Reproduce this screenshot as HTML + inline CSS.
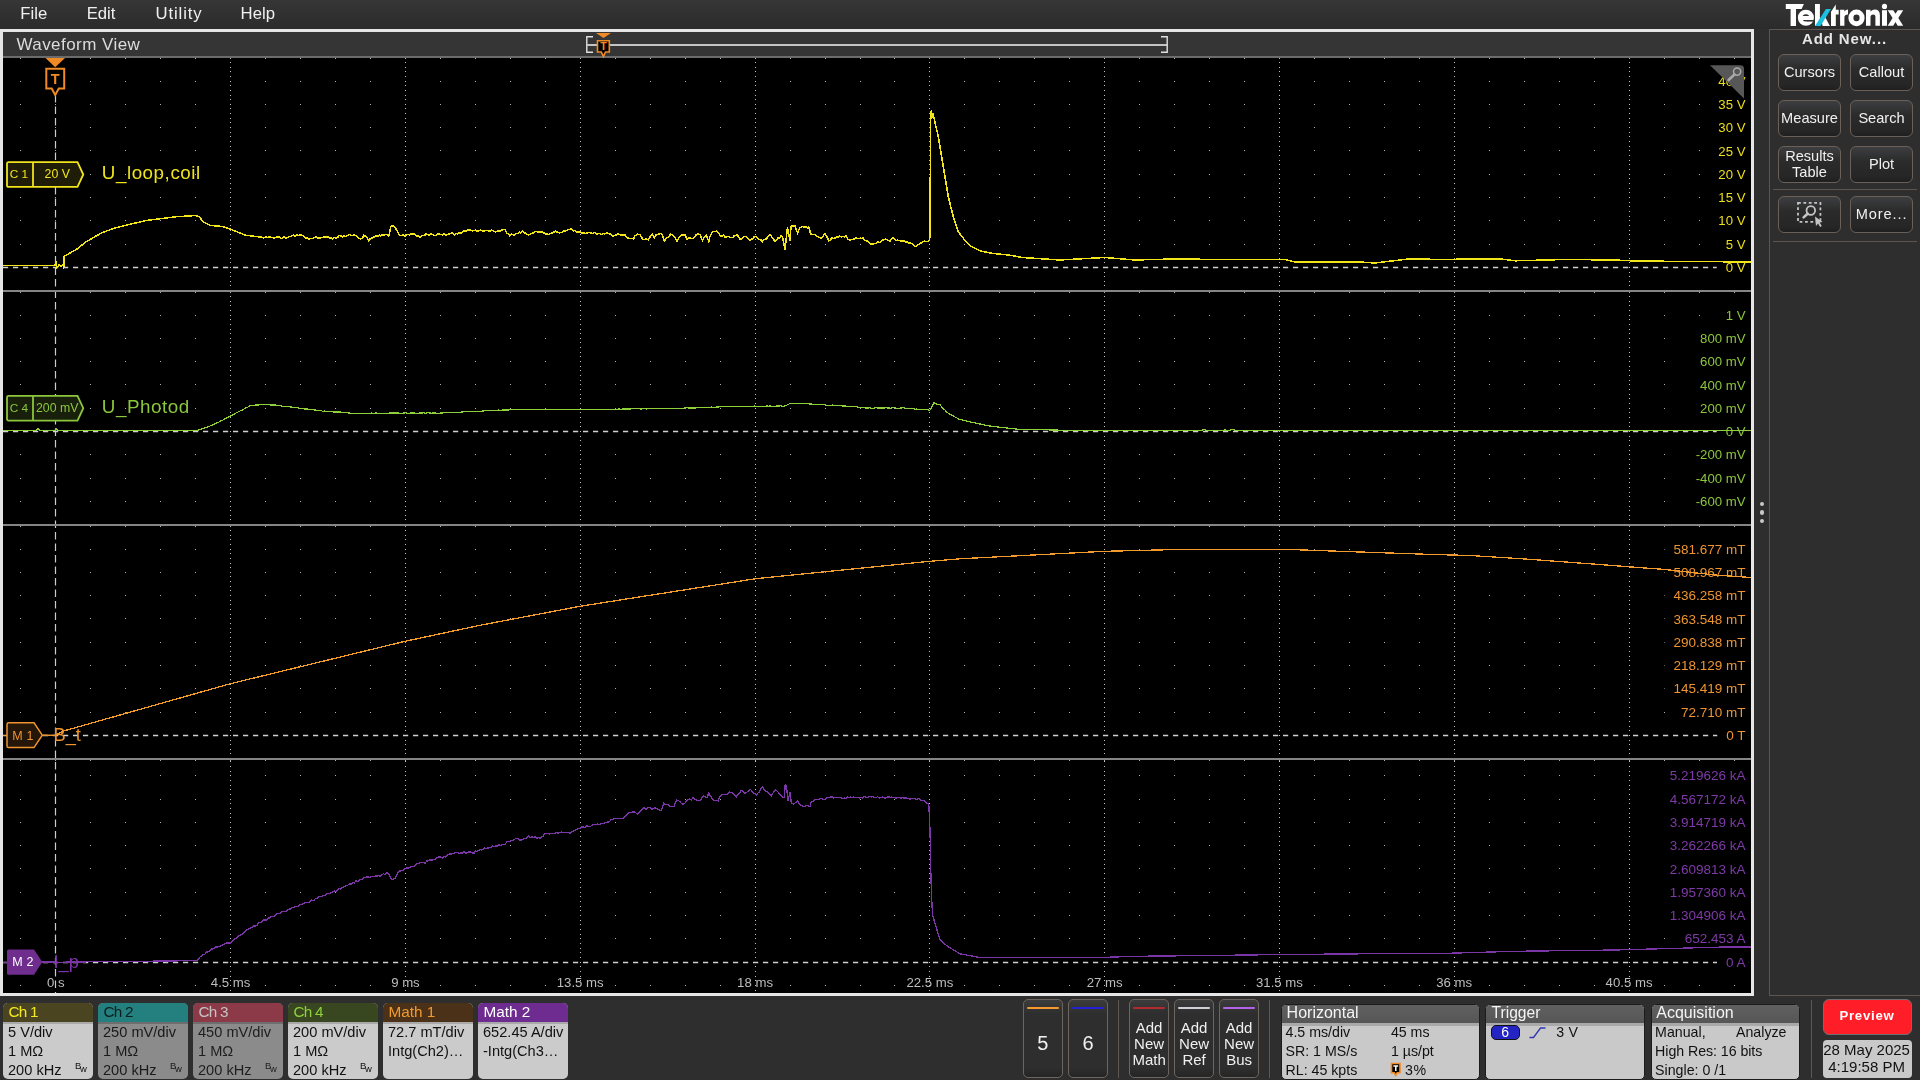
<!DOCTYPE html>
<html><head><meta charset="utf-8"><style>
*{box-sizing:border-box}
html,body{margin:0;padding:0;width:1920px;height:1080px;overflow:hidden;background:#2e2e2e;font-family:"Liberation Sans", sans-serif}
.a{position:absolute}
.btn{position:absolute;width:63px;height:37px;border:1px solid #6b6058;border-radius:6px;background:linear-gradient(#3d3e40,#2b2b2b 40%,#262626 85%,#1f1f1f)}
.tb{position:absolute;top:999.3px;width:39.5px;height:79px;border:1px solid #6e665e;border-radius:5px;background:linear-gradient(#3c3c3c,#2e2e2e 18%,#2e2e2e 88%,#252525)}
.tb .ln{position:absolute;left:3px;right:3px;top:6.5px;height:2.5px;border-radius:1px}
.vs{position:absolute;top:1000px;width:1px;height:77.6px;background:#5f5852}
.pn{position:absolute;top:1003.5px;height:76px;border-radius:5px;overflow:hidden;background:#c9c9c9;border:1px solid #1c1c1c}
.pn .h{height:18.5px;background:linear-gradient(#606060,#565656)}
.pn .s{height:2.5px;background:#a9a9a9}
</style></head><body>
<div class="a" style="left:0;top:0;width:1920px;height:29px;background:linear-gradient(#363636,#2b2b2b)"></div>
<div class="a" style="left:0;top:29px;width:1754px;height:967px;background:#e6e6e6"></div>
<div class="a" style="left:3px;top:32px;width:1748px;height:24px;background:#353535"></div>
<div class="a" style="left:3px;top:56px;width:1748px;height:1.7px;background:#6c6c6c"></div>
<div class="a" style="left:3px;top:57.7px;width:1748px;height:935.3px;background:#000"></div>
<svg class="a" style="left:0;top:0" width="1920" height="60" font-family='"Liberation Sans", sans-serif'><path d="M593,36.8 L586.8,36.8 L586.8,52.3 L593,52.3" fill="none" stroke="#e0e0e0" stroke-width="1.4"/>
<line x1="587" y1="45" x2="1167" y2="45" stroke="#c4c4c4" stroke-width="1.8"/>
<path d="M1161,36.8 L1167.2,36.8 L1167.2,52.3 L1161,52.3" fill="none" stroke="#e0e0e0" stroke-width="1.4"/>
<path d="M596,33 L611,33 L603.5,38 Z" fill="#f08a24"/>
<path d="M597.5,40.8 L609.3,40.8 L609.3,52 L605.5,52 L603.4,56.5 L601.3,52 L597.5,52 Z" fill="#000" stroke="#f08a24" stroke-width="1.6"/>
<text x="603.4" y="50.3" text-anchor="middle" fill="#f08a24" font-size="10.5" font-weight="700">T</text></svg>
<svg class="a" style="left:0;top:0;will-change:transform" width="1920" height="1000" font-family='"Liberation Sans", sans-serif'>
<clipPath id="pc"><rect x="3" y="57.7" width="1748" height="935.3"/></clipPath>
<g clip-path="url(#pc)">
<path d="M20,81h1v1h-1zM55,81h1v1h-1zM90,81h1v1h-1zM125,81h1v1h-1zM160,81h1v1h-1zM195,81h1v1h-1zM230,81h1v1h-1zM265,81h1v1h-1zM300,81h1v1h-1zM335,81h1v1h-1zM370,81h1v1h-1zM405,81h1v1h-1zM440,81h1v1h-1zM475,81h1v1h-1zM510,81h1v1h-1zM545,81h1v1h-1zM580,81h1v1h-1zM615,81h1v1h-1zM650,81h1v1h-1zM685,81h1v1h-1zM720,81h1v1h-1zM755,81h1v1h-1zM790,81h1v1h-1zM825,81h1v1h-1zM860,81h1v1h-1zM894,81h1v1h-1zM929,81h1v1h-1zM964,81h1v1h-1zM999,81h1v1h-1zM1034,81h1v1h-1zM1069,81h1v1h-1zM1104,81h1v1h-1zM1139,81h1v1h-1zM1174,81h1v1h-1zM1209,81h1v1h-1zM1244,81h1v1h-1zM1279,81h1v1h-1zM1314,81h1v1h-1zM1349,81h1v1h-1zM1384,81h1v1h-1zM1419,81h1v1h-1zM1454,81h1v1h-1zM1489,81h1v1h-1zM1524,81h1v1h-1zM1559,81h1v1h-1zM1594,81h1v1h-1zM1629,81h1v1h-1zM1664,81h1v1h-1zM1699,81h1v1h-1zM1734,81h1v1h-1zM20,104h1v1h-1zM55,104h1v1h-1zM90,104h1v1h-1zM125,104h1v1h-1zM160,104h1v1h-1zM195,104h1v1h-1zM230,104h1v1h-1zM265,104h1v1h-1zM300,104h1v1h-1zM335,104h1v1h-1zM370,104h1v1h-1zM405,104h1v1h-1zM440,104h1v1h-1zM475,104h1v1h-1zM510,104h1v1h-1zM545,104h1v1h-1zM580,104h1v1h-1zM615,104h1v1h-1zM650,104h1v1h-1zM685,104h1v1h-1zM720,104h1v1h-1zM755,104h1v1h-1zM790,104h1v1h-1zM825,104h1v1h-1zM860,104h1v1h-1zM894,104h1v1h-1zM929,104h1v1h-1zM964,104h1v1h-1zM999,104h1v1h-1zM1034,104h1v1h-1zM1069,104h1v1h-1zM1104,104h1v1h-1zM1139,104h1v1h-1zM1174,104h1v1h-1zM1209,104h1v1h-1zM1244,104h1v1h-1zM1279,104h1v1h-1zM1314,104h1v1h-1zM1349,104h1v1h-1zM1384,104h1v1h-1zM1419,104h1v1h-1zM1454,104h1v1h-1zM1489,104h1v1h-1zM1524,104h1v1h-1zM1559,104h1v1h-1zM1594,104h1v1h-1zM1629,104h1v1h-1zM1664,104h1v1h-1zM1699,104h1v1h-1zM1734,104h1v1h-1zM20,127h1v1h-1zM55,127h1v1h-1zM90,127h1v1h-1zM125,127h1v1h-1zM160,127h1v1h-1zM195,127h1v1h-1zM230,127h1v1h-1zM265,127h1v1h-1zM300,127h1v1h-1zM335,127h1v1h-1zM370,127h1v1h-1zM405,127h1v1h-1zM440,127h1v1h-1zM475,127h1v1h-1zM510,127h1v1h-1zM545,127h1v1h-1zM580,127h1v1h-1zM615,127h1v1h-1zM650,127h1v1h-1zM685,127h1v1h-1zM720,127h1v1h-1zM755,127h1v1h-1zM790,127h1v1h-1zM825,127h1v1h-1zM860,127h1v1h-1zM894,127h1v1h-1zM929,127h1v1h-1zM964,127h1v1h-1zM999,127h1v1h-1zM1034,127h1v1h-1zM1069,127h1v1h-1zM1104,127h1v1h-1zM1139,127h1v1h-1zM1174,127h1v1h-1zM1209,127h1v1h-1zM1244,127h1v1h-1zM1279,127h1v1h-1zM1314,127h1v1h-1zM1349,127h1v1h-1zM1384,127h1v1h-1zM1419,127h1v1h-1zM1454,127h1v1h-1zM1489,127h1v1h-1zM1524,127h1v1h-1zM1559,127h1v1h-1zM1594,127h1v1h-1zM1629,127h1v1h-1zM1664,127h1v1h-1zM1699,127h1v1h-1zM1734,127h1v1h-1zM20,150h1v1h-1zM55,150h1v1h-1zM90,150h1v1h-1zM125,150h1v1h-1zM160,150h1v1h-1zM195,150h1v1h-1zM230,150h1v1h-1zM265,150h1v1h-1zM300,150h1v1h-1zM335,150h1v1h-1zM370,150h1v1h-1zM405,150h1v1h-1zM440,150h1v1h-1zM475,150h1v1h-1zM510,150h1v1h-1zM545,150h1v1h-1zM580,150h1v1h-1zM615,150h1v1h-1zM650,150h1v1h-1zM685,150h1v1h-1zM720,150h1v1h-1zM755,150h1v1h-1zM790,150h1v1h-1zM825,150h1v1h-1zM860,150h1v1h-1zM894,150h1v1h-1zM929,150h1v1h-1zM964,150h1v1h-1zM999,150h1v1h-1zM1034,150h1v1h-1zM1069,150h1v1h-1zM1104,150h1v1h-1zM1139,150h1v1h-1zM1174,150h1v1h-1zM1209,150h1v1h-1zM1244,150h1v1h-1zM1279,150h1v1h-1zM1314,150h1v1h-1zM1349,150h1v1h-1zM1384,150h1v1h-1zM1419,150h1v1h-1zM1454,150h1v1h-1zM1489,150h1v1h-1zM1524,150h1v1h-1zM1559,150h1v1h-1zM1594,150h1v1h-1zM1629,150h1v1h-1zM1664,150h1v1h-1zM1699,150h1v1h-1zM1734,150h1v1h-1zM20,174h1v1h-1zM55,174h1v1h-1zM90,174h1v1h-1zM125,174h1v1h-1zM160,174h1v1h-1zM195,174h1v1h-1zM230,174h1v1h-1zM265,174h1v1h-1zM300,174h1v1h-1zM335,174h1v1h-1zM370,174h1v1h-1zM405,174h1v1h-1zM440,174h1v1h-1zM475,174h1v1h-1zM510,174h1v1h-1zM545,174h1v1h-1zM580,174h1v1h-1zM615,174h1v1h-1zM650,174h1v1h-1zM685,174h1v1h-1zM720,174h1v1h-1zM755,174h1v1h-1zM790,174h1v1h-1zM825,174h1v1h-1zM860,174h1v1h-1zM894,174h1v1h-1zM929,174h1v1h-1zM964,174h1v1h-1zM999,174h1v1h-1zM1034,174h1v1h-1zM1069,174h1v1h-1zM1104,174h1v1h-1zM1139,174h1v1h-1zM1174,174h1v1h-1zM1209,174h1v1h-1zM1244,174h1v1h-1zM1279,174h1v1h-1zM1314,174h1v1h-1zM1349,174h1v1h-1zM1384,174h1v1h-1zM1419,174h1v1h-1zM1454,174h1v1h-1zM1489,174h1v1h-1zM1524,174h1v1h-1zM1559,174h1v1h-1zM1594,174h1v1h-1zM1629,174h1v1h-1zM1664,174h1v1h-1zM1699,174h1v1h-1zM1734,174h1v1h-1zM20,197h1v1h-1zM55,197h1v1h-1zM90,197h1v1h-1zM125,197h1v1h-1zM160,197h1v1h-1zM195,197h1v1h-1zM230,197h1v1h-1zM265,197h1v1h-1zM300,197h1v1h-1zM335,197h1v1h-1zM370,197h1v1h-1zM405,197h1v1h-1zM440,197h1v1h-1zM475,197h1v1h-1zM510,197h1v1h-1zM545,197h1v1h-1zM580,197h1v1h-1zM615,197h1v1h-1zM650,197h1v1h-1zM685,197h1v1h-1zM720,197h1v1h-1zM755,197h1v1h-1zM790,197h1v1h-1zM825,197h1v1h-1zM860,197h1v1h-1zM894,197h1v1h-1zM929,197h1v1h-1zM964,197h1v1h-1zM999,197h1v1h-1zM1034,197h1v1h-1zM1069,197h1v1h-1zM1104,197h1v1h-1zM1139,197h1v1h-1zM1174,197h1v1h-1zM1209,197h1v1h-1zM1244,197h1v1h-1zM1279,197h1v1h-1zM1314,197h1v1h-1zM1349,197h1v1h-1zM1384,197h1v1h-1zM1419,197h1v1h-1zM1454,197h1v1h-1zM1489,197h1v1h-1zM1524,197h1v1h-1zM1559,197h1v1h-1zM1594,197h1v1h-1zM1629,197h1v1h-1zM1664,197h1v1h-1zM1699,197h1v1h-1zM1734,197h1v1h-1zM20,220h1v1h-1zM55,220h1v1h-1zM90,220h1v1h-1zM125,220h1v1h-1zM160,220h1v1h-1zM195,220h1v1h-1zM230,220h1v1h-1zM265,220h1v1h-1zM300,220h1v1h-1zM335,220h1v1h-1zM370,220h1v1h-1zM405,220h1v1h-1zM440,220h1v1h-1zM475,220h1v1h-1zM510,220h1v1h-1zM545,220h1v1h-1zM580,220h1v1h-1zM615,220h1v1h-1zM650,220h1v1h-1zM685,220h1v1h-1zM720,220h1v1h-1zM755,220h1v1h-1zM790,220h1v1h-1zM825,220h1v1h-1zM860,220h1v1h-1zM894,220h1v1h-1zM929,220h1v1h-1zM964,220h1v1h-1zM999,220h1v1h-1zM1034,220h1v1h-1zM1069,220h1v1h-1zM1104,220h1v1h-1zM1139,220h1v1h-1zM1174,220h1v1h-1zM1209,220h1v1h-1zM1244,220h1v1h-1zM1279,220h1v1h-1zM1314,220h1v1h-1zM1349,220h1v1h-1zM1384,220h1v1h-1zM1419,220h1v1h-1zM1454,220h1v1h-1zM1489,220h1v1h-1zM1524,220h1v1h-1zM1559,220h1v1h-1zM1594,220h1v1h-1zM1629,220h1v1h-1zM1664,220h1v1h-1zM1699,220h1v1h-1zM1734,220h1v1h-1zM20,244h1v1h-1zM55,244h1v1h-1zM90,244h1v1h-1zM125,244h1v1h-1zM160,244h1v1h-1zM195,244h1v1h-1zM230,244h1v1h-1zM265,244h1v1h-1zM300,244h1v1h-1zM335,244h1v1h-1zM370,244h1v1h-1zM405,244h1v1h-1zM440,244h1v1h-1zM475,244h1v1h-1zM510,244h1v1h-1zM545,244h1v1h-1zM580,244h1v1h-1zM615,244h1v1h-1zM650,244h1v1h-1zM685,244h1v1h-1zM720,244h1v1h-1zM755,244h1v1h-1zM790,244h1v1h-1zM825,244h1v1h-1zM860,244h1v1h-1zM894,244h1v1h-1zM929,244h1v1h-1zM964,244h1v1h-1zM999,244h1v1h-1zM1034,244h1v1h-1zM1069,244h1v1h-1zM1104,244h1v1h-1zM1139,244h1v1h-1zM1174,244h1v1h-1zM1209,244h1v1h-1zM1244,244h1v1h-1zM1279,244h1v1h-1zM1314,244h1v1h-1zM1349,244h1v1h-1zM1384,244h1v1h-1zM1419,244h1v1h-1zM1454,244h1v1h-1zM1489,244h1v1h-1zM1524,244h1v1h-1zM1559,244h1v1h-1zM1594,244h1v1h-1zM1629,244h1v1h-1zM1664,244h1v1h-1zM1699,244h1v1h-1zM1734,244h1v1h-1zM20,315h1v1h-1zM55,315h1v1h-1zM90,315h1v1h-1zM125,315h1v1h-1zM160,315h1v1h-1zM195,315h1v1h-1zM230,315h1v1h-1zM265,315h1v1h-1zM300,315h1v1h-1zM335,315h1v1h-1zM370,315h1v1h-1zM405,315h1v1h-1zM440,315h1v1h-1zM475,315h1v1h-1zM510,315h1v1h-1zM545,315h1v1h-1zM580,315h1v1h-1zM615,315h1v1h-1zM650,315h1v1h-1zM685,315h1v1h-1zM720,315h1v1h-1zM755,315h1v1h-1zM790,315h1v1h-1zM825,315h1v1h-1zM860,315h1v1h-1zM894,315h1v1h-1zM929,315h1v1h-1zM964,315h1v1h-1zM999,315h1v1h-1zM1034,315h1v1h-1zM1069,315h1v1h-1zM1104,315h1v1h-1zM1139,315h1v1h-1zM1174,315h1v1h-1zM1209,315h1v1h-1zM1244,315h1v1h-1zM1279,315h1v1h-1zM1314,315h1v1h-1zM1349,315h1v1h-1zM1384,315h1v1h-1zM1419,315h1v1h-1zM1454,315h1v1h-1zM1489,315h1v1h-1zM1524,315h1v1h-1zM1559,315h1v1h-1zM1594,315h1v1h-1zM1629,315h1v1h-1zM1664,315h1v1h-1zM1699,315h1v1h-1zM1734,315h1v1h-1zM20,338h1v1h-1zM55,338h1v1h-1zM90,338h1v1h-1zM125,338h1v1h-1zM160,338h1v1h-1zM195,338h1v1h-1zM230,338h1v1h-1zM265,338h1v1h-1zM300,338h1v1h-1zM335,338h1v1h-1zM370,338h1v1h-1zM405,338h1v1h-1zM440,338h1v1h-1zM475,338h1v1h-1zM510,338h1v1h-1zM545,338h1v1h-1zM580,338h1v1h-1zM615,338h1v1h-1zM650,338h1v1h-1zM685,338h1v1h-1zM720,338h1v1h-1zM755,338h1v1h-1zM790,338h1v1h-1zM825,338h1v1h-1zM860,338h1v1h-1zM894,338h1v1h-1zM929,338h1v1h-1zM964,338h1v1h-1zM999,338h1v1h-1zM1034,338h1v1h-1zM1069,338h1v1h-1zM1104,338h1v1h-1zM1139,338h1v1h-1zM1174,338h1v1h-1zM1209,338h1v1h-1zM1244,338h1v1h-1zM1279,338h1v1h-1zM1314,338h1v1h-1zM1349,338h1v1h-1zM1384,338h1v1h-1zM1419,338h1v1h-1zM1454,338h1v1h-1zM1489,338h1v1h-1zM1524,338h1v1h-1zM1559,338h1v1h-1zM1594,338h1v1h-1zM1629,338h1v1h-1zM1664,338h1v1h-1zM1699,338h1v1h-1zM1734,338h1v1h-1zM20,361h1v1h-1zM55,361h1v1h-1zM90,361h1v1h-1zM125,361h1v1h-1zM160,361h1v1h-1zM195,361h1v1h-1zM230,361h1v1h-1zM265,361h1v1h-1zM300,361h1v1h-1zM335,361h1v1h-1zM370,361h1v1h-1zM405,361h1v1h-1zM440,361h1v1h-1zM475,361h1v1h-1zM510,361h1v1h-1zM545,361h1v1h-1zM580,361h1v1h-1zM615,361h1v1h-1zM650,361h1v1h-1zM685,361h1v1h-1zM720,361h1v1h-1zM755,361h1v1h-1zM790,361h1v1h-1zM825,361h1v1h-1zM860,361h1v1h-1zM894,361h1v1h-1zM929,361h1v1h-1zM964,361h1v1h-1zM999,361h1v1h-1zM1034,361h1v1h-1zM1069,361h1v1h-1zM1104,361h1v1h-1zM1139,361h1v1h-1zM1174,361h1v1h-1zM1209,361h1v1h-1zM1244,361h1v1h-1zM1279,361h1v1h-1zM1314,361h1v1h-1zM1349,361h1v1h-1zM1384,361h1v1h-1zM1419,361h1v1h-1zM1454,361h1v1h-1zM1489,361h1v1h-1zM1524,361h1v1h-1zM1559,361h1v1h-1zM1594,361h1v1h-1zM1629,361h1v1h-1zM1664,361h1v1h-1zM1699,361h1v1h-1zM1734,361h1v1h-1zM20,384h1v1h-1zM55,384h1v1h-1zM90,384h1v1h-1zM125,384h1v1h-1zM160,384h1v1h-1zM195,384h1v1h-1zM230,384h1v1h-1zM265,384h1v1h-1zM300,384h1v1h-1zM335,384h1v1h-1zM370,384h1v1h-1zM405,384h1v1h-1zM440,384h1v1h-1zM475,384h1v1h-1zM510,384h1v1h-1zM545,384h1v1h-1zM580,384h1v1h-1zM615,384h1v1h-1zM650,384h1v1h-1zM685,384h1v1h-1zM720,384h1v1h-1zM755,384h1v1h-1zM790,384h1v1h-1zM825,384h1v1h-1zM860,384h1v1h-1zM894,384h1v1h-1zM929,384h1v1h-1zM964,384h1v1h-1zM999,384h1v1h-1zM1034,384h1v1h-1zM1069,384h1v1h-1zM1104,384h1v1h-1zM1139,384h1v1h-1zM1174,384h1v1h-1zM1209,384h1v1h-1zM1244,384h1v1h-1zM1279,384h1v1h-1zM1314,384h1v1h-1zM1349,384h1v1h-1zM1384,384h1v1h-1zM1419,384h1v1h-1zM1454,384h1v1h-1zM1489,384h1v1h-1zM1524,384h1v1h-1zM1559,384h1v1h-1zM1594,384h1v1h-1zM1629,384h1v1h-1zM1664,384h1v1h-1zM1699,384h1v1h-1zM1734,384h1v1h-1zM20,408h1v1h-1zM55,408h1v1h-1zM90,408h1v1h-1zM125,408h1v1h-1zM160,408h1v1h-1zM195,408h1v1h-1zM230,408h1v1h-1zM265,408h1v1h-1zM300,408h1v1h-1zM335,408h1v1h-1zM370,408h1v1h-1zM405,408h1v1h-1zM440,408h1v1h-1zM475,408h1v1h-1zM510,408h1v1h-1zM545,408h1v1h-1zM580,408h1v1h-1zM615,408h1v1h-1zM650,408h1v1h-1zM685,408h1v1h-1zM720,408h1v1h-1zM755,408h1v1h-1zM790,408h1v1h-1zM825,408h1v1h-1zM860,408h1v1h-1zM894,408h1v1h-1zM929,408h1v1h-1zM964,408h1v1h-1zM999,408h1v1h-1zM1034,408h1v1h-1zM1069,408h1v1h-1zM1104,408h1v1h-1zM1139,408h1v1h-1zM1174,408h1v1h-1zM1209,408h1v1h-1zM1244,408h1v1h-1zM1279,408h1v1h-1zM1314,408h1v1h-1zM1349,408h1v1h-1zM1384,408h1v1h-1zM1419,408h1v1h-1zM1454,408h1v1h-1zM1489,408h1v1h-1zM1524,408h1v1h-1zM1559,408h1v1h-1zM1594,408h1v1h-1zM1629,408h1v1h-1zM1664,408h1v1h-1zM1699,408h1v1h-1zM1734,408h1v1h-1zM20,454h1v1h-1zM55,454h1v1h-1zM90,454h1v1h-1zM125,454h1v1h-1zM160,454h1v1h-1zM195,454h1v1h-1zM230,454h1v1h-1zM265,454h1v1h-1zM300,454h1v1h-1zM335,454h1v1h-1zM370,454h1v1h-1zM405,454h1v1h-1zM440,454h1v1h-1zM475,454h1v1h-1zM510,454h1v1h-1zM545,454h1v1h-1zM580,454h1v1h-1zM615,454h1v1h-1zM650,454h1v1h-1zM685,454h1v1h-1zM720,454h1v1h-1zM755,454h1v1h-1zM790,454h1v1h-1zM825,454h1v1h-1zM860,454h1v1h-1zM894,454h1v1h-1zM929,454h1v1h-1zM964,454h1v1h-1zM999,454h1v1h-1zM1034,454h1v1h-1zM1069,454h1v1h-1zM1104,454h1v1h-1zM1139,454h1v1h-1zM1174,454h1v1h-1zM1209,454h1v1h-1zM1244,454h1v1h-1zM1279,454h1v1h-1zM1314,454h1v1h-1zM1349,454h1v1h-1zM1384,454h1v1h-1zM1419,454h1v1h-1zM1454,454h1v1h-1zM1489,454h1v1h-1zM1524,454h1v1h-1zM1559,454h1v1h-1zM1594,454h1v1h-1zM1629,454h1v1h-1zM1664,454h1v1h-1zM1699,454h1v1h-1zM1734,454h1v1h-1zM20,478h1v1h-1zM55,478h1v1h-1zM90,478h1v1h-1zM125,478h1v1h-1zM160,478h1v1h-1zM195,478h1v1h-1zM230,478h1v1h-1zM265,478h1v1h-1zM300,478h1v1h-1zM335,478h1v1h-1zM370,478h1v1h-1zM405,478h1v1h-1zM440,478h1v1h-1zM475,478h1v1h-1zM510,478h1v1h-1zM545,478h1v1h-1zM580,478h1v1h-1zM615,478h1v1h-1zM650,478h1v1h-1zM685,478h1v1h-1zM720,478h1v1h-1zM755,478h1v1h-1zM790,478h1v1h-1zM825,478h1v1h-1zM860,478h1v1h-1zM894,478h1v1h-1zM929,478h1v1h-1zM964,478h1v1h-1zM999,478h1v1h-1zM1034,478h1v1h-1zM1069,478h1v1h-1zM1104,478h1v1h-1zM1139,478h1v1h-1zM1174,478h1v1h-1zM1209,478h1v1h-1zM1244,478h1v1h-1zM1279,478h1v1h-1zM1314,478h1v1h-1zM1349,478h1v1h-1zM1384,478h1v1h-1zM1419,478h1v1h-1zM1454,478h1v1h-1zM1489,478h1v1h-1zM1524,478h1v1h-1zM1559,478h1v1h-1zM1594,478h1v1h-1zM1629,478h1v1h-1zM1664,478h1v1h-1zM1699,478h1v1h-1zM1734,478h1v1h-1zM20,501h1v1h-1zM55,501h1v1h-1zM90,501h1v1h-1zM125,501h1v1h-1zM160,501h1v1h-1zM195,501h1v1h-1zM230,501h1v1h-1zM265,501h1v1h-1zM300,501h1v1h-1zM335,501h1v1h-1zM370,501h1v1h-1zM405,501h1v1h-1zM440,501h1v1h-1zM475,501h1v1h-1zM510,501h1v1h-1zM545,501h1v1h-1zM580,501h1v1h-1zM615,501h1v1h-1zM650,501h1v1h-1zM685,501h1v1h-1zM720,501h1v1h-1zM755,501h1v1h-1zM790,501h1v1h-1zM825,501h1v1h-1zM860,501h1v1h-1zM894,501h1v1h-1zM929,501h1v1h-1zM964,501h1v1h-1zM999,501h1v1h-1zM1034,501h1v1h-1zM1069,501h1v1h-1zM1104,501h1v1h-1zM1139,501h1v1h-1zM1174,501h1v1h-1zM1209,501h1v1h-1zM1244,501h1v1h-1zM1279,501h1v1h-1zM1314,501h1v1h-1zM1349,501h1v1h-1zM1384,501h1v1h-1zM1419,501h1v1h-1zM1454,501h1v1h-1zM1489,501h1v1h-1zM1524,501h1v1h-1zM1559,501h1v1h-1zM1594,501h1v1h-1zM1629,501h1v1h-1zM1664,501h1v1h-1zM1699,501h1v1h-1zM1734,501h1v1h-1zM20,549h1v1h-1zM55,549h1v1h-1zM90,549h1v1h-1zM125,549h1v1h-1zM160,549h1v1h-1zM195,549h1v1h-1zM230,549h1v1h-1zM265,549h1v1h-1zM300,549h1v1h-1zM335,549h1v1h-1zM370,549h1v1h-1zM405,549h1v1h-1zM440,549h1v1h-1zM475,549h1v1h-1zM510,549h1v1h-1zM545,549h1v1h-1zM580,549h1v1h-1zM615,549h1v1h-1zM650,549h1v1h-1zM685,549h1v1h-1zM720,549h1v1h-1zM755,549h1v1h-1zM790,549h1v1h-1zM825,549h1v1h-1zM860,549h1v1h-1zM894,549h1v1h-1zM929,549h1v1h-1zM964,549h1v1h-1zM999,549h1v1h-1zM1034,549h1v1h-1zM1069,549h1v1h-1zM1104,549h1v1h-1zM1139,549h1v1h-1zM1174,549h1v1h-1zM1209,549h1v1h-1zM1244,549h1v1h-1zM1279,549h1v1h-1zM1314,549h1v1h-1zM1349,549h1v1h-1zM1384,549h1v1h-1zM1419,549h1v1h-1zM1454,549h1v1h-1zM1489,549h1v1h-1zM1524,549h1v1h-1zM1559,549h1v1h-1zM1594,549h1v1h-1zM1629,549h1v1h-1zM1664,549h1v1h-1zM1699,549h1v1h-1zM1734,549h1v1h-1zM20,572h1v1h-1zM55,572h1v1h-1zM90,572h1v1h-1zM125,572h1v1h-1zM160,572h1v1h-1zM195,572h1v1h-1zM230,572h1v1h-1zM265,572h1v1h-1zM300,572h1v1h-1zM335,572h1v1h-1zM370,572h1v1h-1zM405,572h1v1h-1zM440,572h1v1h-1zM475,572h1v1h-1zM510,572h1v1h-1zM545,572h1v1h-1zM580,572h1v1h-1zM615,572h1v1h-1zM650,572h1v1h-1zM685,572h1v1h-1zM720,572h1v1h-1zM755,572h1v1h-1zM790,572h1v1h-1zM825,572h1v1h-1zM860,572h1v1h-1zM894,572h1v1h-1zM929,572h1v1h-1zM964,572h1v1h-1zM999,572h1v1h-1zM1034,572h1v1h-1zM1069,572h1v1h-1zM1104,572h1v1h-1zM1139,572h1v1h-1zM1174,572h1v1h-1zM1209,572h1v1h-1zM1244,572h1v1h-1zM1279,572h1v1h-1zM1314,572h1v1h-1zM1349,572h1v1h-1zM1384,572h1v1h-1zM1419,572h1v1h-1zM1454,572h1v1h-1zM1489,572h1v1h-1zM1524,572h1v1h-1zM1559,572h1v1h-1zM1594,572h1v1h-1zM1629,572h1v1h-1zM1664,572h1v1h-1zM1699,572h1v1h-1zM1734,572h1v1h-1zM20,595h1v1h-1zM55,595h1v1h-1zM90,595h1v1h-1zM125,595h1v1h-1zM160,595h1v1h-1zM195,595h1v1h-1zM230,595h1v1h-1zM265,595h1v1h-1zM300,595h1v1h-1zM335,595h1v1h-1zM370,595h1v1h-1zM405,595h1v1h-1zM440,595h1v1h-1zM475,595h1v1h-1zM510,595h1v1h-1zM545,595h1v1h-1zM580,595h1v1h-1zM615,595h1v1h-1zM650,595h1v1h-1zM685,595h1v1h-1zM720,595h1v1h-1zM755,595h1v1h-1zM790,595h1v1h-1zM825,595h1v1h-1zM860,595h1v1h-1zM894,595h1v1h-1zM929,595h1v1h-1zM964,595h1v1h-1zM999,595h1v1h-1zM1034,595h1v1h-1zM1069,595h1v1h-1zM1104,595h1v1h-1zM1139,595h1v1h-1zM1174,595h1v1h-1zM1209,595h1v1h-1zM1244,595h1v1h-1zM1279,595h1v1h-1zM1314,595h1v1h-1zM1349,595h1v1h-1zM1384,595h1v1h-1zM1419,595h1v1h-1zM1454,595h1v1h-1zM1489,595h1v1h-1zM1524,595h1v1h-1zM1559,595h1v1h-1zM1594,595h1v1h-1zM1629,595h1v1h-1zM1664,595h1v1h-1zM1699,595h1v1h-1zM1734,595h1v1h-1zM20,618h1v1h-1zM55,618h1v1h-1zM90,618h1v1h-1zM125,618h1v1h-1zM160,618h1v1h-1zM195,618h1v1h-1zM230,618h1v1h-1zM265,618h1v1h-1zM300,618h1v1h-1zM335,618h1v1h-1zM370,618h1v1h-1zM405,618h1v1h-1zM440,618h1v1h-1zM475,618h1v1h-1zM510,618h1v1h-1zM545,618h1v1h-1zM580,618h1v1h-1zM615,618h1v1h-1zM650,618h1v1h-1zM685,618h1v1h-1zM720,618h1v1h-1zM755,618h1v1h-1zM790,618h1v1h-1zM825,618h1v1h-1zM860,618h1v1h-1zM894,618h1v1h-1zM929,618h1v1h-1zM964,618h1v1h-1zM999,618h1v1h-1zM1034,618h1v1h-1zM1069,618h1v1h-1zM1104,618h1v1h-1zM1139,618h1v1h-1zM1174,618h1v1h-1zM1209,618h1v1h-1zM1244,618h1v1h-1zM1279,618h1v1h-1zM1314,618h1v1h-1zM1349,618h1v1h-1zM1384,618h1v1h-1zM1419,618h1v1h-1zM1454,618h1v1h-1zM1489,618h1v1h-1zM1524,618h1v1h-1zM1559,618h1v1h-1zM1594,618h1v1h-1zM1629,618h1v1h-1zM1664,618h1v1h-1zM1699,618h1v1h-1zM1734,618h1v1h-1zM20,642h1v1h-1zM55,642h1v1h-1zM90,642h1v1h-1zM125,642h1v1h-1zM160,642h1v1h-1zM195,642h1v1h-1zM230,642h1v1h-1zM265,642h1v1h-1zM300,642h1v1h-1zM335,642h1v1h-1zM370,642h1v1h-1zM405,642h1v1h-1zM440,642h1v1h-1zM475,642h1v1h-1zM510,642h1v1h-1zM545,642h1v1h-1zM580,642h1v1h-1zM615,642h1v1h-1zM650,642h1v1h-1zM685,642h1v1h-1zM720,642h1v1h-1zM755,642h1v1h-1zM790,642h1v1h-1zM825,642h1v1h-1zM860,642h1v1h-1zM894,642h1v1h-1zM929,642h1v1h-1zM964,642h1v1h-1zM999,642h1v1h-1zM1034,642h1v1h-1zM1069,642h1v1h-1zM1104,642h1v1h-1zM1139,642h1v1h-1zM1174,642h1v1h-1zM1209,642h1v1h-1zM1244,642h1v1h-1zM1279,642h1v1h-1zM1314,642h1v1h-1zM1349,642h1v1h-1zM1384,642h1v1h-1zM1419,642h1v1h-1zM1454,642h1v1h-1zM1489,642h1v1h-1zM1524,642h1v1h-1zM1559,642h1v1h-1zM1594,642h1v1h-1zM1629,642h1v1h-1zM1664,642h1v1h-1zM1699,642h1v1h-1zM1734,642h1v1h-1zM20,665h1v1h-1zM55,665h1v1h-1zM90,665h1v1h-1zM125,665h1v1h-1zM160,665h1v1h-1zM195,665h1v1h-1zM230,665h1v1h-1zM265,665h1v1h-1zM300,665h1v1h-1zM335,665h1v1h-1zM370,665h1v1h-1zM405,665h1v1h-1zM440,665h1v1h-1zM475,665h1v1h-1zM510,665h1v1h-1zM545,665h1v1h-1zM580,665h1v1h-1zM615,665h1v1h-1zM650,665h1v1h-1zM685,665h1v1h-1zM720,665h1v1h-1zM755,665h1v1h-1zM790,665h1v1h-1zM825,665h1v1h-1zM860,665h1v1h-1zM894,665h1v1h-1zM929,665h1v1h-1zM964,665h1v1h-1zM999,665h1v1h-1zM1034,665h1v1h-1zM1069,665h1v1h-1zM1104,665h1v1h-1zM1139,665h1v1h-1zM1174,665h1v1h-1zM1209,665h1v1h-1zM1244,665h1v1h-1zM1279,665h1v1h-1zM1314,665h1v1h-1zM1349,665h1v1h-1zM1384,665h1v1h-1zM1419,665h1v1h-1zM1454,665h1v1h-1zM1489,665h1v1h-1zM1524,665h1v1h-1zM1559,665h1v1h-1zM1594,665h1v1h-1zM1629,665h1v1h-1zM1664,665h1v1h-1zM1699,665h1v1h-1zM1734,665h1v1h-1zM20,688h1v1h-1zM55,688h1v1h-1zM90,688h1v1h-1zM125,688h1v1h-1zM160,688h1v1h-1zM195,688h1v1h-1zM230,688h1v1h-1zM265,688h1v1h-1zM300,688h1v1h-1zM335,688h1v1h-1zM370,688h1v1h-1zM405,688h1v1h-1zM440,688h1v1h-1zM475,688h1v1h-1zM510,688h1v1h-1zM545,688h1v1h-1zM580,688h1v1h-1zM615,688h1v1h-1zM650,688h1v1h-1zM685,688h1v1h-1zM720,688h1v1h-1zM755,688h1v1h-1zM790,688h1v1h-1zM825,688h1v1h-1zM860,688h1v1h-1zM894,688h1v1h-1zM929,688h1v1h-1zM964,688h1v1h-1zM999,688h1v1h-1zM1034,688h1v1h-1zM1069,688h1v1h-1zM1104,688h1v1h-1zM1139,688h1v1h-1zM1174,688h1v1h-1zM1209,688h1v1h-1zM1244,688h1v1h-1zM1279,688h1v1h-1zM1314,688h1v1h-1zM1349,688h1v1h-1zM1384,688h1v1h-1zM1419,688h1v1h-1zM1454,688h1v1h-1zM1489,688h1v1h-1zM1524,688h1v1h-1zM1559,688h1v1h-1zM1594,688h1v1h-1zM1629,688h1v1h-1zM1664,688h1v1h-1zM1699,688h1v1h-1zM1734,688h1v1h-1zM20,712h1v1h-1zM55,712h1v1h-1zM90,712h1v1h-1zM125,712h1v1h-1zM160,712h1v1h-1zM195,712h1v1h-1zM230,712h1v1h-1zM265,712h1v1h-1zM300,712h1v1h-1zM335,712h1v1h-1zM370,712h1v1h-1zM405,712h1v1h-1zM440,712h1v1h-1zM475,712h1v1h-1zM510,712h1v1h-1zM545,712h1v1h-1zM580,712h1v1h-1zM615,712h1v1h-1zM650,712h1v1h-1zM685,712h1v1h-1zM720,712h1v1h-1zM755,712h1v1h-1zM790,712h1v1h-1zM825,712h1v1h-1zM860,712h1v1h-1zM894,712h1v1h-1zM929,712h1v1h-1zM964,712h1v1h-1zM999,712h1v1h-1zM1034,712h1v1h-1zM1069,712h1v1h-1zM1104,712h1v1h-1zM1139,712h1v1h-1zM1174,712h1v1h-1zM1209,712h1v1h-1zM1244,712h1v1h-1zM1279,712h1v1h-1zM1314,712h1v1h-1zM1349,712h1v1h-1zM1384,712h1v1h-1zM1419,712h1v1h-1zM1454,712h1v1h-1zM1489,712h1v1h-1zM1524,712h1v1h-1zM1559,712h1v1h-1zM1594,712h1v1h-1zM1629,712h1v1h-1zM1664,712h1v1h-1zM1699,712h1v1h-1zM1734,712h1v1h-1zM20,775h1v1h-1zM55,775h1v1h-1zM90,775h1v1h-1zM125,775h1v1h-1zM160,775h1v1h-1zM195,775h1v1h-1zM230,775h1v1h-1zM265,775h1v1h-1zM300,775h1v1h-1zM335,775h1v1h-1zM370,775h1v1h-1zM405,775h1v1h-1zM440,775h1v1h-1zM475,775h1v1h-1zM510,775h1v1h-1zM545,775h1v1h-1zM580,775h1v1h-1zM615,775h1v1h-1zM650,775h1v1h-1zM685,775h1v1h-1zM720,775h1v1h-1zM755,775h1v1h-1zM790,775h1v1h-1zM825,775h1v1h-1zM860,775h1v1h-1zM894,775h1v1h-1zM929,775h1v1h-1zM964,775h1v1h-1zM999,775h1v1h-1zM1034,775h1v1h-1zM1069,775h1v1h-1zM1104,775h1v1h-1zM1139,775h1v1h-1zM1174,775h1v1h-1zM1209,775h1v1h-1zM1244,775h1v1h-1zM1279,775h1v1h-1zM1314,775h1v1h-1zM1349,775h1v1h-1zM1384,775h1v1h-1zM1419,775h1v1h-1zM1454,775h1v1h-1zM1489,775h1v1h-1zM1524,775h1v1h-1zM1559,775h1v1h-1zM1594,775h1v1h-1zM1629,775h1v1h-1zM1664,775h1v1h-1zM1699,775h1v1h-1zM1734,775h1v1h-1zM20,799h1v1h-1zM55,799h1v1h-1zM90,799h1v1h-1zM125,799h1v1h-1zM160,799h1v1h-1zM195,799h1v1h-1zM230,799h1v1h-1zM265,799h1v1h-1zM300,799h1v1h-1zM335,799h1v1h-1zM370,799h1v1h-1zM405,799h1v1h-1zM440,799h1v1h-1zM475,799h1v1h-1zM510,799h1v1h-1zM545,799h1v1h-1zM580,799h1v1h-1zM615,799h1v1h-1zM650,799h1v1h-1zM685,799h1v1h-1zM720,799h1v1h-1zM755,799h1v1h-1zM790,799h1v1h-1zM825,799h1v1h-1zM860,799h1v1h-1zM894,799h1v1h-1zM929,799h1v1h-1zM964,799h1v1h-1zM999,799h1v1h-1zM1034,799h1v1h-1zM1069,799h1v1h-1zM1104,799h1v1h-1zM1139,799h1v1h-1zM1174,799h1v1h-1zM1209,799h1v1h-1zM1244,799h1v1h-1zM1279,799h1v1h-1zM1314,799h1v1h-1zM1349,799h1v1h-1zM1384,799h1v1h-1zM1419,799h1v1h-1zM1454,799h1v1h-1zM1489,799h1v1h-1zM1524,799h1v1h-1zM1559,799h1v1h-1zM1594,799h1v1h-1zM1629,799h1v1h-1zM1664,799h1v1h-1zM1699,799h1v1h-1zM1734,799h1v1h-1zM20,822h1v1h-1zM55,822h1v1h-1zM90,822h1v1h-1zM125,822h1v1h-1zM160,822h1v1h-1zM195,822h1v1h-1zM230,822h1v1h-1zM265,822h1v1h-1zM300,822h1v1h-1zM335,822h1v1h-1zM370,822h1v1h-1zM405,822h1v1h-1zM440,822h1v1h-1zM475,822h1v1h-1zM510,822h1v1h-1zM545,822h1v1h-1zM580,822h1v1h-1zM615,822h1v1h-1zM650,822h1v1h-1zM685,822h1v1h-1zM720,822h1v1h-1zM755,822h1v1h-1zM790,822h1v1h-1zM825,822h1v1h-1zM860,822h1v1h-1zM894,822h1v1h-1zM929,822h1v1h-1zM964,822h1v1h-1zM999,822h1v1h-1zM1034,822h1v1h-1zM1069,822h1v1h-1zM1104,822h1v1h-1zM1139,822h1v1h-1zM1174,822h1v1h-1zM1209,822h1v1h-1zM1244,822h1v1h-1zM1279,822h1v1h-1zM1314,822h1v1h-1zM1349,822h1v1h-1zM1384,822h1v1h-1zM1419,822h1v1h-1zM1454,822h1v1h-1zM1489,822h1v1h-1zM1524,822h1v1h-1zM1559,822h1v1h-1zM1594,822h1v1h-1zM1629,822h1v1h-1zM1664,822h1v1h-1zM1699,822h1v1h-1zM1734,822h1v1h-1zM20,845h1v1h-1zM55,845h1v1h-1zM90,845h1v1h-1zM125,845h1v1h-1zM160,845h1v1h-1zM195,845h1v1h-1zM230,845h1v1h-1zM265,845h1v1h-1zM300,845h1v1h-1zM335,845h1v1h-1zM370,845h1v1h-1zM405,845h1v1h-1zM440,845h1v1h-1zM475,845h1v1h-1zM510,845h1v1h-1zM545,845h1v1h-1zM580,845h1v1h-1zM615,845h1v1h-1zM650,845h1v1h-1zM685,845h1v1h-1zM720,845h1v1h-1zM755,845h1v1h-1zM790,845h1v1h-1zM825,845h1v1h-1zM860,845h1v1h-1zM894,845h1v1h-1zM929,845h1v1h-1zM964,845h1v1h-1zM999,845h1v1h-1zM1034,845h1v1h-1zM1069,845h1v1h-1zM1104,845h1v1h-1zM1139,845h1v1h-1zM1174,845h1v1h-1zM1209,845h1v1h-1zM1244,845h1v1h-1zM1279,845h1v1h-1zM1314,845h1v1h-1zM1349,845h1v1h-1zM1384,845h1v1h-1zM1419,845h1v1h-1zM1454,845h1v1h-1zM1489,845h1v1h-1zM1524,845h1v1h-1zM1559,845h1v1h-1zM1594,845h1v1h-1zM1629,845h1v1h-1zM1664,845h1v1h-1zM1699,845h1v1h-1zM1734,845h1v1h-1zM20,868h1v1h-1zM55,868h1v1h-1zM90,868h1v1h-1zM125,868h1v1h-1zM160,868h1v1h-1zM195,868h1v1h-1zM230,868h1v1h-1zM265,868h1v1h-1zM300,868h1v1h-1zM335,868h1v1h-1zM370,868h1v1h-1zM405,868h1v1h-1zM440,868h1v1h-1zM475,868h1v1h-1zM510,868h1v1h-1zM545,868h1v1h-1zM580,868h1v1h-1zM615,868h1v1h-1zM650,868h1v1h-1zM685,868h1v1h-1zM720,868h1v1h-1zM755,868h1v1h-1zM790,868h1v1h-1zM825,868h1v1h-1zM860,868h1v1h-1zM894,868h1v1h-1zM929,868h1v1h-1zM964,868h1v1h-1zM999,868h1v1h-1zM1034,868h1v1h-1zM1069,868h1v1h-1zM1104,868h1v1h-1zM1139,868h1v1h-1zM1174,868h1v1h-1zM1209,868h1v1h-1zM1244,868h1v1h-1zM1279,868h1v1h-1zM1314,868h1v1h-1zM1349,868h1v1h-1zM1384,868h1v1h-1zM1419,868h1v1h-1zM1454,868h1v1h-1zM1489,868h1v1h-1zM1524,868h1v1h-1zM1559,868h1v1h-1zM1594,868h1v1h-1zM1629,868h1v1h-1zM1664,868h1v1h-1zM1699,868h1v1h-1zM1734,868h1v1h-1zM20,892h1v1h-1zM55,892h1v1h-1zM90,892h1v1h-1zM125,892h1v1h-1zM160,892h1v1h-1zM195,892h1v1h-1zM230,892h1v1h-1zM265,892h1v1h-1zM300,892h1v1h-1zM335,892h1v1h-1zM370,892h1v1h-1zM405,892h1v1h-1zM440,892h1v1h-1zM475,892h1v1h-1zM510,892h1v1h-1zM545,892h1v1h-1zM580,892h1v1h-1zM615,892h1v1h-1zM650,892h1v1h-1zM685,892h1v1h-1zM720,892h1v1h-1zM755,892h1v1h-1zM790,892h1v1h-1zM825,892h1v1h-1zM860,892h1v1h-1zM894,892h1v1h-1zM929,892h1v1h-1zM964,892h1v1h-1zM999,892h1v1h-1zM1034,892h1v1h-1zM1069,892h1v1h-1zM1104,892h1v1h-1zM1139,892h1v1h-1zM1174,892h1v1h-1zM1209,892h1v1h-1zM1244,892h1v1h-1zM1279,892h1v1h-1zM1314,892h1v1h-1zM1349,892h1v1h-1zM1384,892h1v1h-1zM1419,892h1v1h-1zM1454,892h1v1h-1zM1489,892h1v1h-1zM1524,892h1v1h-1zM1559,892h1v1h-1zM1594,892h1v1h-1zM1629,892h1v1h-1zM1664,892h1v1h-1zM1699,892h1v1h-1zM1734,892h1v1h-1zM20,915h1v1h-1zM55,915h1v1h-1zM90,915h1v1h-1zM125,915h1v1h-1zM160,915h1v1h-1zM195,915h1v1h-1zM230,915h1v1h-1zM265,915h1v1h-1zM300,915h1v1h-1zM335,915h1v1h-1zM370,915h1v1h-1zM405,915h1v1h-1zM440,915h1v1h-1zM475,915h1v1h-1zM510,915h1v1h-1zM545,915h1v1h-1zM580,915h1v1h-1zM615,915h1v1h-1zM650,915h1v1h-1zM685,915h1v1h-1zM720,915h1v1h-1zM755,915h1v1h-1zM790,915h1v1h-1zM825,915h1v1h-1zM860,915h1v1h-1zM894,915h1v1h-1zM929,915h1v1h-1zM964,915h1v1h-1zM999,915h1v1h-1zM1034,915h1v1h-1zM1069,915h1v1h-1zM1104,915h1v1h-1zM1139,915h1v1h-1zM1174,915h1v1h-1zM1209,915h1v1h-1zM1244,915h1v1h-1zM1279,915h1v1h-1zM1314,915h1v1h-1zM1349,915h1v1h-1zM1384,915h1v1h-1zM1419,915h1v1h-1zM1454,915h1v1h-1zM1489,915h1v1h-1zM1524,915h1v1h-1zM1559,915h1v1h-1zM1594,915h1v1h-1zM1629,915h1v1h-1zM1664,915h1v1h-1zM1699,915h1v1h-1zM1734,915h1v1h-1zM20,938h1v1h-1zM55,938h1v1h-1zM90,938h1v1h-1zM125,938h1v1h-1zM160,938h1v1h-1zM195,938h1v1h-1zM230,938h1v1h-1zM265,938h1v1h-1zM300,938h1v1h-1zM335,938h1v1h-1zM370,938h1v1h-1zM405,938h1v1h-1zM440,938h1v1h-1zM475,938h1v1h-1zM510,938h1v1h-1zM545,938h1v1h-1zM580,938h1v1h-1zM615,938h1v1h-1zM650,938h1v1h-1zM685,938h1v1h-1zM720,938h1v1h-1zM755,938h1v1h-1zM790,938h1v1h-1zM825,938h1v1h-1zM860,938h1v1h-1zM894,938h1v1h-1zM929,938h1v1h-1zM964,938h1v1h-1zM999,938h1v1h-1zM1034,938h1v1h-1zM1069,938h1v1h-1zM1104,938h1v1h-1zM1139,938h1v1h-1zM1174,938h1v1h-1zM1209,938h1v1h-1zM1244,938h1v1h-1zM1279,938h1v1h-1zM1314,938h1v1h-1zM1349,938h1v1h-1zM1384,938h1v1h-1zM1419,938h1v1h-1zM1454,938h1v1h-1zM1489,938h1v1h-1zM1524,938h1v1h-1zM1559,938h1v1h-1zM1594,938h1v1h-1zM1629,938h1v1h-1zM1664,938h1v1h-1zM1699,938h1v1h-1zM1734,938h1v1h-1zM20,985h1v1h-1zM55,985h1v1h-1zM90,985h1v1h-1zM125,985h1v1h-1zM160,985h1v1h-1zM195,985h1v1h-1zM230,985h1v1h-1zM265,985h1v1h-1zM300,985h1v1h-1zM335,985h1v1h-1zM370,985h1v1h-1zM405,985h1v1h-1zM440,985h1v1h-1zM475,985h1v1h-1zM510,985h1v1h-1zM545,985h1v1h-1zM580,985h1v1h-1zM615,985h1v1h-1zM650,985h1v1h-1zM685,985h1v1h-1zM720,985h1v1h-1zM755,985h1v1h-1zM790,985h1v1h-1zM825,985h1v1h-1zM860,985h1v1h-1zM894,985h1v1h-1zM929,985h1v1h-1zM964,985h1v1h-1zM999,985h1v1h-1zM1034,985h1v1h-1zM1069,985h1v1h-1zM1104,985h1v1h-1zM1139,985h1v1h-1zM1174,985h1v1h-1zM1209,985h1v1h-1zM1244,985h1v1h-1zM1279,985h1v1h-1zM1314,985h1v1h-1zM1349,985h1v1h-1zM1384,985h1v1h-1zM1419,985h1v1h-1zM1454,985h1v1h-1zM1489,985h1v1h-1zM1524,985h1v1h-1zM1559,985h1v1h-1zM1594,985h1v1h-1zM1629,985h1v1h-1zM1664,985h1v1h-1zM1699,985h1v1h-1zM1734,985h1v1h-1zM20,58h1v1h-1zM55,58h1v1h-1zM90,58h1v1h-1zM125,58h1v1h-1zM160,58h1v1h-1zM195,58h1v1h-1zM230,58h1v1h-1zM265,58h1v1h-1zM300,58h1v1h-1zM335,58h1v1h-1zM370,58h1v1h-1zM405,58h1v1h-1zM440,58h1v1h-1zM475,58h1v1h-1zM510,58h1v1h-1zM545,58h1v1h-1zM580,58h1v1h-1zM615,58h1v1h-1zM650,58h1v1h-1zM685,58h1v1h-1zM720,58h1v1h-1zM755,58h1v1h-1zM790,58h1v1h-1zM825,58h1v1h-1zM860,58h1v1h-1zM894,58h1v1h-1zM929,58h1v1h-1zM964,58h1v1h-1zM999,58h1v1h-1zM1034,58h1v1h-1zM1069,58h1v1h-1zM1104,58h1v1h-1zM1139,58h1v1h-1zM1174,58h1v1h-1zM1209,58h1v1h-1zM1244,58h1v1h-1zM1279,58h1v1h-1zM1314,58h1v1h-1zM1349,58h1v1h-1zM1384,58h1v1h-1zM1419,58h1v1h-1zM1454,58h1v1h-1zM1489,58h1v1h-1zM1524,58h1v1h-1zM1559,58h1v1h-1zM1594,58h1v1h-1zM1629,58h1v1h-1zM1664,58h1v1h-1zM1699,58h1v1h-1zM1734,58h1v1h-1zM20,292h1v1h-1zM55,292h1v1h-1zM90,292h1v1h-1zM125,292h1v1h-1zM160,292h1v1h-1zM195,292h1v1h-1zM230,292h1v1h-1zM265,292h1v1h-1zM300,292h1v1h-1zM335,292h1v1h-1zM370,292h1v1h-1zM405,292h1v1h-1zM440,292h1v1h-1zM475,292h1v1h-1zM510,292h1v1h-1zM545,292h1v1h-1zM580,292h1v1h-1zM615,292h1v1h-1zM650,292h1v1h-1zM685,292h1v1h-1zM720,292h1v1h-1zM755,292h1v1h-1zM790,292h1v1h-1zM825,292h1v1h-1zM860,292h1v1h-1zM894,292h1v1h-1zM929,292h1v1h-1zM964,292h1v1h-1zM999,292h1v1h-1zM1034,292h1v1h-1zM1069,292h1v1h-1zM1104,292h1v1h-1zM1139,292h1v1h-1zM1174,292h1v1h-1zM1209,292h1v1h-1zM1244,292h1v1h-1zM1279,292h1v1h-1zM1314,292h1v1h-1zM1349,292h1v1h-1zM1384,292h1v1h-1zM1419,292h1v1h-1zM1454,292h1v1h-1zM1489,292h1v1h-1zM1524,292h1v1h-1zM1559,292h1v1h-1zM1594,292h1v1h-1zM1629,292h1v1h-1zM1664,292h1v1h-1zM1699,292h1v1h-1zM1734,292h1v1h-1zM20,526h1v1h-1zM55,526h1v1h-1zM90,526h1v1h-1zM125,526h1v1h-1zM160,526h1v1h-1zM195,526h1v1h-1zM230,526h1v1h-1zM265,526h1v1h-1zM300,526h1v1h-1zM335,526h1v1h-1zM370,526h1v1h-1zM405,526h1v1h-1zM440,526h1v1h-1zM475,526h1v1h-1zM510,526h1v1h-1zM545,526h1v1h-1zM580,526h1v1h-1zM615,526h1v1h-1zM650,526h1v1h-1zM685,526h1v1h-1zM720,526h1v1h-1zM755,526h1v1h-1zM790,526h1v1h-1zM825,526h1v1h-1zM860,526h1v1h-1zM894,526h1v1h-1zM929,526h1v1h-1zM964,526h1v1h-1zM999,526h1v1h-1zM1034,526h1v1h-1zM1069,526h1v1h-1zM1104,526h1v1h-1zM1139,526h1v1h-1zM1174,526h1v1h-1zM1209,526h1v1h-1zM1244,526h1v1h-1zM1279,526h1v1h-1zM1314,526h1v1h-1zM1349,526h1v1h-1zM1384,526h1v1h-1zM1419,526h1v1h-1zM1454,526h1v1h-1zM1489,526h1v1h-1zM1524,526h1v1h-1zM1559,526h1v1h-1zM1594,526h1v1h-1zM1629,526h1v1h-1zM1664,526h1v1h-1zM1699,526h1v1h-1zM1734,526h1v1h-1zM20,760h1v1h-1zM55,760h1v1h-1zM90,760h1v1h-1zM125,760h1v1h-1zM160,760h1v1h-1zM195,760h1v1h-1zM230,760h1v1h-1zM265,760h1v1h-1zM300,760h1v1h-1zM335,760h1v1h-1zM370,760h1v1h-1zM405,760h1v1h-1zM440,760h1v1h-1zM475,760h1v1h-1zM510,760h1v1h-1zM545,760h1v1h-1zM580,760h1v1h-1zM615,760h1v1h-1zM650,760h1v1h-1zM685,760h1v1h-1zM720,760h1v1h-1zM755,760h1v1h-1zM790,760h1v1h-1zM825,760h1v1h-1zM860,760h1v1h-1zM894,760h1v1h-1zM929,760h1v1h-1zM964,760h1v1h-1zM999,760h1v1h-1zM1034,760h1v1h-1zM1069,760h1v1h-1zM1104,760h1v1h-1zM1139,760h1v1h-1zM1174,760h1v1h-1zM1209,760h1v1h-1zM1244,760h1v1h-1zM1279,760h1v1h-1zM1314,760h1v1h-1zM1349,760h1v1h-1zM1384,760h1v1h-1zM1419,760h1v1h-1zM1454,760h1v1h-1zM1489,760h1v1h-1zM1524,760h1v1h-1zM1559,760h1v1h-1zM1594,760h1v1h-1zM1629,760h1v1h-1zM1664,760h1v1h-1zM1699,760h1v1h-1zM1734,760h1v1h-1z" fill="#b4b4b4"/>
<path d="M230,62h1v1h-1zM230,67h1v1h-1zM230,71h1v1h-1zM230,76h1v1h-1zM230,81h1v1h-1zM230,85h1v1h-1zM230,90h1v1h-1zM230,95h1v1h-1zM230,99h1v1h-1zM230,104h1v1h-1zM230,108h1v1h-1zM230,113h1v1h-1zM230,118h1v1h-1zM230,122h1v1h-1zM230,127h1v1h-1zM230,132h1v1h-1zM230,136h1v1h-1zM230,141h1v1h-1zM230,146h1v1h-1zM230,150h1v1h-1zM230,155h1v1h-1zM230,160h1v1h-1zM230,164h1v1h-1zM230,169h1v1h-1zM230,174h1v1h-1zM230,178h1v1h-1zM230,183h1v1h-1zM230,188h1v1h-1zM230,192h1v1h-1zM230,197h1v1h-1zM230,202h1v1h-1zM230,206h1v1h-1zM230,211h1v1h-1zM230,216h1v1h-1zM230,220h1v1h-1zM230,225h1v1h-1zM230,230h1v1h-1zM230,234h1v1h-1zM230,239h1v1h-1zM230,244h1v1h-1zM230,248h1v1h-1zM230,253h1v1h-1zM230,258h1v1h-1zM230,262h1v1h-1zM230,267h1v1h-1zM230,272h1v1h-1zM230,276h1v1h-1zM230,281h1v1h-1zM230,285h1v1h-1zM230,296h1v1h-1zM230,301h1v1h-1zM230,305h1v1h-1zM230,310h1v1h-1zM230,315h1v1h-1zM230,319h1v1h-1zM230,324h1v1h-1zM230,329h1v1h-1zM230,333h1v1h-1zM230,338h1v1h-1zM230,342h1v1h-1zM230,347h1v1h-1zM230,352h1v1h-1zM230,356h1v1h-1zM230,361h1v1h-1zM230,366h1v1h-1zM230,370h1v1h-1zM230,375h1v1h-1zM230,380h1v1h-1zM230,384h1v1h-1zM230,389h1v1h-1zM230,394h1v1h-1zM230,398h1v1h-1zM230,403h1v1h-1zM230,408h1v1h-1zM230,412h1v1h-1zM230,417h1v1h-1zM230,422h1v1h-1zM230,426h1v1h-1zM230,431h1v1h-1zM230,436h1v1h-1zM230,440h1v1h-1zM230,445h1v1h-1zM230,450h1v1h-1zM230,454h1v1h-1zM230,459h1v1h-1zM230,464h1v1h-1zM230,468h1v1h-1zM230,473h1v1h-1zM230,478h1v1h-1zM230,482h1v1h-1zM230,487h1v1h-1zM230,492h1v1h-1zM230,496h1v1h-1zM230,501h1v1h-1zM230,506h1v1h-1zM230,510h1v1h-1zM230,515h1v1h-1zM230,519h1v1h-1zM230,530h1v1h-1zM230,535h1v1h-1zM230,539h1v1h-1zM230,544h1v1h-1zM230,549h1v1h-1zM230,553h1v1h-1zM230,558h1v1h-1zM230,563h1v1h-1zM230,567h1v1h-1zM230,572h1v1h-1zM230,576h1v1h-1zM230,581h1v1h-1zM230,586h1v1h-1zM230,590h1v1h-1zM230,595h1v1h-1zM230,600h1v1h-1zM230,604h1v1h-1zM230,609h1v1h-1zM230,614h1v1h-1zM230,618h1v1h-1zM230,623h1v1h-1zM230,628h1v1h-1zM230,632h1v1h-1zM230,637h1v1h-1zM230,642h1v1h-1zM230,646h1v1h-1zM230,651h1v1h-1zM230,656h1v1h-1zM230,660h1v1h-1zM230,665h1v1h-1zM230,670h1v1h-1zM230,674h1v1h-1zM230,679h1v1h-1zM230,684h1v1h-1zM230,688h1v1h-1zM230,693h1v1h-1zM230,698h1v1h-1zM230,702h1v1h-1zM230,707h1v1h-1zM230,712h1v1h-1zM230,716h1v1h-1zM230,721h1v1h-1zM230,726h1v1h-1zM230,730h1v1h-1zM230,735h1v1h-1zM230,740h1v1h-1zM230,744h1v1h-1zM230,749h1v1h-1zM230,753h1v1h-1zM230,761h1v1h-1zM230,766h1v1h-1zM230,771h1v1h-1zM230,775h1v1h-1zM230,780h1v1h-1zM230,785h1v1h-1zM230,789h1v1h-1zM230,794h1v1h-1zM230,799h1v1h-1zM230,803h1v1h-1zM230,808h1v1h-1zM230,813h1v1h-1zM230,817h1v1h-1zM230,822h1v1h-1zM230,827h1v1h-1zM230,831h1v1h-1zM230,836h1v1h-1zM230,841h1v1h-1zM230,845h1v1h-1zM230,850h1v1h-1zM230,854h1v1h-1zM230,859h1v1h-1zM230,864h1v1h-1zM230,868h1v1h-1zM230,873h1v1h-1zM230,878h1v1h-1zM230,882h1v1h-1zM230,887h1v1h-1zM230,892h1v1h-1zM230,896h1v1h-1zM230,901h1v1h-1zM230,906h1v1h-1zM230,910h1v1h-1zM230,915h1v1h-1zM230,920h1v1h-1zM230,924h1v1h-1zM230,929h1v1h-1zM230,934h1v1h-1zM230,938h1v1h-1zM230,943h1v1h-1zM230,948h1v1h-1zM230,952h1v1h-1zM230,957h1v1h-1zM230,962h1v1h-1zM230,966h1v1h-1zM230,971h1v1h-1zM230,976h1v1h-1zM230,980h1v1h-1zM230,985h1v1h-1zM230,990h1v1h-1zM405,62h1v1h-1zM405,67h1v1h-1zM405,71h1v1h-1zM405,76h1v1h-1zM405,81h1v1h-1zM405,85h1v1h-1zM405,90h1v1h-1zM405,95h1v1h-1zM405,99h1v1h-1zM405,104h1v1h-1zM405,108h1v1h-1zM405,113h1v1h-1zM405,118h1v1h-1zM405,122h1v1h-1zM405,127h1v1h-1zM405,132h1v1h-1zM405,136h1v1h-1zM405,141h1v1h-1zM405,146h1v1h-1zM405,150h1v1h-1zM405,155h1v1h-1zM405,160h1v1h-1zM405,164h1v1h-1zM405,169h1v1h-1zM405,174h1v1h-1zM405,178h1v1h-1zM405,183h1v1h-1zM405,188h1v1h-1zM405,192h1v1h-1zM405,197h1v1h-1zM405,202h1v1h-1zM405,206h1v1h-1zM405,211h1v1h-1zM405,216h1v1h-1zM405,220h1v1h-1zM405,225h1v1h-1zM405,230h1v1h-1zM405,234h1v1h-1zM405,239h1v1h-1zM405,244h1v1h-1zM405,248h1v1h-1zM405,253h1v1h-1zM405,258h1v1h-1zM405,262h1v1h-1zM405,267h1v1h-1zM405,272h1v1h-1zM405,276h1v1h-1zM405,281h1v1h-1zM405,285h1v1h-1zM405,296h1v1h-1zM405,301h1v1h-1zM405,305h1v1h-1zM405,310h1v1h-1zM405,315h1v1h-1zM405,319h1v1h-1zM405,324h1v1h-1zM405,329h1v1h-1zM405,333h1v1h-1zM405,338h1v1h-1zM405,342h1v1h-1zM405,347h1v1h-1zM405,352h1v1h-1zM405,356h1v1h-1zM405,361h1v1h-1zM405,366h1v1h-1zM405,370h1v1h-1zM405,375h1v1h-1zM405,380h1v1h-1zM405,384h1v1h-1zM405,389h1v1h-1zM405,394h1v1h-1zM405,398h1v1h-1zM405,403h1v1h-1zM405,408h1v1h-1zM405,412h1v1h-1zM405,417h1v1h-1zM405,422h1v1h-1zM405,426h1v1h-1zM405,431h1v1h-1zM405,436h1v1h-1zM405,440h1v1h-1zM405,445h1v1h-1zM405,450h1v1h-1zM405,454h1v1h-1zM405,459h1v1h-1zM405,464h1v1h-1zM405,468h1v1h-1zM405,473h1v1h-1zM405,478h1v1h-1zM405,482h1v1h-1zM405,487h1v1h-1zM405,492h1v1h-1zM405,496h1v1h-1zM405,501h1v1h-1zM405,506h1v1h-1zM405,510h1v1h-1zM405,515h1v1h-1zM405,519h1v1h-1zM405,530h1v1h-1zM405,535h1v1h-1zM405,539h1v1h-1zM405,544h1v1h-1zM405,549h1v1h-1zM405,553h1v1h-1zM405,558h1v1h-1zM405,563h1v1h-1zM405,567h1v1h-1zM405,572h1v1h-1zM405,576h1v1h-1zM405,581h1v1h-1zM405,586h1v1h-1zM405,590h1v1h-1zM405,595h1v1h-1zM405,600h1v1h-1zM405,604h1v1h-1zM405,609h1v1h-1zM405,614h1v1h-1zM405,618h1v1h-1zM405,623h1v1h-1zM405,628h1v1h-1zM405,632h1v1h-1zM405,637h1v1h-1zM405,642h1v1h-1zM405,646h1v1h-1zM405,651h1v1h-1zM405,656h1v1h-1zM405,660h1v1h-1zM405,665h1v1h-1zM405,670h1v1h-1zM405,674h1v1h-1zM405,679h1v1h-1zM405,684h1v1h-1zM405,688h1v1h-1zM405,693h1v1h-1zM405,698h1v1h-1zM405,702h1v1h-1zM405,707h1v1h-1zM405,712h1v1h-1zM405,716h1v1h-1zM405,721h1v1h-1zM405,726h1v1h-1zM405,730h1v1h-1zM405,735h1v1h-1zM405,740h1v1h-1zM405,744h1v1h-1zM405,749h1v1h-1zM405,753h1v1h-1zM405,761h1v1h-1zM405,766h1v1h-1zM405,771h1v1h-1zM405,775h1v1h-1zM405,780h1v1h-1zM405,785h1v1h-1zM405,789h1v1h-1zM405,794h1v1h-1zM405,799h1v1h-1zM405,803h1v1h-1zM405,808h1v1h-1zM405,813h1v1h-1zM405,817h1v1h-1zM405,822h1v1h-1zM405,827h1v1h-1zM405,831h1v1h-1zM405,836h1v1h-1zM405,841h1v1h-1zM405,845h1v1h-1zM405,850h1v1h-1zM405,854h1v1h-1zM405,859h1v1h-1zM405,864h1v1h-1zM405,868h1v1h-1zM405,873h1v1h-1zM405,878h1v1h-1zM405,882h1v1h-1zM405,887h1v1h-1zM405,892h1v1h-1zM405,896h1v1h-1zM405,901h1v1h-1zM405,906h1v1h-1zM405,910h1v1h-1zM405,915h1v1h-1zM405,920h1v1h-1zM405,924h1v1h-1zM405,929h1v1h-1zM405,934h1v1h-1zM405,938h1v1h-1zM405,943h1v1h-1zM405,948h1v1h-1zM405,952h1v1h-1zM405,957h1v1h-1zM405,962h1v1h-1zM405,966h1v1h-1zM405,971h1v1h-1zM405,976h1v1h-1zM405,980h1v1h-1zM405,985h1v1h-1zM405,990h1v1h-1zM580,62h1v1h-1zM580,67h1v1h-1zM580,71h1v1h-1zM580,76h1v1h-1zM580,81h1v1h-1zM580,85h1v1h-1zM580,90h1v1h-1zM580,95h1v1h-1zM580,99h1v1h-1zM580,104h1v1h-1zM580,108h1v1h-1zM580,113h1v1h-1zM580,118h1v1h-1zM580,122h1v1h-1zM580,127h1v1h-1zM580,132h1v1h-1zM580,136h1v1h-1zM580,141h1v1h-1zM580,146h1v1h-1zM580,150h1v1h-1zM580,155h1v1h-1zM580,160h1v1h-1zM580,164h1v1h-1zM580,169h1v1h-1zM580,174h1v1h-1zM580,178h1v1h-1zM580,183h1v1h-1zM580,188h1v1h-1zM580,192h1v1h-1zM580,197h1v1h-1zM580,202h1v1h-1zM580,206h1v1h-1zM580,211h1v1h-1zM580,216h1v1h-1zM580,220h1v1h-1zM580,225h1v1h-1zM580,230h1v1h-1zM580,234h1v1h-1zM580,239h1v1h-1zM580,244h1v1h-1zM580,248h1v1h-1zM580,253h1v1h-1zM580,258h1v1h-1zM580,262h1v1h-1zM580,267h1v1h-1zM580,272h1v1h-1zM580,276h1v1h-1zM580,281h1v1h-1zM580,285h1v1h-1zM580,296h1v1h-1zM580,301h1v1h-1zM580,305h1v1h-1zM580,310h1v1h-1zM580,315h1v1h-1zM580,319h1v1h-1zM580,324h1v1h-1zM580,329h1v1h-1zM580,333h1v1h-1zM580,338h1v1h-1zM580,342h1v1h-1zM580,347h1v1h-1zM580,352h1v1h-1zM580,356h1v1h-1zM580,361h1v1h-1zM580,366h1v1h-1zM580,370h1v1h-1zM580,375h1v1h-1zM580,380h1v1h-1zM580,384h1v1h-1zM580,389h1v1h-1zM580,394h1v1h-1zM580,398h1v1h-1zM580,403h1v1h-1zM580,408h1v1h-1zM580,412h1v1h-1zM580,417h1v1h-1zM580,422h1v1h-1zM580,426h1v1h-1zM580,431h1v1h-1zM580,436h1v1h-1zM580,440h1v1h-1zM580,445h1v1h-1zM580,450h1v1h-1zM580,454h1v1h-1zM580,459h1v1h-1zM580,464h1v1h-1zM580,468h1v1h-1zM580,473h1v1h-1zM580,478h1v1h-1zM580,482h1v1h-1zM580,487h1v1h-1zM580,492h1v1h-1zM580,496h1v1h-1zM580,501h1v1h-1zM580,506h1v1h-1zM580,510h1v1h-1zM580,515h1v1h-1zM580,519h1v1h-1zM580,530h1v1h-1zM580,535h1v1h-1zM580,539h1v1h-1zM580,544h1v1h-1zM580,549h1v1h-1zM580,553h1v1h-1zM580,558h1v1h-1zM580,563h1v1h-1zM580,567h1v1h-1zM580,572h1v1h-1zM580,576h1v1h-1zM580,581h1v1h-1zM580,586h1v1h-1zM580,590h1v1h-1zM580,595h1v1h-1zM580,600h1v1h-1zM580,604h1v1h-1zM580,609h1v1h-1zM580,614h1v1h-1zM580,618h1v1h-1zM580,623h1v1h-1zM580,628h1v1h-1zM580,632h1v1h-1zM580,637h1v1h-1zM580,642h1v1h-1zM580,646h1v1h-1zM580,651h1v1h-1zM580,656h1v1h-1zM580,660h1v1h-1zM580,665h1v1h-1zM580,670h1v1h-1zM580,674h1v1h-1zM580,679h1v1h-1zM580,684h1v1h-1zM580,688h1v1h-1zM580,693h1v1h-1zM580,698h1v1h-1zM580,702h1v1h-1zM580,707h1v1h-1zM580,712h1v1h-1zM580,716h1v1h-1zM580,721h1v1h-1zM580,726h1v1h-1zM580,730h1v1h-1zM580,735h1v1h-1zM580,740h1v1h-1zM580,744h1v1h-1zM580,749h1v1h-1zM580,753h1v1h-1zM580,761h1v1h-1zM580,766h1v1h-1zM580,771h1v1h-1zM580,775h1v1h-1zM580,780h1v1h-1zM580,785h1v1h-1zM580,789h1v1h-1zM580,794h1v1h-1zM580,799h1v1h-1zM580,803h1v1h-1zM580,808h1v1h-1zM580,813h1v1h-1zM580,817h1v1h-1zM580,822h1v1h-1zM580,827h1v1h-1zM580,831h1v1h-1zM580,836h1v1h-1zM580,841h1v1h-1zM580,845h1v1h-1zM580,850h1v1h-1zM580,854h1v1h-1zM580,859h1v1h-1zM580,864h1v1h-1zM580,868h1v1h-1zM580,873h1v1h-1zM580,878h1v1h-1zM580,882h1v1h-1zM580,887h1v1h-1zM580,892h1v1h-1zM580,896h1v1h-1zM580,901h1v1h-1zM580,906h1v1h-1zM580,910h1v1h-1zM580,915h1v1h-1zM580,920h1v1h-1zM580,924h1v1h-1zM580,929h1v1h-1zM580,934h1v1h-1zM580,938h1v1h-1zM580,943h1v1h-1zM580,948h1v1h-1zM580,952h1v1h-1zM580,957h1v1h-1zM580,962h1v1h-1zM580,966h1v1h-1zM580,971h1v1h-1zM580,976h1v1h-1zM580,980h1v1h-1zM580,985h1v1h-1zM580,990h1v1h-1zM755,62h1v1h-1zM755,67h1v1h-1zM755,71h1v1h-1zM755,76h1v1h-1zM755,81h1v1h-1zM755,85h1v1h-1zM755,90h1v1h-1zM755,95h1v1h-1zM755,99h1v1h-1zM755,104h1v1h-1zM755,108h1v1h-1zM755,113h1v1h-1zM755,118h1v1h-1zM755,122h1v1h-1zM755,127h1v1h-1zM755,132h1v1h-1zM755,136h1v1h-1zM755,141h1v1h-1zM755,146h1v1h-1zM755,150h1v1h-1zM755,155h1v1h-1zM755,160h1v1h-1zM755,164h1v1h-1zM755,169h1v1h-1zM755,174h1v1h-1zM755,178h1v1h-1zM755,183h1v1h-1zM755,188h1v1h-1zM755,192h1v1h-1zM755,197h1v1h-1zM755,202h1v1h-1zM755,206h1v1h-1zM755,211h1v1h-1zM755,216h1v1h-1zM755,220h1v1h-1zM755,225h1v1h-1zM755,230h1v1h-1zM755,234h1v1h-1zM755,239h1v1h-1zM755,244h1v1h-1zM755,248h1v1h-1zM755,253h1v1h-1zM755,258h1v1h-1zM755,262h1v1h-1zM755,267h1v1h-1zM755,272h1v1h-1zM755,276h1v1h-1zM755,281h1v1h-1zM755,285h1v1h-1zM755,296h1v1h-1zM755,301h1v1h-1zM755,305h1v1h-1zM755,310h1v1h-1zM755,315h1v1h-1zM755,319h1v1h-1zM755,324h1v1h-1zM755,329h1v1h-1zM755,333h1v1h-1zM755,338h1v1h-1zM755,342h1v1h-1zM755,347h1v1h-1zM755,352h1v1h-1zM755,356h1v1h-1zM755,361h1v1h-1zM755,366h1v1h-1zM755,370h1v1h-1zM755,375h1v1h-1zM755,380h1v1h-1zM755,384h1v1h-1zM755,389h1v1h-1zM755,394h1v1h-1zM755,398h1v1h-1zM755,403h1v1h-1zM755,408h1v1h-1zM755,412h1v1h-1zM755,417h1v1h-1zM755,422h1v1h-1zM755,426h1v1h-1zM755,431h1v1h-1zM755,436h1v1h-1zM755,440h1v1h-1zM755,445h1v1h-1zM755,450h1v1h-1zM755,454h1v1h-1zM755,459h1v1h-1zM755,464h1v1h-1zM755,468h1v1h-1zM755,473h1v1h-1zM755,478h1v1h-1zM755,482h1v1h-1zM755,487h1v1h-1zM755,492h1v1h-1zM755,496h1v1h-1zM755,501h1v1h-1zM755,506h1v1h-1zM755,510h1v1h-1zM755,515h1v1h-1zM755,519h1v1h-1zM755,530h1v1h-1zM755,535h1v1h-1zM755,539h1v1h-1zM755,544h1v1h-1zM755,549h1v1h-1zM755,553h1v1h-1zM755,558h1v1h-1zM755,563h1v1h-1zM755,567h1v1h-1zM755,572h1v1h-1zM755,576h1v1h-1zM755,581h1v1h-1zM755,586h1v1h-1zM755,590h1v1h-1zM755,595h1v1h-1zM755,600h1v1h-1zM755,604h1v1h-1zM755,609h1v1h-1zM755,614h1v1h-1zM755,618h1v1h-1zM755,623h1v1h-1zM755,628h1v1h-1zM755,632h1v1h-1zM755,637h1v1h-1zM755,642h1v1h-1zM755,646h1v1h-1zM755,651h1v1h-1zM755,656h1v1h-1zM755,660h1v1h-1zM755,665h1v1h-1zM755,670h1v1h-1zM755,674h1v1h-1zM755,679h1v1h-1zM755,684h1v1h-1zM755,688h1v1h-1zM755,693h1v1h-1zM755,698h1v1h-1zM755,702h1v1h-1zM755,707h1v1h-1zM755,712h1v1h-1zM755,716h1v1h-1zM755,721h1v1h-1zM755,726h1v1h-1zM755,730h1v1h-1zM755,735h1v1h-1zM755,740h1v1h-1zM755,744h1v1h-1zM755,749h1v1h-1zM755,753h1v1h-1zM755,761h1v1h-1zM755,766h1v1h-1zM755,771h1v1h-1zM755,775h1v1h-1zM755,780h1v1h-1zM755,785h1v1h-1zM755,789h1v1h-1zM755,794h1v1h-1zM755,799h1v1h-1zM755,803h1v1h-1zM755,808h1v1h-1zM755,813h1v1h-1zM755,817h1v1h-1zM755,822h1v1h-1zM755,827h1v1h-1zM755,831h1v1h-1zM755,836h1v1h-1zM755,841h1v1h-1zM755,845h1v1h-1zM755,850h1v1h-1zM755,854h1v1h-1zM755,859h1v1h-1zM755,864h1v1h-1zM755,868h1v1h-1zM755,873h1v1h-1zM755,878h1v1h-1zM755,882h1v1h-1zM755,887h1v1h-1zM755,892h1v1h-1zM755,896h1v1h-1zM755,901h1v1h-1zM755,906h1v1h-1zM755,910h1v1h-1zM755,915h1v1h-1zM755,920h1v1h-1zM755,924h1v1h-1zM755,929h1v1h-1zM755,934h1v1h-1zM755,938h1v1h-1zM755,943h1v1h-1zM755,948h1v1h-1zM755,952h1v1h-1zM755,957h1v1h-1zM755,962h1v1h-1zM755,966h1v1h-1zM755,971h1v1h-1zM755,976h1v1h-1zM755,980h1v1h-1zM755,985h1v1h-1zM755,990h1v1h-1zM929,62h1v1h-1zM929,67h1v1h-1zM929,71h1v1h-1zM929,76h1v1h-1zM929,81h1v1h-1zM929,85h1v1h-1zM929,90h1v1h-1zM929,95h1v1h-1zM929,99h1v1h-1zM929,104h1v1h-1zM929,108h1v1h-1zM929,113h1v1h-1zM929,118h1v1h-1zM929,122h1v1h-1zM929,127h1v1h-1zM929,132h1v1h-1zM929,136h1v1h-1zM929,141h1v1h-1zM929,146h1v1h-1zM929,150h1v1h-1zM929,155h1v1h-1zM929,160h1v1h-1zM929,164h1v1h-1zM929,169h1v1h-1zM929,174h1v1h-1zM929,178h1v1h-1zM929,183h1v1h-1zM929,188h1v1h-1zM929,192h1v1h-1zM929,197h1v1h-1zM929,202h1v1h-1zM929,206h1v1h-1zM929,211h1v1h-1zM929,216h1v1h-1zM929,220h1v1h-1zM929,225h1v1h-1zM929,230h1v1h-1zM929,234h1v1h-1zM929,239h1v1h-1zM929,244h1v1h-1zM929,248h1v1h-1zM929,253h1v1h-1zM929,258h1v1h-1zM929,262h1v1h-1zM929,267h1v1h-1zM929,272h1v1h-1zM929,276h1v1h-1zM929,281h1v1h-1zM929,285h1v1h-1zM929,296h1v1h-1zM929,301h1v1h-1zM929,305h1v1h-1zM929,310h1v1h-1zM929,315h1v1h-1zM929,319h1v1h-1zM929,324h1v1h-1zM929,329h1v1h-1zM929,333h1v1h-1zM929,338h1v1h-1zM929,342h1v1h-1zM929,347h1v1h-1zM929,352h1v1h-1zM929,356h1v1h-1zM929,361h1v1h-1zM929,366h1v1h-1zM929,370h1v1h-1zM929,375h1v1h-1zM929,380h1v1h-1zM929,384h1v1h-1zM929,389h1v1h-1zM929,394h1v1h-1zM929,398h1v1h-1zM929,403h1v1h-1zM929,408h1v1h-1zM929,412h1v1h-1zM929,417h1v1h-1zM929,422h1v1h-1zM929,426h1v1h-1zM929,431h1v1h-1zM929,436h1v1h-1zM929,440h1v1h-1zM929,445h1v1h-1zM929,450h1v1h-1zM929,454h1v1h-1zM929,459h1v1h-1zM929,464h1v1h-1zM929,468h1v1h-1zM929,473h1v1h-1zM929,478h1v1h-1zM929,482h1v1h-1zM929,487h1v1h-1zM929,492h1v1h-1zM929,496h1v1h-1zM929,501h1v1h-1zM929,506h1v1h-1zM929,510h1v1h-1zM929,515h1v1h-1zM929,519h1v1h-1zM929,530h1v1h-1zM929,535h1v1h-1zM929,539h1v1h-1zM929,544h1v1h-1zM929,549h1v1h-1zM929,553h1v1h-1zM929,558h1v1h-1zM929,563h1v1h-1zM929,567h1v1h-1zM929,572h1v1h-1zM929,576h1v1h-1zM929,581h1v1h-1zM929,586h1v1h-1zM929,590h1v1h-1zM929,595h1v1h-1zM929,600h1v1h-1zM929,604h1v1h-1zM929,609h1v1h-1zM929,614h1v1h-1zM929,618h1v1h-1zM929,623h1v1h-1zM929,628h1v1h-1zM929,632h1v1h-1zM929,637h1v1h-1zM929,642h1v1h-1zM929,646h1v1h-1zM929,651h1v1h-1zM929,656h1v1h-1zM929,660h1v1h-1zM929,665h1v1h-1zM929,670h1v1h-1zM929,674h1v1h-1zM929,679h1v1h-1zM929,684h1v1h-1zM929,688h1v1h-1zM929,693h1v1h-1zM929,698h1v1h-1zM929,702h1v1h-1zM929,707h1v1h-1zM929,712h1v1h-1zM929,716h1v1h-1zM929,721h1v1h-1zM929,726h1v1h-1zM929,730h1v1h-1zM929,735h1v1h-1zM929,740h1v1h-1zM929,744h1v1h-1zM929,749h1v1h-1zM929,753h1v1h-1zM929,761h1v1h-1zM929,766h1v1h-1zM929,771h1v1h-1zM929,775h1v1h-1zM929,780h1v1h-1zM929,785h1v1h-1zM929,789h1v1h-1zM929,794h1v1h-1zM929,799h1v1h-1zM929,803h1v1h-1zM929,808h1v1h-1zM929,813h1v1h-1zM929,817h1v1h-1zM929,822h1v1h-1zM929,827h1v1h-1zM929,831h1v1h-1zM929,836h1v1h-1zM929,841h1v1h-1zM929,845h1v1h-1zM929,850h1v1h-1zM929,854h1v1h-1zM929,859h1v1h-1zM929,864h1v1h-1zM929,868h1v1h-1zM929,873h1v1h-1zM929,878h1v1h-1zM929,882h1v1h-1zM929,887h1v1h-1zM929,892h1v1h-1zM929,896h1v1h-1zM929,901h1v1h-1zM929,906h1v1h-1zM929,910h1v1h-1zM929,915h1v1h-1zM929,920h1v1h-1zM929,924h1v1h-1zM929,929h1v1h-1zM929,934h1v1h-1zM929,938h1v1h-1zM929,943h1v1h-1zM929,948h1v1h-1zM929,952h1v1h-1zM929,957h1v1h-1zM929,962h1v1h-1zM929,966h1v1h-1zM929,971h1v1h-1zM929,976h1v1h-1zM929,980h1v1h-1zM929,985h1v1h-1zM929,990h1v1h-1zM1104,62h1v1h-1zM1104,67h1v1h-1zM1104,71h1v1h-1zM1104,76h1v1h-1zM1104,81h1v1h-1zM1104,85h1v1h-1zM1104,90h1v1h-1zM1104,95h1v1h-1zM1104,99h1v1h-1zM1104,104h1v1h-1zM1104,108h1v1h-1zM1104,113h1v1h-1zM1104,118h1v1h-1zM1104,122h1v1h-1zM1104,127h1v1h-1zM1104,132h1v1h-1zM1104,136h1v1h-1zM1104,141h1v1h-1zM1104,146h1v1h-1zM1104,150h1v1h-1zM1104,155h1v1h-1zM1104,160h1v1h-1zM1104,164h1v1h-1zM1104,169h1v1h-1zM1104,174h1v1h-1zM1104,178h1v1h-1zM1104,183h1v1h-1zM1104,188h1v1h-1zM1104,192h1v1h-1zM1104,197h1v1h-1zM1104,202h1v1h-1zM1104,206h1v1h-1zM1104,211h1v1h-1zM1104,216h1v1h-1zM1104,220h1v1h-1zM1104,225h1v1h-1zM1104,230h1v1h-1zM1104,234h1v1h-1zM1104,239h1v1h-1zM1104,244h1v1h-1zM1104,248h1v1h-1zM1104,253h1v1h-1zM1104,258h1v1h-1zM1104,262h1v1h-1zM1104,267h1v1h-1zM1104,272h1v1h-1zM1104,276h1v1h-1zM1104,281h1v1h-1zM1104,285h1v1h-1zM1104,296h1v1h-1zM1104,301h1v1h-1zM1104,305h1v1h-1zM1104,310h1v1h-1zM1104,315h1v1h-1zM1104,319h1v1h-1zM1104,324h1v1h-1zM1104,329h1v1h-1zM1104,333h1v1h-1zM1104,338h1v1h-1zM1104,342h1v1h-1zM1104,347h1v1h-1zM1104,352h1v1h-1zM1104,356h1v1h-1zM1104,361h1v1h-1zM1104,366h1v1h-1zM1104,370h1v1h-1zM1104,375h1v1h-1zM1104,380h1v1h-1zM1104,384h1v1h-1zM1104,389h1v1h-1zM1104,394h1v1h-1zM1104,398h1v1h-1zM1104,403h1v1h-1zM1104,408h1v1h-1zM1104,412h1v1h-1zM1104,417h1v1h-1zM1104,422h1v1h-1zM1104,426h1v1h-1zM1104,431h1v1h-1zM1104,436h1v1h-1zM1104,440h1v1h-1zM1104,445h1v1h-1zM1104,450h1v1h-1zM1104,454h1v1h-1zM1104,459h1v1h-1zM1104,464h1v1h-1zM1104,468h1v1h-1zM1104,473h1v1h-1zM1104,478h1v1h-1zM1104,482h1v1h-1zM1104,487h1v1h-1zM1104,492h1v1h-1zM1104,496h1v1h-1zM1104,501h1v1h-1zM1104,506h1v1h-1zM1104,510h1v1h-1zM1104,515h1v1h-1zM1104,519h1v1h-1zM1104,530h1v1h-1zM1104,535h1v1h-1zM1104,539h1v1h-1zM1104,544h1v1h-1zM1104,549h1v1h-1zM1104,553h1v1h-1zM1104,558h1v1h-1zM1104,563h1v1h-1zM1104,567h1v1h-1zM1104,572h1v1h-1zM1104,576h1v1h-1zM1104,581h1v1h-1zM1104,586h1v1h-1zM1104,590h1v1h-1zM1104,595h1v1h-1zM1104,600h1v1h-1zM1104,604h1v1h-1zM1104,609h1v1h-1zM1104,614h1v1h-1zM1104,618h1v1h-1zM1104,623h1v1h-1zM1104,628h1v1h-1zM1104,632h1v1h-1zM1104,637h1v1h-1zM1104,642h1v1h-1zM1104,646h1v1h-1zM1104,651h1v1h-1zM1104,656h1v1h-1zM1104,660h1v1h-1zM1104,665h1v1h-1zM1104,670h1v1h-1zM1104,674h1v1h-1zM1104,679h1v1h-1zM1104,684h1v1h-1zM1104,688h1v1h-1zM1104,693h1v1h-1zM1104,698h1v1h-1zM1104,702h1v1h-1zM1104,707h1v1h-1zM1104,712h1v1h-1zM1104,716h1v1h-1zM1104,721h1v1h-1zM1104,726h1v1h-1zM1104,730h1v1h-1zM1104,735h1v1h-1zM1104,740h1v1h-1zM1104,744h1v1h-1zM1104,749h1v1h-1zM1104,753h1v1h-1zM1104,761h1v1h-1zM1104,766h1v1h-1zM1104,771h1v1h-1zM1104,775h1v1h-1zM1104,780h1v1h-1zM1104,785h1v1h-1zM1104,789h1v1h-1zM1104,794h1v1h-1zM1104,799h1v1h-1zM1104,803h1v1h-1zM1104,808h1v1h-1zM1104,813h1v1h-1zM1104,817h1v1h-1zM1104,822h1v1h-1zM1104,827h1v1h-1zM1104,831h1v1h-1zM1104,836h1v1h-1zM1104,841h1v1h-1zM1104,845h1v1h-1zM1104,850h1v1h-1zM1104,854h1v1h-1zM1104,859h1v1h-1zM1104,864h1v1h-1zM1104,868h1v1h-1zM1104,873h1v1h-1zM1104,878h1v1h-1zM1104,882h1v1h-1zM1104,887h1v1h-1zM1104,892h1v1h-1zM1104,896h1v1h-1zM1104,901h1v1h-1zM1104,906h1v1h-1zM1104,910h1v1h-1zM1104,915h1v1h-1zM1104,920h1v1h-1zM1104,924h1v1h-1zM1104,929h1v1h-1zM1104,934h1v1h-1zM1104,938h1v1h-1zM1104,943h1v1h-1zM1104,948h1v1h-1zM1104,952h1v1h-1zM1104,957h1v1h-1zM1104,962h1v1h-1zM1104,966h1v1h-1zM1104,971h1v1h-1zM1104,976h1v1h-1zM1104,980h1v1h-1zM1104,985h1v1h-1zM1104,990h1v1h-1zM1279,62h1v1h-1zM1279,67h1v1h-1zM1279,71h1v1h-1zM1279,76h1v1h-1zM1279,81h1v1h-1zM1279,85h1v1h-1zM1279,90h1v1h-1zM1279,95h1v1h-1zM1279,99h1v1h-1zM1279,104h1v1h-1zM1279,108h1v1h-1zM1279,113h1v1h-1zM1279,118h1v1h-1zM1279,122h1v1h-1zM1279,127h1v1h-1zM1279,132h1v1h-1zM1279,136h1v1h-1zM1279,141h1v1h-1zM1279,146h1v1h-1zM1279,150h1v1h-1zM1279,155h1v1h-1zM1279,160h1v1h-1zM1279,164h1v1h-1zM1279,169h1v1h-1zM1279,174h1v1h-1zM1279,178h1v1h-1zM1279,183h1v1h-1zM1279,188h1v1h-1zM1279,192h1v1h-1zM1279,197h1v1h-1zM1279,202h1v1h-1zM1279,206h1v1h-1zM1279,211h1v1h-1zM1279,216h1v1h-1zM1279,220h1v1h-1zM1279,225h1v1h-1zM1279,230h1v1h-1zM1279,234h1v1h-1zM1279,239h1v1h-1zM1279,244h1v1h-1zM1279,248h1v1h-1zM1279,253h1v1h-1zM1279,258h1v1h-1zM1279,262h1v1h-1zM1279,267h1v1h-1zM1279,272h1v1h-1zM1279,276h1v1h-1zM1279,281h1v1h-1zM1279,285h1v1h-1zM1279,296h1v1h-1zM1279,301h1v1h-1zM1279,305h1v1h-1zM1279,310h1v1h-1zM1279,315h1v1h-1zM1279,319h1v1h-1zM1279,324h1v1h-1zM1279,329h1v1h-1zM1279,333h1v1h-1zM1279,338h1v1h-1zM1279,342h1v1h-1zM1279,347h1v1h-1zM1279,352h1v1h-1zM1279,356h1v1h-1zM1279,361h1v1h-1zM1279,366h1v1h-1zM1279,370h1v1h-1zM1279,375h1v1h-1zM1279,380h1v1h-1zM1279,384h1v1h-1zM1279,389h1v1h-1zM1279,394h1v1h-1zM1279,398h1v1h-1zM1279,403h1v1h-1zM1279,408h1v1h-1zM1279,412h1v1h-1zM1279,417h1v1h-1zM1279,422h1v1h-1zM1279,426h1v1h-1zM1279,431h1v1h-1zM1279,436h1v1h-1zM1279,440h1v1h-1zM1279,445h1v1h-1zM1279,450h1v1h-1zM1279,454h1v1h-1zM1279,459h1v1h-1zM1279,464h1v1h-1zM1279,468h1v1h-1zM1279,473h1v1h-1zM1279,478h1v1h-1zM1279,482h1v1h-1zM1279,487h1v1h-1zM1279,492h1v1h-1zM1279,496h1v1h-1zM1279,501h1v1h-1zM1279,506h1v1h-1zM1279,510h1v1h-1zM1279,515h1v1h-1zM1279,519h1v1h-1zM1279,530h1v1h-1zM1279,535h1v1h-1zM1279,539h1v1h-1zM1279,544h1v1h-1zM1279,549h1v1h-1zM1279,553h1v1h-1zM1279,558h1v1h-1zM1279,563h1v1h-1zM1279,567h1v1h-1zM1279,572h1v1h-1zM1279,576h1v1h-1zM1279,581h1v1h-1zM1279,586h1v1h-1zM1279,590h1v1h-1zM1279,595h1v1h-1zM1279,600h1v1h-1zM1279,604h1v1h-1zM1279,609h1v1h-1zM1279,614h1v1h-1zM1279,618h1v1h-1zM1279,623h1v1h-1zM1279,628h1v1h-1zM1279,632h1v1h-1zM1279,637h1v1h-1zM1279,642h1v1h-1zM1279,646h1v1h-1zM1279,651h1v1h-1zM1279,656h1v1h-1zM1279,660h1v1h-1zM1279,665h1v1h-1zM1279,670h1v1h-1zM1279,674h1v1h-1zM1279,679h1v1h-1zM1279,684h1v1h-1zM1279,688h1v1h-1zM1279,693h1v1h-1zM1279,698h1v1h-1zM1279,702h1v1h-1zM1279,707h1v1h-1zM1279,712h1v1h-1zM1279,716h1v1h-1zM1279,721h1v1h-1zM1279,726h1v1h-1zM1279,730h1v1h-1zM1279,735h1v1h-1zM1279,740h1v1h-1zM1279,744h1v1h-1zM1279,749h1v1h-1zM1279,753h1v1h-1zM1279,761h1v1h-1zM1279,766h1v1h-1zM1279,771h1v1h-1zM1279,775h1v1h-1zM1279,780h1v1h-1zM1279,785h1v1h-1zM1279,789h1v1h-1zM1279,794h1v1h-1zM1279,799h1v1h-1zM1279,803h1v1h-1zM1279,808h1v1h-1zM1279,813h1v1h-1zM1279,817h1v1h-1zM1279,822h1v1h-1zM1279,827h1v1h-1zM1279,831h1v1h-1zM1279,836h1v1h-1zM1279,841h1v1h-1zM1279,845h1v1h-1zM1279,850h1v1h-1zM1279,854h1v1h-1zM1279,859h1v1h-1zM1279,864h1v1h-1zM1279,868h1v1h-1zM1279,873h1v1h-1zM1279,878h1v1h-1zM1279,882h1v1h-1zM1279,887h1v1h-1zM1279,892h1v1h-1zM1279,896h1v1h-1zM1279,901h1v1h-1zM1279,906h1v1h-1zM1279,910h1v1h-1zM1279,915h1v1h-1zM1279,920h1v1h-1zM1279,924h1v1h-1zM1279,929h1v1h-1zM1279,934h1v1h-1zM1279,938h1v1h-1zM1279,943h1v1h-1zM1279,948h1v1h-1zM1279,952h1v1h-1zM1279,957h1v1h-1zM1279,962h1v1h-1zM1279,966h1v1h-1zM1279,971h1v1h-1zM1279,976h1v1h-1zM1279,980h1v1h-1zM1279,985h1v1h-1zM1279,990h1v1h-1zM1454,62h1v1h-1zM1454,67h1v1h-1zM1454,71h1v1h-1zM1454,76h1v1h-1zM1454,81h1v1h-1zM1454,85h1v1h-1zM1454,90h1v1h-1zM1454,95h1v1h-1zM1454,99h1v1h-1zM1454,104h1v1h-1zM1454,108h1v1h-1zM1454,113h1v1h-1zM1454,118h1v1h-1zM1454,122h1v1h-1zM1454,127h1v1h-1zM1454,132h1v1h-1zM1454,136h1v1h-1zM1454,141h1v1h-1zM1454,146h1v1h-1zM1454,150h1v1h-1zM1454,155h1v1h-1zM1454,160h1v1h-1zM1454,164h1v1h-1zM1454,169h1v1h-1zM1454,174h1v1h-1zM1454,178h1v1h-1zM1454,183h1v1h-1zM1454,188h1v1h-1zM1454,192h1v1h-1zM1454,197h1v1h-1zM1454,202h1v1h-1zM1454,206h1v1h-1zM1454,211h1v1h-1zM1454,216h1v1h-1zM1454,220h1v1h-1zM1454,225h1v1h-1zM1454,230h1v1h-1zM1454,234h1v1h-1zM1454,239h1v1h-1zM1454,244h1v1h-1zM1454,248h1v1h-1zM1454,253h1v1h-1zM1454,258h1v1h-1zM1454,262h1v1h-1zM1454,267h1v1h-1zM1454,272h1v1h-1zM1454,276h1v1h-1zM1454,281h1v1h-1zM1454,285h1v1h-1zM1454,296h1v1h-1zM1454,301h1v1h-1zM1454,305h1v1h-1zM1454,310h1v1h-1zM1454,315h1v1h-1zM1454,319h1v1h-1zM1454,324h1v1h-1zM1454,329h1v1h-1zM1454,333h1v1h-1zM1454,338h1v1h-1zM1454,342h1v1h-1zM1454,347h1v1h-1zM1454,352h1v1h-1zM1454,356h1v1h-1zM1454,361h1v1h-1zM1454,366h1v1h-1zM1454,370h1v1h-1zM1454,375h1v1h-1zM1454,380h1v1h-1zM1454,384h1v1h-1zM1454,389h1v1h-1zM1454,394h1v1h-1zM1454,398h1v1h-1zM1454,403h1v1h-1zM1454,408h1v1h-1zM1454,412h1v1h-1zM1454,417h1v1h-1zM1454,422h1v1h-1zM1454,426h1v1h-1zM1454,431h1v1h-1zM1454,436h1v1h-1zM1454,440h1v1h-1zM1454,445h1v1h-1zM1454,450h1v1h-1zM1454,454h1v1h-1zM1454,459h1v1h-1zM1454,464h1v1h-1zM1454,468h1v1h-1zM1454,473h1v1h-1zM1454,478h1v1h-1zM1454,482h1v1h-1zM1454,487h1v1h-1zM1454,492h1v1h-1zM1454,496h1v1h-1zM1454,501h1v1h-1zM1454,506h1v1h-1zM1454,510h1v1h-1zM1454,515h1v1h-1zM1454,519h1v1h-1zM1454,530h1v1h-1zM1454,535h1v1h-1zM1454,539h1v1h-1zM1454,544h1v1h-1zM1454,549h1v1h-1zM1454,553h1v1h-1zM1454,558h1v1h-1zM1454,563h1v1h-1zM1454,567h1v1h-1zM1454,572h1v1h-1zM1454,576h1v1h-1zM1454,581h1v1h-1zM1454,586h1v1h-1zM1454,590h1v1h-1zM1454,595h1v1h-1zM1454,600h1v1h-1zM1454,604h1v1h-1zM1454,609h1v1h-1zM1454,614h1v1h-1zM1454,618h1v1h-1zM1454,623h1v1h-1zM1454,628h1v1h-1zM1454,632h1v1h-1zM1454,637h1v1h-1zM1454,642h1v1h-1zM1454,646h1v1h-1zM1454,651h1v1h-1zM1454,656h1v1h-1zM1454,660h1v1h-1zM1454,665h1v1h-1zM1454,670h1v1h-1zM1454,674h1v1h-1zM1454,679h1v1h-1zM1454,684h1v1h-1zM1454,688h1v1h-1zM1454,693h1v1h-1zM1454,698h1v1h-1zM1454,702h1v1h-1zM1454,707h1v1h-1zM1454,712h1v1h-1zM1454,716h1v1h-1zM1454,721h1v1h-1zM1454,726h1v1h-1zM1454,730h1v1h-1zM1454,735h1v1h-1zM1454,740h1v1h-1zM1454,744h1v1h-1zM1454,749h1v1h-1zM1454,753h1v1h-1zM1454,761h1v1h-1zM1454,766h1v1h-1zM1454,771h1v1h-1zM1454,775h1v1h-1zM1454,780h1v1h-1zM1454,785h1v1h-1zM1454,789h1v1h-1zM1454,794h1v1h-1zM1454,799h1v1h-1zM1454,803h1v1h-1zM1454,808h1v1h-1zM1454,813h1v1h-1zM1454,817h1v1h-1zM1454,822h1v1h-1zM1454,827h1v1h-1zM1454,831h1v1h-1zM1454,836h1v1h-1zM1454,841h1v1h-1zM1454,845h1v1h-1zM1454,850h1v1h-1zM1454,854h1v1h-1zM1454,859h1v1h-1zM1454,864h1v1h-1zM1454,868h1v1h-1zM1454,873h1v1h-1zM1454,878h1v1h-1zM1454,882h1v1h-1zM1454,887h1v1h-1zM1454,892h1v1h-1zM1454,896h1v1h-1zM1454,901h1v1h-1zM1454,906h1v1h-1zM1454,910h1v1h-1zM1454,915h1v1h-1zM1454,920h1v1h-1zM1454,924h1v1h-1zM1454,929h1v1h-1zM1454,934h1v1h-1zM1454,938h1v1h-1zM1454,943h1v1h-1zM1454,948h1v1h-1zM1454,952h1v1h-1zM1454,957h1v1h-1zM1454,962h1v1h-1zM1454,966h1v1h-1zM1454,971h1v1h-1zM1454,976h1v1h-1zM1454,980h1v1h-1zM1454,985h1v1h-1zM1454,990h1v1h-1zM1629,62h1v1h-1zM1629,67h1v1h-1zM1629,71h1v1h-1zM1629,76h1v1h-1zM1629,81h1v1h-1zM1629,85h1v1h-1zM1629,90h1v1h-1zM1629,95h1v1h-1zM1629,99h1v1h-1zM1629,104h1v1h-1zM1629,108h1v1h-1zM1629,113h1v1h-1zM1629,118h1v1h-1zM1629,122h1v1h-1zM1629,127h1v1h-1zM1629,132h1v1h-1zM1629,136h1v1h-1zM1629,141h1v1h-1zM1629,146h1v1h-1zM1629,150h1v1h-1zM1629,155h1v1h-1zM1629,160h1v1h-1zM1629,164h1v1h-1zM1629,169h1v1h-1zM1629,174h1v1h-1zM1629,178h1v1h-1zM1629,183h1v1h-1zM1629,188h1v1h-1zM1629,192h1v1h-1zM1629,197h1v1h-1zM1629,202h1v1h-1zM1629,206h1v1h-1zM1629,211h1v1h-1zM1629,216h1v1h-1zM1629,220h1v1h-1zM1629,225h1v1h-1zM1629,230h1v1h-1zM1629,234h1v1h-1zM1629,239h1v1h-1zM1629,244h1v1h-1zM1629,248h1v1h-1zM1629,253h1v1h-1zM1629,258h1v1h-1zM1629,262h1v1h-1zM1629,267h1v1h-1zM1629,272h1v1h-1zM1629,276h1v1h-1zM1629,281h1v1h-1zM1629,285h1v1h-1zM1629,296h1v1h-1zM1629,301h1v1h-1zM1629,305h1v1h-1zM1629,310h1v1h-1zM1629,315h1v1h-1zM1629,319h1v1h-1zM1629,324h1v1h-1zM1629,329h1v1h-1zM1629,333h1v1h-1zM1629,338h1v1h-1zM1629,342h1v1h-1zM1629,347h1v1h-1zM1629,352h1v1h-1zM1629,356h1v1h-1zM1629,361h1v1h-1zM1629,366h1v1h-1zM1629,370h1v1h-1zM1629,375h1v1h-1zM1629,380h1v1h-1zM1629,384h1v1h-1zM1629,389h1v1h-1zM1629,394h1v1h-1zM1629,398h1v1h-1zM1629,403h1v1h-1zM1629,408h1v1h-1zM1629,412h1v1h-1zM1629,417h1v1h-1zM1629,422h1v1h-1zM1629,426h1v1h-1zM1629,431h1v1h-1zM1629,436h1v1h-1zM1629,440h1v1h-1zM1629,445h1v1h-1zM1629,450h1v1h-1zM1629,454h1v1h-1zM1629,459h1v1h-1zM1629,464h1v1h-1zM1629,468h1v1h-1zM1629,473h1v1h-1zM1629,478h1v1h-1zM1629,482h1v1h-1zM1629,487h1v1h-1zM1629,492h1v1h-1zM1629,496h1v1h-1zM1629,501h1v1h-1zM1629,506h1v1h-1zM1629,510h1v1h-1zM1629,515h1v1h-1zM1629,519h1v1h-1zM1629,530h1v1h-1zM1629,535h1v1h-1zM1629,539h1v1h-1zM1629,544h1v1h-1zM1629,549h1v1h-1zM1629,553h1v1h-1zM1629,558h1v1h-1zM1629,563h1v1h-1zM1629,567h1v1h-1zM1629,572h1v1h-1zM1629,576h1v1h-1zM1629,581h1v1h-1zM1629,586h1v1h-1zM1629,590h1v1h-1zM1629,595h1v1h-1zM1629,600h1v1h-1zM1629,604h1v1h-1zM1629,609h1v1h-1zM1629,614h1v1h-1zM1629,618h1v1h-1zM1629,623h1v1h-1zM1629,628h1v1h-1zM1629,632h1v1h-1zM1629,637h1v1h-1zM1629,642h1v1h-1zM1629,646h1v1h-1zM1629,651h1v1h-1zM1629,656h1v1h-1zM1629,660h1v1h-1zM1629,665h1v1h-1zM1629,670h1v1h-1zM1629,674h1v1h-1zM1629,679h1v1h-1zM1629,684h1v1h-1zM1629,688h1v1h-1zM1629,693h1v1h-1zM1629,698h1v1h-1zM1629,702h1v1h-1zM1629,707h1v1h-1zM1629,712h1v1h-1zM1629,716h1v1h-1zM1629,721h1v1h-1zM1629,726h1v1h-1zM1629,730h1v1h-1zM1629,735h1v1h-1zM1629,740h1v1h-1zM1629,744h1v1h-1zM1629,749h1v1h-1zM1629,753h1v1h-1zM1629,761h1v1h-1zM1629,766h1v1h-1zM1629,771h1v1h-1zM1629,775h1v1h-1zM1629,780h1v1h-1zM1629,785h1v1h-1zM1629,789h1v1h-1zM1629,794h1v1h-1zM1629,799h1v1h-1zM1629,803h1v1h-1zM1629,808h1v1h-1zM1629,813h1v1h-1zM1629,817h1v1h-1zM1629,822h1v1h-1zM1629,827h1v1h-1zM1629,831h1v1h-1zM1629,836h1v1h-1zM1629,841h1v1h-1zM1629,845h1v1h-1zM1629,850h1v1h-1zM1629,854h1v1h-1zM1629,859h1v1h-1zM1629,864h1v1h-1zM1629,868h1v1h-1zM1629,873h1v1h-1zM1629,878h1v1h-1zM1629,882h1v1h-1zM1629,887h1v1h-1zM1629,892h1v1h-1zM1629,896h1v1h-1zM1629,901h1v1h-1zM1629,906h1v1h-1zM1629,910h1v1h-1zM1629,915h1v1h-1zM1629,920h1v1h-1zM1629,924h1v1h-1zM1629,929h1v1h-1zM1629,934h1v1h-1zM1629,938h1v1h-1zM1629,943h1v1h-1zM1629,948h1v1h-1zM1629,952h1v1h-1zM1629,957h1v1h-1zM1629,962h1v1h-1zM1629,966h1v1h-1zM1629,971h1v1h-1zM1629,976h1v1h-1zM1629,980h1v1h-1zM1629,985h1v1h-1zM1629,990h1v1h-1z" fill="#c4c4c4"/>
<line x1="55.5" y1="95" x2="55.5" y2="993" stroke="#cccccc" stroke-width="1.2" stroke-dasharray="7.5,4"/>
<rect x="3" y="290" width="1748" height="2" fill="#858585"/>
<rect x="3" y="524" width="1748" height="2" fill="#858585"/>
<rect x="3" y="758" width="1748" height="2" fill="#858585"/>
<line x1="3" y1="267.5" x2="1751" y2="267.5" stroke="#d0d0d0" stroke-width="1.4" stroke-dasharray="5.2,4.8"/>
<line x1="3" y1="431.5" x2="1751" y2="431.5" stroke="#d0d0d0" stroke-width="1.4" stroke-dasharray="5.2,4.8"/>
<line x1="3" y1="735.5" x2="1751" y2="735.5" stroke="#d0d0d0" stroke-width="1.4" stroke-dasharray="5.2,4.8"/>
<line x1="3" y1="962.5" x2="1751" y2="962.5" stroke="#d0d0d0" stroke-width="1.4" stroke-dasharray="5.2,4.8"/>
<rect x="1709.359375" y="73.03999999999999" width="39.140625" height="16" fill="#000"/>
<text x="1745.5" y="85.63999999999999" font-size="13.2" fill="#ecdf1c" text-anchor="end">40 V</text>
<rect x="1709.359375" y="96.33" width="39.140625" height="16" fill="#000"/>
<text x="1745.5" y="108.92999999999999" font-size="13.2" fill="#ecdf1c" text-anchor="end">35 V</text>
<rect x="1709.359375" y="119.62" width="39.140625" height="16" fill="#000"/>
<text x="1745.5" y="132.22" font-size="13.2" fill="#ecdf1c" text-anchor="end">30 V</text>
<rect x="1709.359375" y="142.91" width="39.140625" height="16" fill="#000"/>
<text x="1745.5" y="155.51" font-size="13.2" fill="#ecdf1c" text-anchor="end">25 V</text>
<rect x="1709.359375" y="166.2" width="39.140625" height="16" fill="#000"/>
<text x="1745.5" y="178.79999999999998" font-size="13.2" fill="#ecdf1c" text-anchor="end">20 V</text>
<rect x="1709.359375" y="189.49" width="39.140625" height="16" fill="#000"/>
<text x="1745.5" y="202.09" font-size="13.2" fill="#ecdf1c" text-anchor="end">15 V</text>
<rect x="1709.359375" y="212.78" width="39.140625" height="16" fill="#000"/>
<text x="1745.5" y="225.38" font-size="13.2" fill="#ecdf1c" text-anchor="end">10 V</text>
<rect x="1716.703125" y="236.07" width="31.796875" height="16" fill="#000"/>
<text x="1745.5" y="248.67" font-size="13.2" fill="#ecdf1c" text-anchor="end">5 V</text>
<rect x="1716.703125" y="259.5" width="31.796875" height="16" fill="#000"/>
<text x="1745.5" y="272.1" font-size="13.2" fill="#ecdf1c" text-anchor="end">0 V</text>
<rect x="1716.703125" y="307.04" width="31.796875" height="16" fill="#000"/>
<text x="1745.5" y="319.64000000000004" font-size="13.2" fill="#8cc63c" text-anchor="end">1 V</text>
<rect x="1691.046875" y="330.33" width="57.453125" height="16" fill="#000"/>
<text x="1745.5" y="342.93" font-size="13.2" fill="#8cc63c" text-anchor="end">800 mV</text>
<rect x="1691.046875" y="353.62" width="57.453125" height="16" fill="#000"/>
<text x="1745.5" y="366.22" font-size="13.2" fill="#8cc63c" text-anchor="end">600 mV</text>
<rect x="1691.046875" y="376.90999999999997" width="57.453125" height="16" fill="#000"/>
<text x="1745.5" y="389.51" font-size="13.2" fill="#8cc63c" text-anchor="end">400 mV</text>
<rect x="1691.046875" y="400.2" width="57.453125" height="16" fill="#000"/>
<text x="1745.5" y="412.8" font-size="13.2" fill="#8cc63c" text-anchor="end">200 mV</text>
<rect x="1716.703125" y="423.5" width="31.796875" height="16" fill="#000"/>
<text x="1745.5" y="436.1" font-size="13.2" fill="#8cc63c" text-anchor="end">0 V</text>
<rect x="1686.65625" y="446.78" width="61.84375" height="16" fill="#000"/>
<text x="1745.5" y="459.38" font-size="13.2" fill="#8cc63c" text-anchor="end">-200 mV</text>
<rect x="1686.65625" y="470.07" width="61.84375" height="16" fill="#000"/>
<text x="1745.5" y="482.67" font-size="13.2" fill="#8cc63c" text-anchor="end">-400 mV</text>
<rect x="1686.65625" y="493.36" width="61.84375" height="16" fill="#000"/>
<text x="1745.5" y="505.96000000000004" font-size="13.2" fill="#8cc63c" text-anchor="end">-600 mV</text>
<rect x="1664.5255681818182" y="541.04" width="83.97443181818181" height="16" fill="#000"/>
<text x="1745.5" y="553.64" font-size="13.5" fill="#ee9430" text-anchor="end">581.677 mT</text>
<rect x="1664.5255681818182" y="564.33" width="83.97443181818181" height="16" fill="#000"/>
<text x="1745.5" y="576.9300000000001" font-size="13.5" fill="#ee9430" text-anchor="end">508.967 mT</text>
<rect x="1664.5255681818182" y="587.62" width="83.97443181818181" height="16" fill="#000"/>
<text x="1745.5" y="600.22" font-size="13.5" fill="#ee9430" text-anchor="end">436.258 mT</text>
<rect x="1664.5255681818182" y="610.91" width="83.97443181818181" height="16" fill="#000"/>
<text x="1745.5" y="623.51" font-size="13.5" fill="#ee9430" text-anchor="end">363.548 mT</text>
<rect x="1664.5255681818182" y="634.2" width="83.97443181818181" height="16" fill="#000"/>
<text x="1745.5" y="646.8000000000001" font-size="13.5" fill="#ee9430" text-anchor="end">290.838 mT</text>
<rect x="1664.5255681818182" y="657.49" width="83.97443181818181" height="16" fill="#000"/>
<text x="1745.5" y="670.09" font-size="13.5" fill="#ee9430" text-anchor="end">218.129 mT</text>
<rect x="1664.5255681818182" y="680.78" width="83.97443181818181" height="16" fill="#000"/>
<text x="1745.5" y="693.38" font-size="13.5" fill="#ee9430" text-anchor="end">145.419 mT</text>
<rect x="1672.0202414772727" y="704.0699999999999" width="76.47975852272727" height="16" fill="#000"/>
<text x="1745.5" y="716.67" font-size="13.5" fill="#ee9430" text-anchor="end">72.710 mT</text>
<rect x="1717.2439630681818" y="727.5" width="31.25603693181818" height="16" fill="#000"/>
<text x="1745.5" y="740.1" font-size="13.5" fill="#ee9430" text-anchor="end">0 T</text>
<rect x="1660.7542613636363" y="767.8" width="87.74573863636364" height="16" fill="#000"/>
<text x="1745.5" y="780.4" font-size="13.5" fill="#7f3aa8" text-anchor="end">5.219626 kA</text>
<rect x="1660.7542613636363" y="791.0899999999999" width="87.74573863636364" height="16" fill="#000"/>
<text x="1745.5" y="803.6899999999999" font-size="13.5" fill="#7f3aa8" text-anchor="end">4.567172 kA</text>
<rect x="1660.7542613636363" y="814.38" width="87.74573863636364" height="16" fill="#000"/>
<text x="1745.5" y="826.98" font-size="13.5" fill="#7f3aa8" text-anchor="end">3.914719 kA</text>
<rect x="1660.7542613636363" y="837.67" width="87.74573863636364" height="16" fill="#000"/>
<text x="1745.5" y="850.27" font-size="13.5" fill="#7f3aa8" text-anchor="end">3.262266 kA</text>
<rect x="1660.7542613636363" y="860.9599999999999" width="87.74573863636364" height="16" fill="#000"/>
<text x="1745.5" y="873.56" font-size="13.5" fill="#7f3aa8" text-anchor="end">2.609813 kA</text>
<rect x="1660.7542613636363" y="884.25" width="87.74573863636364" height="16" fill="#000"/>
<text x="1745.5" y="896.85" font-size="13.5" fill="#7f3aa8" text-anchor="end">1.957360 kA</text>
<rect x="1660.7542613636363" y="907.54" width="87.74573863636364" height="16" fill="#000"/>
<text x="1745.5" y="920.14" font-size="13.5" fill="#7f3aa8" text-anchor="end">1.304906 kA</text>
<rect x="1675.7436079545455" y="930.8299999999999" width="72.75639204545455" height="16" fill="#000"/>
<text x="1745.5" y="943.43" font-size="13.5" fill="#7f3aa8" text-anchor="end">652.453 A</text>
<rect x="1716.98828125" y="954.5" width="31.51171875" height="16" fill="#000"/>
<text x="1745.5" y="967.1" font-size="13.5" fill="#7f3aa8" text-anchor="end">0 A</text>
<path d="M3,735.5 L6.06,735.5 L9.12,735.5 L12.18,735.5 L15.24,735.5 L18.29,735.5 L21.35,735.5 L24.41,735.5 L27.47,735.5 L30.53,735.5 L33.59,735.5 L36.65,735.5 L39.71,735.5 L42.76,735.5 L45.82,735.5 L48.88,735.5 L51.94,735.5 L55,735.5 L58.75,733.4 L62.5,731.3 L65.55,730.44 L68.59,729.57 L71.64,728.71 L74.68,727.85 L77.73,726.98 L80.77,726.12 L83.82,725.25 L86.86,724.39 L89.91,723.53 L92.95,722.66 L96,721.8 L99.05,720.94 L102.09,720.07 L105.14,719.21 L108.18,718.35 L111.23,717.48 L114.27,716.62 L117.32,715.75 L120.36,714.89 L123.41,714.03 L126.45,713.16 L129.5,712.3 L132.55,711.44 L135.59,710.57 L138.64,709.71 L141.68,708.85 L144.73,707.98 L147.77,707.12 L150.82,706.25 L153.86,705.39 L156.91,704.53 L159.95,703.66 L163,702.8 L166.05,701.94 L169.09,701.07 L172.14,700.21 L175.18,699.35 L178.23,698.48 L181.27,697.62 L184.32,696.75 L187.36,695.89 L190.41,695.03 L193.45,694.16 L196.5,693.3 L199.55,692.44 L202.59,691.57 L205.64,690.71 L208.68,689.85 L211.73,688.98 L214.77,688.12 L217.82,687.25 L220.86,686.39 L223.91,685.53 L226.95,684.66 L230,683.8 L233.02,683.07 L236.03,682.33 L239.05,681.6 L242.07,680.87 L245.09,680.14 L248.1,679.4 L251.12,678.67 L254.14,677.94 L257.16,677.21 L260.17,676.47 L263.19,675.74 L266.21,675.01 L269.22,674.27 L272.24,673.54 L275.26,672.81 L278.28,672.08 L281.29,671.34 L284.31,670.61 L287.33,669.88 L290.34,669.14 L293.36,668.41 L296.38,667.68 L299.4,666.95 L302.41,666.21 L305.43,665.48 L308.45,664.75 L311.47,664.02 L314.48,663.28 L317.5,662.55 L320.52,661.82 L323.53,661.08 L326.55,660.35 L329.57,659.62 L332.59,658.89 L335.6,658.15 L338.62,657.42 L341.64,656.69 L344.66,655.96 L347.67,655.22 L350.69,654.49 L353.71,653.76 L356.72,653.02 L359.74,652.29 L362.76,651.56 L365.78,650.83 L368.79,650.09 L371.81,649.36 L374.83,648.63 L377.84,647.89 L380.86,647.16 L383.88,646.43 L386.9,645.7 L389.91,644.96 L392.93,644.23 L395.95,643.5 L398.97,642.77 L401.98,642.03 L405,641.3 L408,640.66 L411,640.02 L414,639.38 L417,638.74 L420,638.1 L423,637.46 L426,636.82 L429,636.18 L432,635.54 L435,634.9 L438,634.26 L441,633.62 L444,632.98 L447,632.34 L450,631.7 L453,631.06 L456,630.42 L459,629.78 L462,629.14 L465,628.5 L468,627.86 L471,627.22 L474,626.58 L477,625.94 L480,625.3 L483.03,624.72 L486.06,624.15 L489.09,623.57 L492.12,623 L495.15,622.42 L498.18,621.85 L501.21,621.27 L504.24,620.69 L507.27,620.12 L510.3,619.54 L513.33,618.97 L516.36,618.39 L519.39,617.82 L522.42,617.24 L525.45,616.66 L528.48,616.09 L531.52,615.51 L534.55,614.94 L537.58,614.36 L540.61,613.78 L543.64,613.21 L546.67,612.63 L549.7,612.06 L552.73,611.48 L555.76,610.91 L558.79,610.33 L561.82,609.75 L564.85,609.18 L567.88,608.6 L570.91,608.03 L573.94,607.45 L576.97,606.88 L580,606.3 L583.02,605.83 L586.03,605.35 L589.05,604.88 L592.07,604.4 L595.09,603.93 L598.1,603.46 L601.12,602.98 L604.14,602.51 L607.16,602.03 L610.17,601.56 L613.19,601.08 L616.21,600.61 L619.22,600.14 L622.24,599.66 L625.26,599.19 L628.28,598.71 L631.29,598.24 L634.31,597.77 L637.33,597.29 L640.34,596.82 L643.36,596.34 L646.38,595.87 L649.4,595.39 L652.41,594.92 L655.43,594.45 L658.45,593.97 L661.47,593.5 L664.48,593.02 L667.5,592.55 L670.52,592.08 L673.53,591.6 L676.55,591.13 L679.57,590.65 L682.59,590.18 L685.6,589.71 L688.62,589.23 L691.64,588.76 L694.66,588.28 L697.67,587.81 L700.69,587.33 L703.71,586.86 L706.72,586.39 L709.74,585.91 L712.76,585.44 L715.78,584.96 L718.79,584.49 L721.81,584.02 L724.83,583.54 L727.84,583.07 L730.86,582.59 L733.88,582.12 L736.9,581.64 L739.91,581.17 L742.93,580.7 L745.95,580.22 L748.97,579.75 L751.98,579.27 L755,578.8 L758.02,578.5 L761.03,578.2 L764.05,577.89 L767.07,577.59 L770.09,577.29 L773.1,576.99 L776.12,576.69 L779.14,576.39 L782.16,576.08 L785.17,575.78 L788.19,575.48 L791.21,575.18 L794.22,574.88 L797.24,574.58 L800.26,574.27 L803.28,573.97 L806.29,573.67 L809.31,573.37 L812.33,573.07 L815.34,572.77 L818.36,572.46 L821.38,572.16 L824.4,571.86 L827.41,571.56 L830.43,571.26 L833.45,570.96 L836.47,570.65 L839.48,570.35 L842.5,570.05 L845.52,569.75 L848.53,569.45 L851.55,569.14 L854.57,568.84 L857.59,568.54 L860.6,568.24 L863.62,567.94 L866.64,567.64 L869.66,567.33 L872.67,567.03 L875.69,566.73 L878.71,566.43 L881.72,566.13 L884.74,565.83 L887.76,565.52 L890.78,565.22 L893.79,564.92 L896.81,564.62 L899.83,564.32 L902.84,564.02 L905.86,563.71 L908.88,563.41 L911.9,563.11 L914.91,562.81 L917.93,562.51 L920.95,562.21 L923.97,561.9 L926.98,561.6 L930,561.3 L933,561.05 L936,560.8 L939,560.55 L942,560.3 L945,560.05 L948,559.8 L951,559.55 L954,559.3 L957,559.05 L960,558.8 L963.02,558.64 L966.04,558.49 L969.06,558.33 L972.08,558.17 L975.1,558.02 L978.12,557.86 L981.15,557.71 L984.17,557.55 L987.19,557.39 L990.21,557.24 L993.23,557.08 L996.25,556.92 L999.27,556.77 L1002.29,556.61 L1005.31,556.46 L1008.33,556.3 L1011.35,556.14 L1014.38,555.99 L1017.4,555.83 L1020.42,555.67 L1023.44,555.52 L1026.46,555.36 L1029.48,555.21 L1032.5,555.05 L1035.52,554.89 L1038.54,554.74 L1041.56,554.58 L1044.58,554.42 L1047.6,554.27 L1050.62,554.11 L1053.65,553.96 L1056.67,553.8 L1059.69,553.64 L1062.71,553.49 L1065.73,553.33 L1068.75,553.17 L1071.77,553.02 L1074.79,552.86 L1077.81,552.71 L1080.83,552.55 L1083.85,552.39 L1086.88,552.24 L1089.9,552.08 L1092.92,551.92 L1095.94,551.77 L1098.96,551.61 L1101.98,551.46 L1105,551.3 L1108.02,551.22 L1111.04,551.15 L1114.06,551.07 L1117.08,551 L1120.1,550.92 L1123.12,550.85 L1126.15,550.77 L1129.17,550.7 L1132.19,550.62 L1135.21,550.55 L1138.23,550.48 L1141.25,550.4 L1144.27,550.32 L1147.29,550.25 L1150.31,550.17 L1153.33,550.1 L1156.35,550.02 L1159.38,549.95 L1162.4,549.88 L1165.42,549.8 L1168.44,549.73 L1171.46,549.65 L1174.48,549.58 L1177.5,549.5 L1180.54,549.5 L1183.58,549.5 L1186.62,549.5 L1189.66,549.5 L1192.7,549.5 L1195.74,549.5 L1198.78,549.5 L1201.82,549.5 L1204.86,549.5 L1207.91,549.5 L1210.95,549.5 L1213.99,549.5 L1217.03,549.5 L1220.07,549.5 L1223.11,549.5 L1226.15,549.5 L1229.19,549.5 L1232.23,549.5 L1235.27,549.5 L1238.31,549.5 L1241.35,549.5 L1244.39,549.5 L1247.43,549.5 L1250.47,549.5 L1253.51,549.5 L1256.55,549.5 L1259.59,549.5 L1262.64,549.5 L1265.68,549.5 L1268.72,549.5 L1271.76,549.5 L1274.8,549.5 L1277.84,549.5 L1280.88,549.5 L1283.92,549.5 L1286.96,549.5 L1290,549.5 L1293.12,549.61 L1296.25,549.73 L1299.38,549.84 L1302.5,549.95 L1305.62,550.06 L1308.75,550.17 L1311.88,550.29 L1315,550.4 L1318.12,550.51 L1321.25,550.62 L1324.38,550.74 L1327.5,550.85 L1330.62,550.96 L1333.75,551.07 L1336.88,551.19 L1340,551.3 L1343.18,551.41 L1346.36,551.52 L1349.55,551.63 L1352.73,551.74 L1355.91,551.85 L1359.09,551.95 L1362.27,552.06 L1365.45,552.17 L1368.64,552.28 L1371.82,552.39 L1375,552.5 L1378.09,552.61 L1381.18,552.71 L1384.26,552.82 L1387.35,552.92 L1390.44,553.03 L1393.53,553.14 L1396.62,553.24 L1399.71,553.35 L1402.79,553.45 L1405.88,553.56 L1408.97,553.66 L1412.06,553.77 L1415.15,553.88 L1418.24,553.98 L1421.32,554.09 L1424.41,554.19 L1427.5,554.3 L1430.54,554.39 L1433.57,554.47 L1436.61,554.56 L1439.64,554.64 L1442.68,554.73 L1445.71,554.81 L1448.75,554.9 L1451.79,554.99 L1454.82,555.07 L1457.86,555.16 L1460.89,555.24 L1463.93,555.33 L1466.96,555.41 L1470,555.5 L1473.09,555.69 L1476.18,555.89 L1479.26,556.08 L1482.35,556.28 L1485.44,556.47 L1488.53,556.66 L1491.62,556.86 L1494.71,557.05 L1497.79,557.25 L1500.88,557.44 L1503.97,557.64 L1507.06,557.83 L1510.15,558.02 L1513.24,558.22 L1516.32,558.41 L1519.41,558.61 L1522.5,558.8 L1525.57,559.03 L1528.64,559.25 L1531.7,559.48 L1534.77,559.71 L1537.84,559.94 L1540.91,560.16 L1543.98,560.39 L1547.05,560.62 L1550.11,560.85 L1553.18,561.07 L1556.25,561.3 L1559.32,561.53 L1562.39,561.75 L1565.45,561.98 L1568.52,562.21 L1571.59,562.44 L1574.66,562.66 L1577.73,562.89 L1580.8,563.12 L1583.86,563.35 L1586.93,563.57 L1590,563.8 L1593,564.03 L1596,564.26 L1599,564.48 L1602,564.71 L1605,564.94 L1608,565.17 L1611,565.4 L1614,565.62 L1617,565.85 L1620,566.08 L1623,566.31 L1626,566.54 L1629,566.76 L1632,566.99 L1635,567.22 L1638,567.45 L1641,567.68 L1644,567.9 L1647,568.13 L1650,568.36 L1653,568.59 L1656,568.82 L1659,569.04 L1662,569.27 L1665,569.5 L1668.12,569.84 L1671.25,570.19 L1674.38,570.53 L1677.5,570.88 L1680.62,571.22 L1683.75,571.56 L1686.88,571.91 L1690,572.25 L1693.12,572.59 L1696.25,572.94 L1699.38,573.28 L1702.5,573.62 L1705.62,573.97 L1708.75,574.31 L1711.88,574.66 L1715,575 L1718,575.21 L1721,575.42 L1724,575.62 L1727,575.83 L1730,576.04 L1733,576.25 L1736,576.46 L1739,576.67 L1742,576.88 L1745,577.08 L1748,577.29 L1751,577.5" fill="none" stroke="#f39a2c" stroke-width="1.3" shape-rendering="crispEdges"/>
<path d="M3,962.3 L4.53,962.3 L6.06,962.3 L7.59,962.3 L9.12,962.3 L10.65,962.3 L12.18,962.3 L13.71,962.3 L15.24,962.3 L16.76,962.3 L18.29,962.3 L19.82,962.3 L21.35,962.3 L22.88,962.3 L24.41,962.3 L25.94,962.3 L27.47,962.3 L29,962.3 L30.53,962.3 L32.06,962.3 L33.59,962.3 L35.12,962.3 L36.65,962.3 L38.18,962.3 L39.71,962.3 L41.24,962.3 L42.76,962.3 L44.29,962.3 L45.82,962.3 L47.35,962.3 L48.88,962.3 L50.41,962.3 L51.94,962.3 L53.47,962.3 L55,962.3 L56.52,962.28 L58.04,962.26 L59.57,962.23 L61.09,962.21 L62.61,962.19 L64.13,962.17 L65.65,962.15 L67.17,962.13 L68.7,962.1 L70.22,962.08 L71.74,962.06 L73.26,962.04 L74.78,962.02 L76.3,962 L77.83,961.97 L79.35,961.95 L80.87,961.93 L82.39,961.91 L83.91,961.89 L85.43,961.87 L86.96,961.84 L88.48,961.82 L90,961.8 L91.5,961.78 L93,961.77 L94.5,961.75 L96,961.74 L97.5,961.72 L99,961.71 L100.5,961.69 L102,961.68 L103.5,961.66 L105,961.65 L106.5,961.63 L108,961.62 L109.5,961.61 L111,961.59 L112.5,961.58 L114,961.56 L115.5,961.54 L117,961.53 L118.5,961.51 L120,961.5 L121.5,961.49 L123,961.47 L124.5,961.46 L126,961.44 L127.5,961.42 L129,961.41 L130.5,961.39 L132,961.38 L133.5,961.37 L135,961.35 L136.5,961.34 L138,961.32 L139.5,961.31 L141,961.29 L142.5,961.28 L144,961.26 L145.5,961.25 L147,961.23 L148.5,961.22 L150,961.2 L151.53,961.18 L153.06,961.16 L154.6,961.14 L156.13,961.12 L157.66,961.1 L159.19,961.08 L160.73,961.06 L162.26,961.05 L163.79,961.03 L165.32,961.01 L166.85,960.99 L168.39,960.97 L169.92,960.95 L171.45,960.93 L172.98,960.91 L174.52,960.89 L176.05,960.87 L177.58,960.85 L179.11,960.83 L180.65,960.81 L182.18,960.79 L183.71,960.77 L185.24,960.75 L186.77,960.74 L188.31,960.72 L189.84,960.7 L191.37,960.68 L192.9,960.66 L194.44,960.64 L195.97,960.62 L197.5,960.6 L200,956.94 L201.56,955.77 L203.12,954.37 L204.69,954.51 L206.25,952.11 L207.81,951.88 L209.38,951.49 L210.94,949.15 L212.5,948.89 L214.09,948.41 L215.68,946.92 L217.27,946.89 L218.86,946.83 L220.45,945.86 L222.05,945.72 L223.64,944.24 L225.23,943.8 L226.82,943.02 L228.41,943.08 L230,943.18 L231.59,941.51 L233.18,940.67 L234.77,938.9 L236.36,938.35 L237.95,936.18 L239.55,935.35 L241.14,934.82 L242.73,933.77 L244.32,932.15 L245.91,930.48 L247.5,929.63 L249.09,928.63 L250.68,927.83 L252.27,927.77 L253.86,925.88 L255.45,926.07 L257.05,925.15 L258.64,922.92 L260.23,922.53 L261.82,921.8 L263.41,920.15 L265,919.88 L266.5,919.98 L268,918.05 L269.5,918.15 L271,916.73 L272.5,916.79 L274,916.63 L275.5,914.86 L277,913.88 L278.5,913.33 L280,913.4 L281.5,911.89 L283,911.34 L284.5,911.33 L286,911.34 L287.5,909.87 L289.06,909.21 L290.62,908.97 L292.19,907.47 L293.75,907.63 L295.31,906.35 L296.88,906.42 L298.44,906.36 L300,904.29 L301.56,904.46 L303.12,903.92 L304.69,902.56 L306.25,902.13 L307.81,902.67 L309.38,902.05 L310.94,900.02 L312.5,900.33 L314.06,900.1 L315.62,898.33 L317.19,898.3 L318.75,896.77 L320.31,896.66 L321.88,896.53 L323.44,895.77 L325,895.44 L326.56,893.71 L328.12,893.51 L329.69,893.71 L331.25,892.63 L332.81,891.8 L334.38,891.09 L335.94,891.4 L337.5,890.12 L339.03,888.53 L340.56,889.09 L342.08,887.64 L343.61,887.12 L345.14,886.07 L346.67,885.74 L348.19,884.86 L349.72,883.79 L351.25,883.96 L352.78,882.42 L354.31,882.82 L355.83,880.91 L357.36,881.42 L358.89,880.77 L360.42,879.58 L361.94,879.22 L363.47,877.79 L365,877.88 L366.5,877.19 L368,876.69 L369.5,877.67 L371,876.58 L372.5,876.35 L374,876.94 L375.5,875.96 L377,876.25 L378.5,875.26 L380,876.15 L381.75,874.64 L383.5,873.74 L385.25,874.65 L387,872.8 L388.75,873.46 L391.25,879.53 L393.12,879.25 L395,878.62 L396.88,874.95 L398.75,871.43 L400.31,870.93 L401.88,870.5 L403.44,870.28 L405,868.52 L406.56,867.86 L408.12,868.22 L409.69,867.23 L411.25,866.84 L412.92,866.66 L414.58,865.95 L416.25,864 L417.92,863.69 L419.58,863.16 L421.25,862.32 L423.12,862.14 L425,863.37 L426.67,861.1 L428.33,860.86 L430,859.83 L431.67,860.21 L433.33,859.79 L435,859.36 L436.88,857.73 L438.75,856.95 L440.62,856.98 L442.5,858.31 L444,856.69 L445.5,857.07 L447,855.44 L448.5,854.36 L450,853.88 L451.67,853.9 L453.33,853.63 L455,852.92 L456.5,852.46 L458,852.83 L459.5,853.45 L461,852.68 L462.5,853.21 L464,851.63 L465.5,853.05 L467,852.76 L468.5,852.09 L470,851.94 L472.5,853.16 L474,853.14 L475.5,851.16 L477,851.47 L478.5,850.69 L480,849.68 L481.56,849.97 L483.12,849.58 L484.69,848.2 L486.25,848.77 L487.81,847.99 L489.38,847.66 L490.94,847.51 L492.5,846.18 L494.06,846.67 L495.62,845.91 L497.19,846.32 L498.75,844.89 L500.31,845.45 L501.88,844.9 L503.44,844.34 L505,844.35 L506.88,841.76 L508.75,841.41 L510.5,840.93 L512.25,840.53 L514,839.6 L515.75,838.56 L517.5,838.25 L519.38,839.85 L521.25,840.09 L522.75,839.16 L524.25,838.89 L525.75,838.33 L527.25,837.7 L528.75,836.14 L530.36,837.43 L531.96,836.81 L533.57,837.61 L535.18,836.46 L536.79,838.06 L538.39,837.56 L540,838.26 L541.56,837.28 L543.12,836.03 L544.69,833.87 L546.25,833.26 L548,833.12 L549.75,834.05 L551.5,833.16 L553.25,833.25 L555,833.13 L556.67,832.53 L558.33,833.22 L560,832.66 L561.67,831.9 L563.33,832.69 L565,832.45 L566.67,832.74 L568.33,832.69 L570,833.32 L571.67,831.84 L573.33,831.04 L575,830.63 L576.67,829.28 L578.33,828.84 L580,828.81 L581.56,827.02 L583.12,826.84 L584.69,827.64 L586.25,826.14 L587.81,826.14 L589.38,826.79 L590.94,826.08 L592.5,825.15 L594.06,824.49 L595.62,824.44 L597.19,824.08 L598.75,824.48 L600.28,824.32 L601.81,823.57 L603.33,823.31 L604.86,822.91 L606.39,822.38 L607.92,822.01 L609.44,821.64 L610.97,819.8 L612.5,819.71 L615,818.35 L616.75,818.79 L618.5,818.48 L620.25,818.12 L622,818.77 L623.75,817.94 L625.42,815.77 L627.08,814.01 L628.75,812.44 L630.42,812.48 L632.08,812.21 L633.75,811.8 L635.62,812.65 L637.5,814.24 L639.06,812.55 L640.62,810.72 L642.19,809.75 L643.75,807.6 L646.25,809.34 L648,807.15 L649.5,807.15 L651,808.77 L652.5,809.14 L655,807.67 L656.56,808.48 L658.12,809.29 L659.69,810.05 L661.25,810.37 L663.75,803.29 L665.31,804.44 L666.88,804.74 L668.44,804.86 L670,806.33 L671.88,806.2 L673.75,806.84 L675.33,802.54 L676.9,799.93 L678.45,800.76 L680,801.43 L681.55,803.76 L683.1,804.41 L685.3,802.73 L687.5,799.91 L689.37,799.12 L691.23,799.87 L693.1,797.77 L695.3,799.31 L697.5,800.71 L700,800.6 L701.55,798.64 L703.1,795.79 L705,796.79 L706.9,797.93 L708.75,793.12 L710.62,796.26 L712.5,799.42 L714.37,800.72 L716.23,800.61 L718.1,800.88 L720.6,795.31 L722.12,794.97 L723.64,794.21 L725.16,794.45 L726.69,794.42 L728.21,793.5 L729.73,792.16 L731.25,792.79 L732.92,792.98 L734.58,794.97 L736.25,796.84 L737.92,794.45 L739.58,792.74 L741.25,790.41 L743.12,791.51 L745,793.18 L746.67,792.22 L748.33,791.14 L750,788.97 L751.56,790.53 L753.12,792.6 L754.69,793.36 L756.25,795.16 L757.81,793.2 L759.38,791.94 L760.94,788.62 L762.5,787 L764.25,789.7 L766,791.27 L767.75,792.1 L769.5,793.92 L771.25,795.79 L773.12,792.89 L775,790.04 L776.5,790.45 L778,791.92 L779.5,794.2 L781,795.28 L782.5,797.45 L784.4,797.7 L785.25,783.8 L786.5,786.6 L788.1,801.24 L790,791.8 L791.25,802.99 L793.75,804.24 L795.62,802.44 L797.5,800.81 L799.38,803.84 L801.25,805.69 L803,806.4 L804.75,806.6 L806.5,805.33 L808.25,805.89 L810,806.87 L811.25,801.68 L812.92,801.48 L814.58,799.7 L816.25,799.72 L817.92,799.84 L819.58,798.69 L821.25,798.37 L823.12,799.68 L825,799.23 L826.88,797.62 L828.75,797.47 L830.36,797.2 L831.96,796.76 L833.57,797.95 L835.18,797.24 L836.79,797.16 L838.39,797.6 L840,797.36 L841.5,797.89 L843,798.44 L844.5,797.86 L846,798.62 L847.5,797.09 L849,797.25 L850.5,797.15 L852,797.78 L853.5,797.12 L855,797.82 L856.5,797.53 L858,797.57 L859.5,797.94 L861,797.79 L862.5,797.95 L864,796.66 L865.5,796.97 L867,797.85 L868.5,796.89 L870,796.66 L871.53,797.03 L873.06,796.61 L874.6,797.73 L876.13,797.45 L877.66,796.64 L879.19,798.09 L880.73,797.44 L882.26,797.07 L883.79,797.7 L885.32,798.3 L886.85,797.39 L888.39,796.92 L889.92,797.27 L891.45,797.11 L892.98,797.92 L894.52,797.63 L896.05,798.55 L897.58,797.58 L899.11,797.33 L900.65,798.1 L902.18,797.62 L903.71,797.97 L905.24,797.9 L906.77,797.88 L908.31,798.67 L909.84,799.21 L911.37,798.36 L912.9,798.85 L914.44,798.4 L915.97,799.41 L917.5,798.88 L919.11,798.76 L920.73,800.62 L922.34,800.48 L923.96,800.93 L925.57,801.6 L927.19,803.63 L928.8,804.14 L930,830 L931,880 L932,905 L932.5,915 L934,920 L935.5,925 L937,930 L938.5,935 L940,940 L941.5,941.26 L943,942.52 L944.5,943.78 L946,945.04 L947.5,946.3 L949.06,947.24 L950.62,948.17 L952.19,949.11 L953.75,950.05 L955.31,950.99 L956.88,951.92 L958.44,952.86 L960,953.8 L961.54,954.08 L963.08,954.37 L964.62,954.65 L966.15,954.94 L967.69,955.22 L969.23,955.51 L970.77,955.79 L972.31,956.08 L973.85,956.36 L975.38,956.65 L976.92,956.93 L978.46,957.22 L980,957.5 L981.5,957.5 L983,957.5 L984.5,957.5 L986,957.5 L987.5,957.5 L989,957.5 L990.5,957.5 L992,957.5 L993.5,957.5 L995,957.5 L996.5,957.5 L998,957.5 L999.5,957.5 L1001,957.5 L1002.5,957.5 L1004,957.5 L1005.5,957.5 L1007,957.5 L1008.5,957.5 L1010,957.5 L1011.5,957.5 L1013,957.5 L1014.5,957.5 L1016,957.5 L1017.5,957.5 L1019,957.5 L1020.5,957.5 L1022,957.5 L1023.5,957.5 L1025,957.5 L1026.5,957.5 L1028,957.5 L1029.5,957.5 L1031,957.5 L1032.5,957.5 L1034,957.5 L1035.5,957.5 L1037,957.5 L1038.5,957.5 L1040,957.5 L1041.5,957.5 L1043,957.5 L1044.5,957.5 L1046,957.5 L1047.5,957.5 L1049,957.5 L1050.5,957.5 L1052,957.5 L1053.5,957.5 L1055,957.5 L1056.5,957.5 L1058,957.5 L1059.5,957.5 L1061,957.5 L1062.5,957.5 L1064,957.5 L1065.5,957.5 L1067,957.5 L1068.5,957.5 L1070,957.5 L1071.5,957.5 L1073,957.5 L1074.5,957.5 L1076,957.5 L1077.5,957.5 L1079,957.5 L1080.5,957.5 L1082,957.5 L1083.5,957.5 L1085,957.5 L1086.5,957.5 L1088,957.5 L1089.5,957.5 L1091,957.5 L1092.5,957.5 L1094,957.5 L1095.5,957.5 L1097,957.5 L1098.5,957.5 L1100,957.5 L1101.52,957.45 L1103.04,957.4 L1104.57,957.34 L1106.09,957.29 L1107.61,957.24 L1109.13,957.19 L1110.65,957.13 L1112.17,957.08 L1113.7,957.03 L1115.22,956.98 L1116.74,956.93 L1118.26,956.87 L1119.78,956.82 L1121.3,956.77 L1122.83,956.72 L1124.35,956.67 L1125.87,956.61 L1127.39,956.56 L1128.91,956.51 L1130.43,956.46 L1131.96,956.4 L1133.48,956.35 L1135,956.3 L1136.5,956.28 L1138,956.27 L1139.5,956.25 L1141,956.24 L1142.5,956.22 L1144,956.2 L1145.5,956.19 L1147,956.17 L1148.5,956.16 L1150,956.14 L1151.5,956.12 L1153,956.11 L1154.5,956.09 L1156,956.08 L1157.5,956.06 L1159,956.04 L1160.5,956.03 L1162,956.01 L1163.5,956 L1165,955.98 L1166.5,955.96 L1168,955.95 L1169.5,955.93 L1171,955.92 L1172.5,955.9 L1174,955.88 L1175.5,955.87 L1177,955.85 L1178.5,955.84 L1180,955.82 L1181.5,955.8 L1183,955.79 L1184.5,955.77 L1186,955.76 L1187.5,955.74 L1189,955.72 L1190.5,955.71 L1192,955.69 L1193.5,955.68 L1195,955.66 L1196.5,955.64 L1198,955.63 L1199.5,955.61 L1201,955.6 L1202.5,955.58 L1204,955.56 L1205.5,955.55 L1207,955.53 L1208.5,955.52 L1210,955.5 L1211.5,955.48 L1213,955.46 L1214.5,955.44 L1216,955.42 L1217.5,955.4 L1219,955.38 L1220.5,955.36 L1222,955.34 L1223.5,955.32 L1225,955.3 L1226.5,955.28 L1228,955.26 L1229.5,955.24 L1231,955.22 L1232.5,955.2 L1234,955.18 L1235.5,955.16 L1237,955.14 L1238.5,955.12 L1240,955.1 L1241.5,955.08 L1243,955.06 L1244.5,955.04 L1246,955.02 L1247.5,955 L1249,954.98 L1250.5,954.96 L1252,954.94 L1253.5,954.92 L1255,954.9 L1256.5,954.88 L1258,954.86 L1259.5,954.84 L1261,954.82 L1262.5,954.8 L1264,954.78 L1265.5,954.76 L1267,954.74 L1268.5,954.72 L1270,954.7 L1271.5,954.68 L1273,954.66 L1274.5,954.64 L1276,954.62 L1277.5,954.6 L1279,954.58 L1280.5,954.56 L1282,954.54 L1283.5,954.52 L1285,954.5 L1286.51,954.49 L1288.02,954.47 L1289.53,954.46 L1291.04,954.45 L1292.55,954.43 L1294.06,954.42 L1295.57,954.41 L1297.08,954.39 L1298.58,954.38 L1300.09,954.37 L1301.6,954.35 L1303.11,954.34 L1304.62,954.33 L1306.13,954.32 L1307.64,954.3 L1309.15,954.29 L1310.66,954.28 L1312.17,954.26 L1313.68,954.25 L1315.19,954.24 L1316.7,954.22 L1318.21,954.21 L1319.72,954.2 L1321.23,954.18 L1322.74,954.17 L1324.25,954.16 L1325.75,954.14 L1327.26,954.13 L1328.77,954.12 L1330.28,954.1 L1331.79,954.09 L1333.3,954.08 L1334.81,954.06 L1336.32,954.05 L1337.83,954.04 L1339.34,954.02 L1340.85,954.01 L1342.36,954 L1343.87,953.98 L1345.38,953.97 L1346.89,953.96 L1348.4,953.95 L1349.91,953.93 L1351.42,953.92 L1352.92,953.91 L1354.43,953.89 L1355.94,953.88 L1357.45,953.87 L1358.96,953.85 L1360.47,953.84 L1361.98,953.83 L1363.49,953.81 L1365,953.8 L1366.5,953.79 L1368,953.79 L1369.5,953.78 L1371,953.78 L1372.5,953.77 L1374,953.76 L1375.5,953.76 L1377,953.75 L1378.5,953.75 L1380,953.74 L1381.5,953.73 L1383,953.73 L1384.5,953.72 L1386,953.72 L1387.5,953.71 L1389,953.7 L1390.5,953.7 L1392,953.69 L1393.5,953.69 L1395,953.68 L1396.5,953.67 L1398,953.67 L1399.5,953.66 L1401,953.66 L1402.5,953.65 L1404,953.64 L1405.5,953.64 L1407,953.63 L1408.5,953.63 L1410,953.62 L1411.5,953.61 L1413,953.61 L1414.5,953.6 L1416,953.6 L1417.5,953.59 L1419,953.58 L1420.5,953.58 L1422,953.57 L1423.5,953.57 L1425,953.56 L1426.5,953.55 L1428,953.55 L1429.5,953.54 L1431,953.54 L1432.5,953.53 L1434,953.52 L1435.5,953.52 L1437,953.51 L1438.5,953.51 L1440,953.5 L1441.5,953.46 L1443,953.41 L1444.5,953.37 L1446,953.32 L1447.5,953.28 L1449,953.24 L1450.5,953.19 L1452,953.15 L1453.5,953.1 L1455,953.06 L1456.5,953.02 L1458,952.97 L1459.5,952.93 L1461,952.88 L1462.5,952.84 L1464,952.8 L1465.5,952.75 L1467,952.71 L1468.5,952.66 L1470,952.62 L1471.5,952.58 L1473,952.53 L1474.5,952.49 L1476,952.44 L1477.5,952.4 L1479,952.36 L1480.5,952.31 L1482,952.27 L1483.5,952.22 L1485,952.18 L1486.5,952.14 L1488,952.09 L1489.5,952.05 L1491,952 L1492.5,951.96 L1494,951.92 L1495.5,951.87 L1497,951.83 L1498.5,951.78 L1500,951.74 L1501.5,951.7 L1503,951.65 L1504.5,951.61 L1506,951.56 L1507.5,951.52 L1509,951.48 L1510.5,951.43 L1512,951.39 L1513.5,951.34 L1515,951.3 L1516.52,951.28 L1518.03,951.26 L1519.55,951.24 L1521.06,951.22 L1522.58,951.2 L1524.09,951.18 L1525.61,951.16 L1527.12,951.14 L1528.64,951.12 L1530.15,951.1 L1531.67,951.08 L1533.18,951.06 L1534.7,951.04 L1536.21,951.02 L1537.73,951 L1539.24,950.98 L1540.76,950.97 L1542.27,950.95 L1543.79,950.93 L1545.3,950.91 L1546.82,950.89 L1548.33,950.87 L1549.85,950.85 L1551.36,950.83 L1552.88,950.81 L1554.39,950.79 L1555.91,950.77 L1557.42,950.75 L1558.94,950.73 L1560.45,950.71 L1561.97,950.69 L1563.48,950.67 L1565,950.65 L1566.52,950.63 L1568.03,950.61 L1569.55,950.59 L1571.06,950.57 L1572.58,950.55 L1574.09,950.53 L1575.61,950.51 L1577.12,950.49 L1578.64,950.47 L1580.15,950.45 L1581.67,950.43 L1583.18,950.41 L1584.7,950.39 L1586.21,950.37 L1587.73,950.35 L1589.24,950.33 L1590.76,950.32 L1592.27,950.3 L1593.79,950.28 L1595.3,950.26 L1596.82,950.24 L1598.33,950.22 L1599.85,950.2 L1601.36,950.18 L1602.88,950.16 L1604.39,950.14 L1605.91,950.12 L1607.42,950.1 L1608.94,950.08 L1610.45,950.06 L1611.97,950.04 L1613.48,950.02 L1615,950 L1616.51,949.96 L1618.01,949.92 L1619.52,949.88 L1621.03,949.84 L1622.53,949.79 L1624.04,949.75 L1625.55,949.71 L1627.05,949.67 L1628.56,949.63 L1630.07,949.59 L1631.58,949.55 L1633.08,949.51 L1634.59,949.47 L1636.1,949.42 L1637.6,949.38 L1639.11,949.34 L1640.62,949.3 L1642.12,949.26 L1643.63,949.22 L1645.14,949.18 L1646.64,949.14 L1648.15,949.1 L1649.66,949.05 L1651.16,949.01 L1652.67,948.97 L1654.18,948.93 L1655.68,948.89 L1657.19,948.85 L1658.7,948.81 L1660.21,948.77 L1661.71,948.73 L1663.22,948.68 L1664.73,948.64 L1666.23,948.6 L1667.74,948.56 L1669.25,948.52 L1670.75,948.48 L1672.26,948.44 L1673.77,948.4 L1675.27,948.36 L1676.78,948.32 L1678.29,948.27 L1679.79,948.23 L1681.3,948.19 L1682.81,948.15 L1684.32,948.11 L1685.82,948.07 L1687.33,948.03 L1688.84,947.99 L1690.34,947.95 L1691.85,947.9 L1693.36,947.86 L1694.86,947.82 L1696.37,947.78 L1697.88,947.74 L1699.38,947.7 L1700.89,947.66 L1702.4,947.62 L1703.9,947.58 L1705.41,947.53 L1706.92,947.49 L1708.42,947.45 L1709.93,947.41 L1711.44,947.37 L1712.95,947.33 L1714.45,947.29 L1715.96,947.25 L1717.47,947.21 L1718.97,947.16 L1720.48,947.12 L1721.99,947.08 L1723.49,947.04 L1725,947 L1726.53,947 L1728.06,947 L1729.59,947 L1731.12,947 L1732.65,947 L1734.18,947 L1735.71,947 L1737.24,947 L1738.76,947 L1740.29,947 L1741.82,947 L1743.35,947 L1744.88,947 L1746.41,947 L1747.94,947 L1749.47,947 L1751,947" fill="none" stroke="#7a36a6" stroke-width="1.3" shape-rendering="crispEdges"/>
<path d="M3,430.4 L5.06,430.4 L7.12,430.4 L9.19,430.4 L11.25,430.4 L13.31,430.4 L15.38,430.4 L17.44,430.4 L19.5,430.4 L21.56,430.4 L23.62,430.4 L25.69,430.4 L27.75,430.4 L29.81,430.4 L31.88,430.4 L33.94,430.4 L36,430.4 L38,428.8 L40,430.4 L42.14,430.4 L44.29,430.4 L46.43,430.4 L48.57,430.4 L50.71,430.4 L52.86,430.4 L55,430.4 L56,428.8 L58,430.4 L60.02,430.4 L62.04,430.4 L64.07,430.4 L66.09,430.4 L68.11,430.4 L70.13,430.4 L72.15,430.4 L74.17,430.4 L76.2,430.4 L78.22,430.4 L80.24,430.4 L82.26,430.4 L84.28,430.4 L86.3,430.4 L88.33,430.4 L90.35,430.4 L92.37,430.4 L94.39,430.4 L96.41,430.4 L98.43,430.4 L100.46,430.4 L102.48,430.4 L104.5,430.4 L106.52,430.4 L108.54,430.4 L110.57,430.4 L112.59,430.4 L114.61,430.4 L116.63,430.4 L118.65,430.4 L120.67,430.4 L122.7,430.4 L124.72,430.4 L126.74,430.4 L128.76,430.4 L130.78,430.4 L132.8,430.4 L134.83,430.4 L136.85,430.4 L138.87,430.4 L140.89,430.4 L142.91,430.4 L144.93,430.4 L146.96,430.4 L148.98,430.4 L151,430.4 L153.02,430.4 L155.04,430.4 L157.07,430.4 L159.09,430.4 L161.11,430.4 L163.13,430.4 L165.15,430.4 L167.17,430.4 L169.2,430.4 L171.22,430.4 L173.24,430.4 L175.26,430.4 L177.28,430.4 L179.3,430.4 L181.33,430.4 L183.35,430.4 L185.37,430.4 L187.39,430.4 L189.41,430.4 L191.43,430.4 L193.46,430.4 L195.48,430.4 L197.5,430.4 L199.64,429.63 L201.79,428.92 L203.93,428.21 L206.07,427.46 L208.21,426.76 L210.36,425.89 L212.5,425.21 L214.69,423.68 L216.88,422.81 L219.06,421.96 L221.25,420.72 L223.44,419.76 L225.62,418.28 L227.81,417.37 L230,416.17 L232,415.27 L234,414.24 L236,412.91 L238,411.96 L240,410.94 L242,410.21 L244,409.08 L246,407.73 L248,407 L250,405.62 L252.08,405.64 L254.17,405.18 L256.25,404.9 L258.33,405.12 L260.42,404.57 L262.5,404.36 L264.58,404.82 L266.67,404.85 L268.75,404.64 L270.83,405.06 L272.92,404.94 L275,405.09 L277.08,405.13 L279.17,405.77 L281.25,405.92 L283.33,406.33 L285.42,406.57 L287.5,406.55 L289.58,406.86 L291.67,407.03 L293.75,407.3 L295.83,407.53 L297.92,407.93 L300,408.35 L302.08,408.3 L304.17,408.89 L306.25,408.97 L308.33,409.2 L310.42,409.71 L312.5,409.79 L314.58,409.96 L316.67,410.29 L318.75,410.65 L320.83,410.58 L322.92,411.29 L325,411.06 L327,411.56 L329,411.74 L331,411.46 L333,411.98 L335,411.9 L337,412.14 L339,411.99 L341,412.14 L343,412.34 L345,412.86 L347,412.61 L349,413.03 L351,413.25 L353,413.39 L355,413.22 L357.02,413.22 L359.05,413.3 L361.07,413.42 L363.1,413.08 L365.12,413.39 L367.14,413.41 L369.17,413.43 L371.19,413.01 L373.21,413.46 L375.24,413.02 L377.26,413.14 L379.29,413.27 L381.31,413.42 L383.33,413.12 L385.36,413.4 L387.38,413.21 L389.4,413.08 L391.43,413.08 L393.45,413 L395.48,412.95 L397.5,412.97 L399.52,413.24 L401.55,413.38 L403.57,412.96 L405.6,412.9 L407.62,413.36 L409.64,413.12 L411.67,413.05 L413.69,412.96 L415.71,413.13 L417.74,413.24 L419.76,413.05 L421.79,413.03 L423.81,412.83 L425.83,413.26 L427.86,412.81 L429.88,413.03 L431.9,413.2 L433.93,412.84 L435.95,413.13 L437.98,413.23 L440,413.07 L442.06,413.04 L444.12,412.6 L446.18,412.67 L448.24,412.42 L450.29,412.67 L452.35,412.3 L454.41,412.28 L456.47,412.45 L458.53,412.28 L460.59,412.24 L462.65,411.88 L464.71,411.79 L466.76,411.81 L468.82,411.59 L470.88,411.4 L472.94,411.35 L475,411.12 L477.08,411.13 L479.17,411.33 L481.25,411.2 L483.33,410.93 L485.42,410.76 L487.5,410.57 L489.58,410.34 L491.67,410.32 L493.75,410.47 L495.83,410.4 L497.92,410.04 L500,410.14 L502.08,410.1 L504.17,410.02 L506.25,409.97 L508.33,409.97 L510.42,409.74 L512.5,409.87 L514.58,409.62 L516.67,409.68 L518.75,409.78 L520.83,409.71 L522.92,409.47 L525,409.76 L527.08,409.57 L529.17,409.5 L531.25,409.17 L533.33,409.4 L535.42,409.21 L537.5,409.39 L539.55,409.29 L541.59,409.47 L543.64,409.39 L545.68,409.47 L547.73,409.25 L549.77,409.41 L551.82,409.46 L553.86,409.51 L555.91,409.28 L557.95,409.53 L560,409.55 L562.05,409.47 L564.09,409.62 L566.14,409.61 L568.18,409.4 L570.23,409.41 L572.27,409.24 L574.32,409.58 L576.36,409.63 L578.41,409.41 L580.45,409.52 L582.5,409.54 L584.55,409.55 L586.59,409.28 L588.64,409.59 L590.68,409.5 L592.73,409.55 L594.77,409.43 L596.82,409.54 L598.86,409.62 L600.91,409.56 L602.95,409.6 L605,409.26 L607,409.3 L609,409.4 L611,409.47 L613,409.22 L615,409.42 L617,409.36 L619,409.03 L621,409.21 L623,409.05 L625,408.93 L627,408.94 L629,409 L631,408.9 L633,408.87 L635,408.75 L637,408.93 L639,408.86 L641,408.94 L643,408.89 L645,408.68 L647,408.98 L649,408.5 L651,408.66 L653,408.57 L655,408.6 L657,408.42 L659,408.74 L661,408.48 L663,408.27 L665,408.53 L667,408.23 L669,408.43 L671,408.29 L673,408.37 L675,408.53 L677,408.41 L679,408.15 L681,408.3 L683,408.16 L685,407.97 L687,407.8 L689,407.97 L691,407.91 L693,408.05 L695,408 L697,407.77 L699,407.59 L701,407.8 L703,407.3 L705,407.3 L707.08,407.45 L709.17,407.39 L711.25,407.07 L713.33,407.23 L715.42,407.28 L717.5,406.94 L719.58,406.88 L721.67,406.7 L723.75,406.65 L725.83,406.9 L727.92,406.52 L730,406.73 L732.04,406.69 L734.07,406.51 L736.11,406.32 L738.15,406.67 L740.19,406.41 L742.22,406.35 L744.26,406.28 L746.3,406.59 L748.33,406.33 L750.37,406.21 L752.41,406.28 L754.44,406.09 L756.48,406.32 L758.52,406.21 L760.56,406.12 L762.59,406.34 L764.63,406.35 L766.67,405.92 L768.7,406.16 L770.74,406.02 L772.78,406.33 L774.81,406.23 L776.85,405.95 L778.89,405.94 L780.93,405.86 L782.96,406.26 L785,405.9 L787.5,404.8 L790,403.49 L792,403.62 L794,403.65 L796,403.77 L798,403.51 L800,403.88 L802,403.7 L804,403.87 L806,403.82 L808,403.85 L810,404.01 L812.06,404.1 L814.12,404.17 L816.18,404.48 L818.24,404.52 L820.29,404.36 L822.35,404.58 L824.41,404.8 L826.47,405.15 L828.53,405.25 L830.59,405.2 L832.65,405.05 L834.71,405.55 L836.76,405.49 L838.82,405.68 L840.88,405.87 L842.94,405.95 L845,405.99 L847.05,406.39 L849.09,406.31 L851.14,406.49 L853.18,406.9 L855.23,406.76 L857.27,406.99 L859.32,407.44 L861.36,407.24 L863.41,407.8 L865.45,407.92 L867.5,407.97 L869.58,407.89 L871.67,408.14 L873.75,408.21 L875.83,407.82 L877.92,407.99 L880,408.02 L882.08,408 L884.17,407.92 L886.25,407.83 L888.33,408.04 L890.42,408.16 L892.5,407.78 L894.58,407.87 L896.67,408.16 L898.75,408.15 L900.83,408.08 L902.92,407.76 L905,408.11 L907,408.44 L909,408.65 L911,408.7 L913,408.57 L915,409.17 L917,409.06 L919,409.47 L921,409.83 L923,409.91 L925,409.82 L927.5,409.9 L930,410.21 L933.8,402.82 L935.87,403.72 L937.93,404.29 L940,404.83 L942.5,407.73 L945,410.11 L947.5,412.8 L949.58,414.04 L951.67,414.99 L953.75,416.08 L955.83,417.44 L957.92,418.62 L960,419.79 L962.14,419.9 L964.29,420.54 L966.43,420.96 L968.57,421.59 L970.71,422.02 L972.86,422.73 L975,422.94 L977.14,423.21 L979.29,423.96 L981.43,424.11 L983.57,424.78 L985.71,425.15 L987.86,425.78 L990,426.03 L992.14,426.35 L994.29,426.45 L996.43,426.88 L998.57,427.02 L1000.71,427.55 L1002.86,427.72 L1005,427.82 L1007.14,428.05 L1009.29,428.31 L1011.43,428.68 L1013.57,428.58 L1015.71,429.04 L1017.86,429.19 L1020,429.09 L1022.02,429.34 L1024.04,429.38 L1026.06,429.43 L1028.08,429.47 L1030.1,429.51 L1032.12,429.55 L1034.13,429.6 L1036.15,429.64 L1038.17,429.68 L1040.19,429.72 L1042.21,429.77 L1044.23,429.81 L1046.25,429.85 L1048.27,429.89 L1050.29,429.93 L1052.31,429.98 L1054.33,430.02 L1056.35,430.06 L1058.37,430.1 L1060.38,430.15 L1062.4,430.19 L1064.42,430.23 L1066.44,430.27 L1068.46,430.32 L1070.48,430.36 L1072.5,430.4 L1074.52,430.4 L1076.55,430.4 L1078.57,430.4 L1080.59,430.4 L1082.62,430.4 L1084.64,430.4 L1086.66,430.4 L1088.69,430.4 L1090.71,430.4 L1092.73,430.4 L1094.76,430.4 L1096.78,430.4 L1098.8,430.4 L1100.83,430.4 L1102.85,430.4 L1104.88,430.4 L1106.9,430.4 L1108.92,430.4 L1110.95,430.4 L1112.97,430.4 L1114.99,430.4 L1117.02,430.4 L1119.04,430.4 L1121.06,430.4 L1123.09,430.4 L1125.11,430.4 L1127.13,430.4 L1129.16,430.4 L1131.18,430.4 L1133.2,430.4 L1135.23,430.4 L1137.25,430.4 L1139.27,430.4 L1141.3,430.4 L1143.32,430.4 L1145.34,430.4 L1147.37,430.4 L1149.39,430.4 L1151.41,430.4 L1153.44,430.4 L1155.46,430.4 L1157.48,430.4 L1159.51,430.4 L1161.53,430.4 L1163.55,430.4 L1165.58,430.4 L1167.6,430.4 L1169.62,430.4 L1171.65,430.4 L1173.67,430.4 L1175.7,430.4 L1177.72,430.4 L1179.74,430.4 L1181.77,430.4 L1183.79,430.4 L1185.81,430.4 L1187.84,430.4 L1189.86,430.4 L1191.88,430.4 L1193.91,430.4 L1195.93,430.4 L1197.95,430.4 L1199.98,430.4 L1202,430.4 L1204,429 L1206,430.4 L1208,430.4 L1210,430.4 L1212,430.4 L1214,430.4 L1216,430.4 L1218,430.4 L1220,430.4 L1222,430.4 L1224,430.4 L1225,429 L1226,430.4 L1228,430.4 L1230,430.4 L1232,429 L1235,430.4 L1237.01,430.4 L1239.02,430.4 L1241.03,430.4 L1243.04,430.4 L1245.05,430.4 L1247.06,430.4 L1249.07,430.4 L1251.08,430.4 L1253.09,430.4 L1255.1,430.4 L1257.11,430.4 L1259.12,430.4 L1261.13,430.4 L1263.14,430.4 L1265.15,430.4 L1267.16,430.4 L1269.17,430.4 L1271.18,430.4 L1273.19,430.4 L1275.2,430.4 L1277.21,430.4 L1279.22,430.4 L1281.23,430.4 L1283.24,430.4 L1285.25,430.4 L1287.25,430.4 L1289.26,430.4 L1291.27,430.4 L1293.28,430.4 L1295.29,430.4 L1297.3,430.4 L1299.31,430.4 L1301.32,430.4 L1303.33,430.4 L1305.34,430.4 L1307.35,430.4 L1309.36,430.4 L1311.37,430.4 L1313.38,430.4 L1315.39,430.4 L1317.4,430.4 L1319.41,430.4 L1321.42,430.4 L1323.43,430.4 L1325.44,430.4 L1327.45,430.4 L1329.46,430.4 L1331.47,430.4 L1333.48,430.4 L1335.49,430.4 L1337.5,430.4 L1339.51,430.4 L1341.52,430.4 L1343.53,430.4 L1345.54,430.4 L1347.55,430.4 L1349.56,430.4 L1351.57,430.4 L1353.58,430.4 L1355.59,430.4 L1357.6,430.4 L1359.61,430.4 L1361.62,430.4 L1363.63,430.4 L1365.64,430.4 L1367.65,430.4 L1369.66,430.4 L1371.67,430.4 L1373.68,430.4 L1375.69,430.4 L1377.7,430.4 L1379.71,430.4 L1381.72,430.4 L1383.73,430.4 L1385.74,430.4 L1387.75,430.4 L1389.75,430.4 L1391.76,430.4 L1393.77,430.4 L1395.78,430.4 L1397.79,430.4 L1399.8,430.4 L1401.81,430.4 L1403.82,430.4 L1405.83,430.4 L1407.84,430.4 L1409.85,430.4 L1411.86,430.4 L1413.87,430.4 L1415.88,430.4 L1417.89,430.4 L1419.9,430.4 L1421.91,430.4 L1423.92,430.4 L1425.93,430.4 L1427.94,430.4 L1429.95,430.4 L1431.96,430.4 L1433.97,430.4 L1435.98,430.4 L1437.99,430.4 L1440,430.4 L1442.01,430.4 L1444.01,430.4 L1446.02,430.4 L1448.03,430.4 L1450.03,430.4 L1452.04,430.4 L1454.05,430.4 L1456.05,430.4 L1458.06,430.4 L1460.06,430.4 L1462.07,430.4 L1464.08,430.4 L1466.08,430.4 L1468.09,430.4 L1470.1,430.4 L1472.1,430.4 L1474.11,430.4 L1476.12,430.4 L1478.12,430.4 L1480.13,430.4 L1482.14,430.4 L1484.14,430.4 L1486.15,430.4 L1488.15,430.4 L1490.16,430.4 L1492.17,430.4 L1494.17,430.4 L1496.18,430.4 L1498.19,430.4 L1500.19,430.4 L1502.2,430.4 L1504.21,430.4 L1506.21,430.4 L1508.22,430.4 L1510.23,430.4 L1512.23,430.4 L1514.24,430.4 L1516.25,430.4 L1518.25,430.4 L1520.26,430.4 L1522.26,430.4 L1524.27,430.4 L1526.28,430.4 L1528.28,430.4 L1530.29,430.4 L1532.3,430.4 L1534.3,430.4 L1536.31,430.4 L1538.32,430.4 L1540.32,430.4 L1542.33,430.4 L1544.34,430.4 L1546.34,430.4 L1548.35,430.4 L1550.35,430.4 L1552.36,430.4 L1554.37,430.4 L1556.37,430.4 L1558.38,430.4 L1560.39,430.4 L1562.39,430.4 L1564.4,430.4 L1566.41,430.4 L1568.41,430.4 L1570.42,430.4 L1572.43,430.4 L1574.43,430.4 L1576.44,430.4 L1578.45,430.4 L1580.45,430.4 L1582.46,430.4 L1584.46,430.4 L1586.47,430.4 L1588.48,430.4 L1590.48,430.4 L1592.49,430.4 L1594.5,430.4 L1596.5,430.4 L1598.51,430.4 L1600.52,430.4 L1602.52,430.4 L1604.53,430.4 L1606.54,430.4 L1608.54,430.4 L1610.55,430.4 L1612.55,430.4 L1614.56,430.4 L1616.57,430.4 L1618.57,430.4 L1620.58,430.4 L1622.59,430.4 L1624.59,430.4 L1626.6,430.4 L1628.61,430.4 L1630.61,430.4 L1632.62,430.4 L1634.63,430.4 L1636.63,430.4 L1638.64,430.4 L1640.65,430.4 L1642.65,430.4 L1644.66,430.4 L1646.66,430.4 L1648.67,430.4 L1650.68,430.4 L1652.68,430.4 L1654.69,430.4 L1656.7,430.4 L1658.7,430.4 L1660.71,430.4 L1662.72,430.4 L1664.72,430.4 L1666.73,430.4 L1668.74,430.4 L1670.74,430.4 L1672.75,430.4 L1674.75,430.4 L1676.76,430.4 L1678.77,430.4 L1680.77,430.4 L1682.78,430.4 L1684.79,430.4 L1686.79,430.4 L1688.8,430.4 L1690.81,430.4 L1692.81,430.4 L1694.82,430.4 L1696.83,430.4 L1698.83,430.4 L1700.84,430.4 L1702.85,430.4 L1704.85,430.4 L1706.86,430.4 L1708.86,430.4 L1710.87,430.4 L1712.88,430.4 L1714.88,430.4 L1716.89,430.4 L1718.9,430.4 L1720.9,430.4 L1722.91,430.4 L1724.92,430.4 L1726.92,430.4 L1728.93,430.4 L1730.94,430.4 L1732.94,430.4 L1734.95,430.4 L1736.95,430.4 L1738.96,430.4 L1740.97,430.4 L1742.97,430.4 L1744.98,430.4 L1746.99,430.4 L1748.99,430.4 L1751,430.4" fill="none" stroke="#8fcf3a" stroke-width="1.2" shape-rendering="crispEdges"/>
<path d="M3,265.4 L4.53,265.4 L6.06,265.4 L7.59,265.4 L9.12,265.4 L10.65,265.4 L12.18,265.4 L13.71,265.4 L15.24,265.4 L16.76,265.4 L18.29,265.4 L19.82,265.4 L21.35,265.4 L22.88,265.4 L24.41,265.4 L25.94,265.4 L27.47,265.4 L29,265.4 L30.53,265.4 L32.06,265.4 L33.59,265.4 L35.12,265.4 L36.65,265.4 L38.18,265.4 L39.71,265.4 L41.24,265.4 L42.76,265.4 L44.29,265.4 L45.82,265.4 L47.35,265.4 L48.88,265.4 L50.41,265.4 L51.94,265.4 L53.47,265.4 L55,265.4 L56,262.5 L57,267.5 L59,265 L61,266.5 L63,265 L63.75,268.5 L64,256.3 L66,255.5 L68,254.25 L70,253 L71.5,252.16 L73,251.32 L74.5,250.48 L76,249.64 L77.5,248.8 L79,247.54 L80.5,246.28 L82,245.02 L83.5,243.76 L85,242.5 L86.76,241.46 L88.52,240.42 L90.28,239.38 L92.04,238.34 L93.8,237.3 L95.54,236.34 L97.28,235.38 L99.02,234.42 L100.76,233.46 L102.5,232.5 L104.06,231.94 L105.62,231.38 L107.19,230.81 L108.75,230.25 L110.31,229.69 L111.88,229.12 L113.44,228.56 L115,228 L116.56,227.6 L118.12,227.2 L119.69,226.8 L121.25,226.4 L122.81,226 L124.38,225.6 L125.94,225.2 L127.5,224.8 L129.04,224.45 L130.58,224.1 L132.12,223.75 L133.67,223.4 L135.21,223.05 L136.75,222.7 L138.29,222.35 L139.83,222 L141.38,221.65 L142.92,221.3 L144.46,220.95 L146,220.6 L147.58,220.39 L149.17,220.18 L150.75,219.97 L152.33,219.77 L153.92,219.56 L155.5,219.35 L157.08,219.14 L158.67,218.93 L160.25,218.72 L161.83,218.52 L163.42,218.31 L165,218.1 L166.56,217.91 L168.12,217.72 L169.69,217.54 L171.25,217.35 L172.81,217.16 L174.38,216.97 L175.94,216.79 L177.5,216.6 L179.09,216.51 L180.68,216.42 L182.27,216.33 L183.86,216.24 L185.45,216.15 L187.05,216.05 L188.64,215.96 L190.23,215.87 L191.82,215.78 L193.41,215.69 L195,215.6 L196.9,216.05 L198.8,216.5 L200.47,218.43 L202.13,220.37 L203.8,222.3 L205.35,223.08 L206.9,223.85 L208.45,224.62 L210,225.4 L211.56,225.54 L213.12,225.68 L214.69,225.81 L216.25,225.95 L217.81,226.09 L219.38,226.22 L220.94,226.36 L222.5,226.5 L224.2,227.08 L225.9,227.66 L227.6,228.24 L229.3,228.82 L231,229.4 L232.5,229.99 L234,230.58 L235.5,231.17 L237,231.76 L238.5,232.35 L240,232.94 L241.5,233.53 L243,234.12 L244.5,234.71 L246,235.3 L247.6,235.5 L249.2,235.7 L250.8,235.9 L252.4,236.1 L254,236.3 L255.6,236.5 L257.2,236.7 L258.8,236.9 L260.4,236.85 L262,237.12 L263.6,237.9 L265.2,237.03 L266.8,237.17 L268.4,237.37 L270,236.62 L271.57,237.38 L273.14,237.72 L274.71,238.16 L276.29,236.87 L277.86,237.39 L279.43,237.07 L281,238.62 L282.55,238.09 L284.1,236.48 L285.65,238.06 L287.2,237.73 L288.75,236.81 L290.28,236.63 L291.81,235.61 L293.33,235.23 L294.86,236.16 L296.39,235.12 L297.92,235.28 L299.44,235.28 L300.97,234.76 L302.5,235.53 L304.06,236.33 L305.62,237.98 L307.19,238.19 L308.75,239.28 L310.5,238.58 L312.25,238.48 L314,237.65 L315.75,236.88 L317.5,237.9 L319,238 L320.5,237.8 L322,237.65 L323.5,236.97 L325,236.91 L326.5,237.14 L328,236.81 L329.5,238.31 L331,237.69 L332.5,238.69 L334.17,237.41 L335.83,238.18 L337.5,237.59 L339.17,235.68 L340.83,235.89 L342.5,237.07 L344.17,235.97 L345.83,236.78 L347.5,235.39 L349.17,234.46 L350.83,235.29 L352.5,235.31 L354.17,235.01 L355.83,235.36 L357.5,236.57 L359.17,238.53 L360.83,238.82 L362.5,238.24 L363.75,235.09 L365.42,236.27 L367.08,237.65 L368.75,240.59 L370.56,238.36 L372.38,238.12 L374.19,236.89 L376,235.38 L377.59,236.34 L379.19,235.01 L380.78,235.91 L382.38,234.73 L383.97,235.22 L385.56,234.68 L387.16,234.66 L388.75,235.94 L391,226.21 L393,225.86 L395,227.67 L396.88,230.07 L398.75,234.19 L400.31,235.41 L401.88,235.28 L403.44,234.5 L405,236.58 L406.5,234.63 L408,234.32 L409.5,234.95 L411,233.66 L412.5,234.08 L414,234.11 L415.5,234.63 L417,236.1 L418.5,235.9 L420,237.1 L421.5,235.92 L423,235.36 L424.5,235.64 L426,233.97 L427.62,234.4 L429.25,235.23 L430.88,234.12 L432.5,234.31 L434.17,235.65 L435.83,235.3 L437.5,234 L439.17,233.71 L440.83,234.65 L442.5,234.88 L444,233.39 L445.5,234.9 L447,234.76 L448.5,234.21 L450,233.84 L451.5,233.21 L453,233.08 L454.5,234.93 L456,233.48 L457.5,233.95 L459,232.6 L460.5,233.27 L462,232.36 L463.5,231.3 L465,230.6 L466.5,231.38 L468,229.76 L469.5,229.77 L471,230.12 L472.64,230.88 L474.29,230.59 L475.93,230.1 L477.57,231.55 L479.21,230.3 L480.86,230.1 L482.5,230.79 L484,231.1 L485.5,230.28 L487,230.47 L488.5,230.81 L490,231.18 L491.5,230.25 L493,230.67 L494.5,231.69 L496,231.82 L497.5,231.13 L499,231.16 L500.5,230.9 L502,229.97 L503.5,229.71 L505,229.64 L506.67,232.89 L508.33,233.94 L510,235.93 L511.88,234.04 L513.75,235.27 L516,233.46 L517.62,233.49 L519.25,232.19 L520.88,233.07 L522.5,230.75 L524.06,232.39 L525.62,233.47 L527.19,234.5 L528.75,234.87 L530.42,233.97 L532.08,233.32 L533.75,232.73 L535.56,231.44 L537.38,231.95 L539.19,232.21 L541,231.99 L542.55,231.71 L544.1,233.09 L545.65,233.87 L547.2,233.92 L548.75,234.65 L550.42,233.33 L552.08,232.9 L553.75,232.12 L555.5,231.06 L557.25,232.18 L559,232.89 L560.75,232.66 L562.5,232.36 L564,231.05 L565.5,231.11 L567,230.17 L568.5,229.26 L570,229.43 L571.67,228.75 L573.33,230.92 L575,230.31 L576.67,231.87 L578.33,232.05 L580,231.96 L581.5,233.02 L583,232.73 L584.5,233.09 L586,233.82 L587.5,232.61 L589.06,232.16 L590.62,232.78 L592.19,233.57 L593.75,232.66 L595.31,232.63 L596.88,234.14 L598.44,233.68 L600,233.28 L601.9,234.78 L603.4,233.47 L604.9,233.97 L606.4,232.86 L607.9,233.14 L609.4,233.71 L610,233.33 L611.55,235.14 L613.1,236.02 L615,235.47 L616.55,234.63 L618.1,233.97 L619.83,234.62 L621.55,235.22 L623.27,235.17 L625,234.82 L626.55,237.3 L628.1,237.95 L630.6,238.74 L633.1,238.3 L633.75,238.95 L635,235.68 L637.5,234.23 L640,234.65 L641.55,237.19 L643.1,239.63 L644.67,239.58 L646.25,238.76 L648.1,239.9 L650,236.95 L652.5,234.36 L654.4,237.95 L656.25,234.68 L658.1,234.42 L660.6,233.54 L662.5,235.22 L664.4,240.88 L665.6,239.04 L667.27,237.61 L668.93,236.58 L670.6,234.05 L673.1,235.36 L675,237.77 L676.9,241.18 L678.45,238.34 L680,236.86 L681.9,234.59 L683.45,234.96 L685,235.01 L686.9,239.01 L689.4,237.82 L691.25,238.32 L693.1,238.4 L694.67,237.1 L696.25,234.66 L698.12,234.02 L700,234.64 L702.5,240.43 L704.38,237.16 L706.25,235.14 L708.75,241.59 L710,236.29 L712.5,231.94 L714.7,231.48 L716.9,231.11 L718.45,232.59 L720,235.58 L721.67,236.23 L723.33,235.01 L725,237.12 L726.5,237.01 L728,236.13 L729.5,237.09 L731,237.75 L732.62,237.54 L734.25,235.7 L735.88,235.31 L737.5,235.16 L740,239.34 L741.67,238.72 L743.33,236.84 L745,236.3 L746.67,236.74 L748.33,239.11 L750,240.64 L751.5,239.28 L753,238.44 L754.5,236.43 L756,236.8 L757.62,238.21 L759.25,239.45 L760.88,239.82 L762.5,241.58 L764,239.44 L765.5,239.42 L767,238.11 L768.5,235.9 L770,234.17 L771.67,236.88 L773.33,239.1 L775,241.54 L776.5,239.97 L778,238.06 L779.5,238.62 L781,236.13 L782.5,236.6 L785,249.95 L787.5,227.17 L790,241.18 L791,226.28 L793,225.8 L795,226.03 L797.5,232.95 L800,227.68 L802.5,226.38 L804.06,227.27 L805.62,226.74 L807.19,228.02 L808.75,226.67 L810.6,233.84 L812.8,234.75 L815,234.58 L816.5,236.21 L818,236.78 L819.5,237.3 L821,238.69 L823,236.12 L825,233.62 L826.88,236.76 L828.75,240.69 L830.31,240.05 L831.88,237.92 L833.44,238.45 L835,237.94 L836.57,236.98 L838.14,237 L839.71,236.19 L841.29,236.79 L842.86,236.65 L844.43,236.78 L846,235.56 L848,239.19 L850,240.03 L851.5,239.3 L853,239.6 L854.5,238.63 L856,237.98 L858,238.88 L860,238.13 L861.5,238.58 L863,237.83 L864.5,239.91 L866,240.85 L867.77,241.21 L869.53,243.28 L871.3,244.25 L873.15,243.87 L875,243.63 L876.5,243.15 L878,241.65 L880,242.63 L882,240.38 L883.75,239.94 L885.5,239.25 L888,240.26 L890,241.56 L891.5,238.75 L893,237.79 L894.5,238.65 L896,240.37 L898,240.14 L900,240.71 L902.5,241.24 L904,240.67 L905.5,242.38 L907,241.63 L908.5,242.86 L910,242.8 L911.93,243.83 L913.87,245.63 L915.8,246.57 L917.77,245.05 L919.73,243.73 L921.7,242.56 L923.2,241.48 L924.7,241.23 L926.2,241.74 L927.7,241.42 L929.2,240.8 L930,236.7 L930.5,123.3 L931.3,110 L932.5,116.7 L933.3,115 L934.97,122.23 L936.63,129.47 L938.3,136.7 L939.97,146.7 L941.63,156.7 L943.3,166.7 L944.97,176.7 L946.63,186.7 L948.3,196.7 L949.97,203.37 L951.63,210.03 L953.3,216.7 L954.97,221.7 L956.63,226.7 L958.3,231.7 L959.97,233.9 L961.63,236.1 L963.3,238.3 L964.97,240.18 L966.65,242.05 L968.33,243.93 L970,245.8 L971.67,246.63 L973.33,247.47 L975,248.3 L976.67,249.13 L978.33,249.97 L980,250.8 L981.67,251.16 L983.34,251.51 L985.01,251.87 L986.69,252.23 L988.36,252.59 L990.03,252.94 L991.7,253.3 L993.21,253.45 L994.72,253.61 L996.23,253.76 L997.74,253.92 L999.25,254.07 L1000.75,254.23 L1002.26,254.38 L1003.77,254.54 L1005.28,254.69 L1006.79,254.85 L1008.3,255 L1009.88,255.28 L1011.46,255.56 L1013.03,255.83 L1014.61,256.11 L1016.19,256.39 L1017.77,256.67 L1019.34,256.94 L1020.92,257.22 L1022.5,257.5 L1024,257.6 L1025.5,257.7 L1027,257.8 L1028.5,257.9 L1030,258 L1031.5,258.1 L1033,258.2 L1034.5,258.3 L1036,258.4 L1037.5,258.5 L1039,258.6 L1040.5,258.7 L1042,258.8 L1043.5,258.9 L1045,259 L1046.5,259.1 L1048,259.2 L1049.5,259.3 L1051,259.4 L1052.5,259.5 L1054,259.6 L1055.5,259.7 L1057,259.8 L1058.5,259.9 L1060,260 L1061.5,259.92 L1063,259.83 L1064.5,259.75 L1066,259.67 L1067.5,259.58 L1069,259.5 L1070.5,259.42 L1072,259.33 L1073.5,259.25 L1075,259.17 L1076.5,259.08 L1078,259 L1079.5,258.92 L1081,258.83 L1082.5,258.75 L1084,258.67 L1085.5,258.58 L1087,258.5 L1088.5,258.42 L1090,258.33 L1091.5,258.25 L1093,258.17 L1094.5,258.08 L1096,258 L1097.5,257.92 L1099,257.83 L1100.5,257.75 L1102,257.67 L1103.5,257.58 L1105,257.5 L1106.5,257.62 L1108,257.75 L1109.5,257.88 L1111,258 L1112.5,258.12 L1114,258.25 L1115.5,258.38 L1117,258.5 L1118.5,258.62 L1120,258.75 L1121.5,258.88 L1123,259 L1124.5,259.12 L1126,259.25 L1127.5,259.38 L1129,259.5 L1130.5,259.62 L1132,259.75 L1133.5,259.88 L1135,260 L1136.5,259.96 L1138,259.92 L1139.5,259.88 L1141,259.84 L1142.5,259.8 L1144,259.76 L1145.5,259.72 L1147,259.68 L1148.5,259.64 L1150,259.6 L1151.5,259.56 L1153,259.52 L1154.5,259.48 L1156,259.44 L1157.5,259.4 L1159,259.36 L1160.5,259.32 L1162,259.28 L1163.5,259.24 L1165,259.2 L1166.5,259.16 L1168,259.12 L1169.5,259.08 L1171,259.04 L1172.5,259 L1174,258.96 L1175.5,258.92 L1177,258.88 L1178.5,258.84 L1180,258.8 L1181.5,258.84 L1183,258.87 L1184.5,258.91 L1186,258.94 L1187.5,258.98 L1189,259.01 L1190.5,259.05 L1192,259.08 L1193.5,259.12 L1195,259.15 L1196.5,259.19 L1198,259.22 L1199.5,259.25 L1201,259.29 L1202.5,259.32 L1204,259.36 L1205.5,259.39 L1207,259.43 L1208.5,259.46 L1210,259.5 L1211.5,259.5 L1213,259.5 L1214.5,259.5 L1216,259.5 L1217.5,259.5 L1219,259.5 L1220.5,259.5 L1222,259.5 L1223.5,259.5 L1225,259.5 L1226.5,259.5 L1228,259.5 L1229.5,259.5 L1231,259.5 L1232.5,259.5 L1234,259.5 L1235.5,259.5 L1237,259.5 L1238.5,259.5 L1240,259.5 L1241.5,259.5 L1243,259.5 L1244.5,259.5 L1246,259.5 L1247.5,259.5 L1249,259.5 L1250.5,259.5 L1252,259.5 L1253.5,259.5 L1255,259.5 L1256.5,259.5 L1258,259.5 L1259.5,259.5 L1261,259.5 L1262.5,259.5 L1264,259.5 L1265.5,259.5 L1267,259.5 L1268.5,259.5 L1270,259.5 L1271.5,259.5 L1273,259.5 L1274.5,259.5 L1276,259.5 L1277.5,259.5 L1279,259.5 L1280.5,259.5 L1282,259.5 L1283.5,259.5 L1285,259.5 L1286.67,259.92 L1288.33,260.33 L1290,260.75 L1291.67,261.17 L1293.33,261.58 L1295,262 L1296.51,262 L1298.02,262 L1299.53,262 L1301.05,262 L1302.56,262 L1304.07,262 L1305.58,262 L1307.09,262 L1308.6,262 L1310.12,262 L1311.63,262 L1313.14,262 L1314.65,262 L1316.16,262 L1317.67,262 L1319.19,262 L1320.7,262 L1322.21,262 L1323.72,262 L1325.23,262 L1326.74,262 L1328.26,262 L1329.77,262 L1331.28,262 L1332.79,262 L1334.3,262 L1335.81,262 L1337.33,262 L1338.84,262 L1340.35,262 L1341.86,262 L1343.37,262 L1344.88,262 L1346.4,262 L1347.91,262 L1349.42,262 L1350.93,262 L1352.44,262 L1353.95,262 L1355.47,262 L1356.98,262 L1358.49,262 L1360,262 L1361.5,262.1 L1363,262.2 L1364.5,262.3 L1366,262.4 L1367.5,262.5 L1369,262.6 L1370.5,262.7 L1372,262.8 L1373.5,262.9 L1375,263 L1376.52,262.82 L1378.04,262.63 L1379.57,262.45 L1381.09,262.27 L1382.61,262.09 L1384.13,261.9 L1385.65,261.72 L1387.17,261.54 L1388.7,261.36 L1390.22,261.17 L1391.74,260.99 L1393.26,260.81 L1394.78,260.63 L1396.3,260.44 L1397.83,260.26 L1399.35,260.08 L1400.87,259.9 L1402.39,259.71 L1403.91,259.53 L1405.43,259.35 L1406.96,259.17 L1408.48,258.98 L1410,258.8 L1411.5,258.84 L1413,258.87 L1414.5,258.91 L1416,258.94 L1417.5,258.98 L1419,259.01 L1420.5,259.05 L1422,259.08 L1423.5,259.12 L1425,259.15 L1426.5,259.19 L1428,259.22 L1429.5,259.25 L1431,259.29 L1432.5,259.32 L1434,259.36 L1435.5,259.39 L1437,259.43 L1438.5,259.46 L1440,259.5 L1441.5,259.48 L1443,259.45 L1444.5,259.43 L1446,259.41 L1447.5,259.38 L1449,259.36 L1450.5,259.34 L1452,259.31 L1453.5,259.29 L1455,259.27 L1456.5,259.24 L1458,259.22 L1459.5,259.2 L1461,259.17 L1462.5,259.15 L1464,259.13 L1465.5,259.1 L1467,259.08 L1468.5,259.06 L1470,259.03 L1471.5,259.01 L1473,258.99 L1474.5,258.96 L1476,258.94 L1477.5,258.92 L1479,258.89 L1480.5,258.87 L1482,258.85 L1483.5,258.82 L1485,258.8 L1486.5,258.8 L1488,258.8 L1489.5,258.8 L1491,258.8 L1492.5,258.8 L1494,258.8 L1495.5,258.8 L1497,258.8 L1498.5,258.8 L1500,258.8 L1501.5,259 L1503,259.2 L1504.5,259.4 L1506,259.6 L1507.5,259.8 L1509,260 L1510.5,260.2 L1512,260.4 L1513.5,260.6 L1515,260.8 L1516.52,260.76 L1518.03,260.72 L1519.55,260.68 L1521.06,260.64 L1522.58,260.6 L1524.09,260.56 L1525.61,260.52 L1527.12,260.48 L1528.64,260.45 L1530.15,260.41 L1531.67,260.37 L1533.18,260.33 L1534.7,260.29 L1536.21,260.25 L1537.73,260.21 L1539.24,260.17 L1540.76,260.13 L1542.27,260.09 L1543.79,260.05 L1545.3,260.01 L1546.82,259.97 L1548.33,259.93 L1549.85,259.89 L1551.36,259.85 L1552.88,259.82 L1554.39,259.78 L1555.91,259.74 L1557.42,259.7 L1558.94,259.66 L1560.45,259.62 L1561.97,259.58 L1563.48,259.54 L1565,259.5 L1566.52,259.52 L1568.03,259.53 L1569.55,259.55 L1571.06,259.56 L1572.58,259.58 L1574.09,259.59 L1575.61,259.61 L1577.12,259.62 L1578.64,259.64 L1580.15,259.65 L1581.67,259.67 L1583.18,259.68 L1584.7,259.7 L1586.21,259.71 L1587.73,259.73 L1589.24,259.74 L1590.76,259.76 L1592.27,259.77 L1593.79,259.79 L1595.3,259.8 L1596.82,259.82 L1598.33,259.83 L1599.85,259.85 L1601.36,259.86 L1602.88,259.88 L1604.39,259.89 L1605.91,259.91 L1607.42,259.92 L1608.94,259.94 L1610.45,259.95 L1611.97,259.97 L1613.48,259.98 L1615,260 L1616.54,260.08 L1618.08,260.15 L1619.62,260.23 L1621.15,260.31 L1622.69,260.38 L1624.23,260.46 L1625.77,260.54 L1627.31,260.62 L1628.85,260.69 L1630.38,260.77 L1631.92,260.85 L1633.46,260.92 L1635,261 L1636.51,261.01 L1638.01,261.03 L1639.52,261.04 L1641.03,261.05 L1642.53,261.06 L1644.04,261.08 L1645.55,261.09 L1647.05,261.1 L1648.56,261.12 L1650.06,261.13 L1651.57,261.14 L1653.08,261.16 L1654.58,261.17 L1656.09,261.18 L1657.6,261.19 L1659.1,261.21 L1660.61,261.22 L1662.12,261.23 L1663.62,261.25 L1665.13,261.26 L1666.64,261.27 L1668.14,261.29 L1669.65,261.3 L1671.16,261.31 L1672.66,261.32 L1674.17,261.34 L1675.68,261.35 L1677.18,261.36 L1678.69,261.38 L1680.19,261.39 L1681.7,261.4 L1683.21,261.42 L1684.71,261.43 L1686.22,261.44 L1687.73,261.45 L1689.23,261.47 L1690.74,261.48 L1692.25,261.49 L1693.75,261.51 L1695.26,261.52 L1696.77,261.53 L1698.27,261.55 L1699.78,261.56 L1701.29,261.57 L1702.79,261.58 L1704.3,261.6 L1705.81,261.61 L1707.31,261.62 L1708.82,261.64 L1710.32,261.65 L1711.83,261.66 L1713.34,261.68 L1714.84,261.69 L1716.35,261.7 L1717.86,261.71 L1719.36,261.73 L1720.87,261.74 L1722.38,261.75 L1723.88,261.77 L1725.39,261.78 L1726.9,261.79 L1728.4,261.81 L1729.91,261.82 L1731.42,261.83 L1732.92,261.84 L1734.43,261.86 L1735.94,261.87 L1737.44,261.88 L1738.95,261.9 L1740.45,261.91 L1741.96,261.92 L1743.47,261.94 L1744.97,261.95 L1746.48,261.96 L1747.99,261.97 L1749.49,261.99 L1751,262" fill="none" stroke="#f2e61a" stroke-width="1.5" shape-rendering="crispEdges"/>
<path d="M8.5,162.1 L77.5,162.1 L83.3,174.5 L77.5,186.9 L8.5,186.9 Q7,186.9 7,185.4 L7,163.6 Q7,162.1 8.5,162.1 Z" fill="#1f1d08" stroke="#f0e41c" stroke-width="1.8"/>
<line x1="33" y1="162.1" x2="33" y2="186.9" stroke="#f0e41c" stroke-width="1.8"/>
<path d="M8.5,395.8 L77.5,395.8 L83.3,408.2 L77.5,420.59999999999997 L8.5,420.59999999999997 Q7,420.59999999999997 7,419.09999999999997 L7,397.3 Q7,395.8 8.5,395.8 Z" fill="#18200c" stroke="#8cc63c" stroke-width="1.8"/>
<line x1="33" y1="395.8" x2="33" y2="420.59999999999997" stroke="#8cc63c" stroke-width="1.8"/>
<path d="M8.5,722.8 L34,722.8 L42.3,735.2 L34,747.6 L8.5,747.6 Q7,747.6 7,746 L7,724.4 Q7,722.8 8.5,722.8 Z" fill="#241608" stroke="#ee9430" stroke-width="1.5"/>
<line x1="42.3" y1="735.2" x2="55" y2="735.2" stroke="#ee9430" stroke-width="1.3"/>
<path d="M8.5,949.5 L34,949.5 L42.3,962 L34,974.8 L8.5,974.8 Q7,974.8 7,973.2 L7,951 Q7,949.5 8.5,949.5 Z" fill="#6f2d8e"/>
<line x1="42.3" y1="962" x2="55" y2="962" stroke="#7a36a6" stroke-width="1.3" shape-rendering="crispEdges"/>
<path d="M45.5,58 L65,58 L55.2,67.2 Z" fill="#f08a24"/>
<path d="M46.3,68.8 L64.2,68.8 L64.2,88.5 L58.8,88.5 L55.2,95 L51.7,88.5 L46.3,88.5 Z" fill="#000" stroke="#f08a24" stroke-width="2"/>
<text x="55.3" y="84" text-anchor="middle" fill="#f08a24" font-size="14.5" font-weight="700">T</text>
</g></svg>
<div class="a" style="left:1760px;top:501.5px;width:4px;height:4.5px;border-radius:2px;background:#c8c8c8"></div>
<div class="a" style="left:1760px;top:510px;width:4px;height:4.5px;border-radius:2px;background:#c8c8c8"></div>
<div class="a" style="left:1760px;top:518.5px;width:4px;height:4.5px;border-radius:2px;background:#c8c8c8"></div>
<div class="a" style="left:1769.3px;top:29.3px;width:160px;height:966.5px;border-left:1px solid #585858;border-top:1px solid #5e5650;border-bottom:1px solid #5e5650"></div>
<div class="btn" style="left:1778px;top:53.8px"></div>
<div class="btn" style="left:1850px;top:53.8px"></div>
<div class="btn" style="left:1778px;top:99.8px"></div>
<div class="btn" style="left:1850px;top:99.8px"></div>
<div class="btn" style="left:1778px;top:146px"></div>
<div class="btn" style="left:1850px;top:146px"></div>
<div class="a" style="left:1773px;top:189px;width:144px;height:1px;background:#5e564e"></div>
<div class="btn" style="left:1778px;top:196px"></div>
<div class="btn" style="left:1850px;top:196px"></div>
<svg class="a" style="left:1794px;top:200px" width="32" height="30" viewBox="0 0 32 30"><rect x="4" y="2.9" width="22.4" height="19" fill="none" stroke="#c4c4c4" stroke-width="1.8" stroke-dasharray="2.8,2.6"/><circle cx="16.8" cy="10.5" r="4.3" fill="none" stroke="#c4c4c4" stroke-width="1.8"/><line x1="13.6" y1="13.7" x2="9.6" y2="17.4" stroke="#c4c4c4" stroke-width="2.6" stroke-linecap="round"/><path d="M21,16.6 L28.6,22 L25.6,22.6 L27.8,26 L26.2,27 L24,23.6 L22,26 Z" fill="#c4c4c4"/></svg>
<div class="a" style="left:1773px;top:241px;width:144px;height:1px;background:#5e564e"></div>
<div class="a" style="left:3px;top:1003px;width:90px;height:75.5px;border-radius:5px;overflow:hidden;background:#cbcbcb"><div style="height:18.7px;background:#4b4420"></div><div style="height:2px;background:#a9a9a9"></div></div>
<div class="a" style="left:98px;top:1003px;width:90px;height:75.5px;border-radius:5px;overflow:hidden;background:#8b8b8b"><div style="height:18.7px;background:#247f7f"></div><div style="height:2px;background:#6e6e6e"></div></div>
<div class="a" style="left:193px;top:1003px;width:90px;height:75.5px;border-radius:5px;overflow:hidden;background:#8b8b8b"><div style="height:18.7px;background:#8c3a48"></div><div style="height:2px;background:#6e6e6e"></div></div>
<div class="a" style="left:288px;top:1003px;width:90px;height:75.5px;border-radius:5px;overflow:hidden;background:#cbcbcb"><div style="height:18.7px;background:#384720"></div><div style="height:2px;background:#a9a9a9"></div></div>
<div class="a" style="left:383px;top:1003px;width:90px;height:75.5px;border-radius:5px;overflow:hidden;background:#cbcbcb"><div style="height:18.7px;background:#4c3119"></div><div style="height:2px;background:#a9a9a9"></div></div>
<div class="a" style="left:478px;top:1003px;width:90px;height:75.5px;border-radius:5px;overflow:hidden;background:#cbcbcb"><div style="height:18.7px;background:#6f2c90"></div><div style="height:2px;background:#a9a9a9"></div></div>
<div class="tb" style="left:1023.2px"><div class="ln" style="background:#f6982e"></div></div>
<div class="tb" style="left:1068.2px"><div class="ln" style="background:#2222d6"></div></div>
<div class="vs" style="left:1118px"></div>
<div class="tb" style="left:1129.3px"><div class="ln" style="background:#b32a30"></div></div>
<div class="tb" style="left:1174.3px"><div class="ln" style="background:#cfcfd6"></div></div>
<div class="tb" style="left:1219.3px"><div class="ln" style="background:#b462e6"></div></div>
<div class="vs" style="left:1269px"></div>
<div class="pn" style="left:1280.5px;width:199px"><div class="h"></div><div class="s"></div></div>
<div class="pn" style="left:1485px;width:159.5px"><div class="h"></div><div class="s"></div></div>
<div class="a" style="left:1490.6px;top:1025.2px;width:29px;height:15.2px;background:#2424c4;border:1px solid #111;border-radius:5px"></div>
<svg class="a" style="left:1528px;top:1025px" width="22" height="15"><path d="M1.5,12.5 L5.5,12.5 L12.5,3 L17.5,3" fill="none" stroke="#3434b0" stroke-width="1.3"/></svg>
<div class="pn" style="left:1650.5px;width:149px"><div class="h"></div><div class="s"></div></div>
<svg class="a" style="left:1390px;top:1062px" width="12" height="15"><path d="M1.5,1.5 L10,1.5 L10,10.8 L7.2,10.8 L5.7,13.5 L4.3,10.8 L1.5,10.8 Z" fill="#000" stroke="#f08a24" stroke-width="1.6"/><path d="M3.4,4 L8.2,4 M5.8,4 L5.8,9" stroke="#fff" stroke-width="1.5"/></svg>
<div class="vs" style="left:1811px"></div>
<div class="a" style="left:1822.5px;top:999.4px;width:89.2px;height:35.2px;border-radius:6px;background:#ff1e27;border:1px solid #707070"></div>
<div class="a" style="left:1822.5px;top:1040.4px;width:89.2px;height:38px;border-radius:4px;background:#c9c9c9"></div>
<svg class="a" style="left:0;top:0;will-change:transform" width="1920" height="1080" font-family='"Liberation Sans", sans-serif'>
<path d="M1710,65.2 L1740.5,65.2 Q1744,65.2 1744,68.7 L1744,98.5 Z" fill="#575757"/><circle cx="1737.1" cy="71.6" r="3.6" fill="none" stroke="#a9a9a9" stroke-width="1.6"/><line x1="1734.4" y1="74.5" x2="1728.6" y2="80" stroke="#a9a9a9" stroke-width="2.6" stroke-linecap="round"/>
<text x="55.84" y="987.1" font-size="13.2" fill="#bdbdbd" text-anchor="middle">0 s</text>
<text x="230.64" y="987.1" font-size="13.2" fill="#bdbdbd" text-anchor="middle">4.5 ms</text>
<text x="405.44" y="987.1" font-size="13.2" fill="#bdbdbd" text-anchor="middle">9 ms</text>
<text x="580.24" y="987.1" font-size="13.2" fill="#bdbdbd" text-anchor="middle">13.5 ms</text>
<text x="755.04" y="987.1" font-size="13.2" fill="#bdbdbd" text-anchor="middle">18 ms</text>
<text x="929.84" y="987.1" font-size="13.2" fill="#bdbdbd" text-anchor="middle">22.5 ms</text>
<text x="1104.64" y="987.1" font-size="13.2" fill="#bdbdbd" text-anchor="middle">27 ms</text>
<text x="1279.44" y="987.1" font-size="13.2" fill="#bdbdbd" text-anchor="middle">31.5 ms</text>
<text x="1454.24" y="987.1" font-size="13.2" fill="#bdbdbd" text-anchor="middle">36 ms</text>
<text x="1629.04" y="987.1" font-size="13.2" fill="#bdbdbd" text-anchor="middle">40.5 ms</text>
<text x="19" y="178.1" font-size="11.8" fill="#f0e41c" text-anchor="middle">C 1</text>
<text x="57.2" y="178.1" font-size="12.3" fill="#f0e41c" text-anchor="middle">20 V</text>
<text x="101.8" y="179.1" font-size="18.8" fill="#f0e41c" letter-spacing="0.55">U_loop,coil</text>
<text x="19" y="411.8" font-size="11.8" fill="#8cc63c" text-anchor="middle">C 4</text>
<text x="57.2" y="411.8" font-size="12.3" fill="#8cc63c" text-anchor="middle">200 mV</text>
<text x="101.8" y="412.8" font-size="18.8" fill="#8cc63c" letter-spacing="0.55">U_Photod</text>
<text x="23" y="739.6" font-size="12.5" fill="#ee9430" text-anchor="middle" letter-spacing="0.3">M 1</text>
<text x="53.5" y="741" font-size="18.3" fill="#ee9430">B_t</text>
<text x="23" y="966.4" font-size="12.5" fill="#ffffff" text-anchor="middle" letter-spacing="0.3">M 2</text>
<text x="53.5" y="968" font-size="18.3" fill="#7d35a8">I_p</text>
<text x="20.3" y="19" font-size="16.7" fill="#f0f0f0">File</text>
<text x="86.7" y="19" font-size="16.7" fill="#f0f0f0">Edit</text>
<text x="155.5" y="19" font-size="16.7" fill="#f0f0f0" letter-spacing="0.9">Utility</text>
<text x="240.6" y="19" font-size="16.7" fill="#f0f0f0">Help</text>
<text x="16.4" y="50" font-size="17" fill="#dcdcdc" letter-spacing="0.45">Waveform View</text>
<text x="1844.5" y="44" font-size="15" fill="#e6e6e6" text-anchor="middle" font-weight="700" letter-spacing="0.9">Add New...</text>
<text x="1809.5" y="76.7" font-size="14.6" fill="#f0f0f0" text-anchor="middle">Cursors</text>
<text x="1881.5" y="76.7" font-size="14.6" fill="#f0f0f0" text-anchor="middle">Callout</text>
<text x="1809.5" y="123" font-size="14.6" fill="#f0f0f0" text-anchor="middle">Measure</text>
<text x="1881.5" y="123" font-size="14.6" fill="#f0f0f0" text-anchor="middle">Search</text>
<text x="1809.5" y="161.2" font-size="14.6" fill="#f0f0f0" text-anchor="middle">Results</text>
<text x="1809.5" y="177" font-size="14.6" fill="#f0f0f0" text-anchor="middle">Table</text>
<text x="1881.5" y="169.2" font-size="14.6" fill="#f0f0f0" text-anchor="middle">Plot</text>
<text x="1881.5" y="219.2" font-size="14.6" fill="#f0f0f0" text-anchor="middle" letter-spacing="0.9">More...</text>
<text x="8.5" y="1017" font-size="15.3" fill="#f2ea1e" letter-spacing="-0.8">Ch 1</text>
<text x="8" y="1036.8" font-size="14.6" fill="#111">5 V/div</text>
<text x="8" y="1056" font-size="14.6" fill="#111">1 MΩ</text>
<text x="8" y="1074.8" font-size="14.6" fill="#111">200 kHz</text>
<text x="75" y="1069" font-size="9.5" fill="#111">B</text>
<text x="80" y="1072" font-size="9.5" fill="#111">w</text>
<text x="103.5" y="1017" font-size="15.3" fill="#0e1c1c" letter-spacing="-0.8">Ch 2</text>
<text x="103" y="1036.8" font-size="14.6" fill="#1a1a1a">250 mV/div</text>
<text x="103" y="1056" font-size="14.6" fill="#1a1a1a">1 MΩ</text>
<text x="103" y="1074.8" font-size="14.6" fill="#1a1a1a">200 kHz</text>
<text x="170" y="1069" font-size="9.5" fill="#1a1a1a">B</text>
<text x="175" y="1072" font-size="9.5" fill="#1a1a1a">w</text>
<text x="198.5" y="1017" font-size="15.3" fill="#c4c4c4" letter-spacing="-0.8">Ch 3</text>
<text x="198" y="1036.8" font-size="14.6" fill="#1e1e1e">450 mV/div</text>
<text x="198" y="1056" font-size="14.6" fill="#1e1e1e">1 MΩ</text>
<text x="198" y="1074.8" font-size="14.6" fill="#1e1e1e">200 kHz</text>
<text x="265" y="1069" font-size="9.5" fill="#1e1e1e">B</text>
<text x="270" y="1072" font-size="9.5" fill="#1e1e1e">w</text>
<text x="293.5" y="1017" font-size="15.3" fill="#8fd13a" letter-spacing="-0.8">Ch 4</text>
<text x="293" y="1036.8" font-size="14.6" fill="#111">200 mV/div</text>
<text x="293" y="1056" font-size="14.6" fill="#111">1 MΩ</text>
<text x="293" y="1074.8" font-size="14.6" fill="#111">200 kHz</text>
<text x="360" y="1069" font-size="9.5" fill="#111">B</text>
<text x="365" y="1072" font-size="9.5" fill="#111">w</text>
<text x="388.5" y="1017" font-size="15.3" fill="#f39a2e">Math 1</text>
<text x="388" y="1036.8" font-size="14.6" fill="#111">72.7 mT/div</text>
<text x="388" y="1056" font-size="14.6" fill="#111">Intg(Ch2)…</text>
<text x="483.5" y="1017" font-size="15.3" fill="#ffffff">Math 2</text>
<text x="483" y="1036.8" font-size="14.6" fill="#111">652.45 A/div</text>
<text x="483" y="1056" font-size="14.6" fill="#111">-Intg(Ch3…</text>
<text x="1042.9" y="1050.1" font-size="20" fill="#f0f0f0" text-anchor="middle">5</text>
<text x="1088" y="1050.1" font-size="20" fill="#f0f0f0" text-anchor="middle">6</text>
<text x="1149.1" y="1032.6" font-size="15" fill="#f0f0f0" text-anchor="middle">Add</text>
<text x="1149.1" y="1048.8" font-size="15" fill="#f0f0f0" text-anchor="middle">New</text>
<text x="1149.1" y="1065" font-size="15" fill="#f0f0f0" text-anchor="middle">Math</text>
<text x="1194.1" y="1032.6" font-size="15" fill="#f0f0f0" text-anchor="middle">Add</text>
<text x="1194.1" y="1048.8" font-size="15" fill="#f0f0f0" text-anchor="middle">New</text>
<text x="1194.1" y="1065" font-size="15" fill="#f0f0f0" text-anchor="middle">Ref</text>
<text x="1239.1" y="1032.6" font-size="15" fill="#f0f0f0" text-anchor="middle">Add</text>
<text x="1239.1" y="1048.8" font-size="15" fill="#f0f0f0" text-anchor="middle">New</text>
<text x="1239.1" y="1065" font-size="15" fill="#f0f0f0" text-anchor="middle">Bus</text>
<text x="1286.6" y="1017.9" font-size="16" fill="#f4f4f4">Horizontal</text>
<text x="1285.5" y="1036.8" font-size="14.2" fill="#111">4.5 ms/div</text>
<text x="1390.9" y="1036.8" font-size="14.2" fill="#111">45 ms</text>
<text x="1285.5" y="1055.7" font-size="14.2" fill="#111">SR: 1 MS/s</text>
<text x="1390.9" y="1055.7" font-size="14.2" fill="#111">1 µs/pt</text>
<text x="1285.5" y="1074.6" font-size="14.2" fill="#111">RL: 45 kpts</text>
<text x="1405" y="1074.6" font-size="14.2" fill="#111" letter-spacing="0.5">3%</text>
<text x="1491.6" y="1018.1" font-size="15.6" fill="#f4f4f4">Trigger</text>
<text x="1556.2" y="1036.9" font-size="14.2" fill="#111" letter-spacing="0.3">3 V</text>
<text x="1505.2" y="1037" font-size="14" fill="#ffffff" text-anchor="middle">6</text>
<text x="1656.3" y="1018" font-size="16" fill="#f4f4f4">Acquisition</text>
<text x="1655.1" y="1037" font-size="14.2" fill="#111">Manual,</text>
<text x="1736" y="1037" font-size="14.2" fill="#111">Analyze</text>
<text x="1655.1" y="1055.9" font-size="14.2" fill="#111" letter-spacing="-0.05">High Res: 16 bits</text>
<text x="1655.1" y="1074.7" font-size="14.2" fill="#111">Single: 0 /1</text>
<text x="1867" y="1019.5" font-size="13.2" fill="#ffffff" text-anchor="middle" font-weight="700" letter-spacing="0.75">Preview</text>
<text x="1866.6" y="1055.2" font-size="15" fill="#111" text-anchor="middle">28 May 2025</text>
<text x="1866.6" y="1072" font-size="15" fill="#111" text-anchor="middle">4:19:58 PM</text>
<g fill="#ffffff"><path d="M1785.8,4 H1803.9 L1801.6,9.1 H1796 V25.9 H1790.6 V9.1 H1785.8 Z"/><circle cx="1805.9" cy="17.8" r="5.85" fill="none" stroke="#ffffff" stroke-width="4.4"/><rect x="1801.5" y="16" width="10" height="4"/><rect x="1807" y="20" width="8" height="1.6" fill="#303030"/><rect x="1815" y="4" width="4.9" height="21.9"/><path d="M1821.3,19.8 L1824.2,15.2 L1829.9,25.9 H1822.6 Z"/><path d="M1831,25.9 H1835.8 V14.6 H1838.7 V9.8 H1835.8 V4.4 L1831,11.8 Z"/><path d="M1840.1,25.8 V9.8 H1844.4 V11.4 Q1845.8,9.6 1848,9.6 V14.6 Q1844.4,14.6 1844.4,17.6 V25.8 Z"/><ellipse cx="1856.5" cy="17.9" rx="5.6" ry="5.8" fill="none" stroke="#ffffff" stroke-width="5"/><path d="M1866,25.8 V9.8 H1870.5 V11.4 Q1872.3,9.5 1874.8,9.5 Q1879.9,9.5 1879.9,15.2 V25.8 H1875.4 V16.6 Q1875.4,14.4 1873.2,14.4 Q1870.5,14.4 1870.5,17 V25.8 Z"/><circle cx="1884.5" cy="6.4" r="2.6"/><rect x="1882" y="10.2" width="5" height="15.6"/><path d="M1887.7,10.2 H1893.2 L1895.5,13.8 L1897.8,10.2 H1903.2 L1898.3,17.9 L1903.2,25.8 H1897.7 L1895.5,22.1 L1893.2,25.8 H1887.7 L1892.6,17.9 Z"/></g>
<path d="M1815,25.9 H1820.5 L1831,9.1 H1825.9 Z" fill="#1cc0e0"/>
</svg>
</body></html>
